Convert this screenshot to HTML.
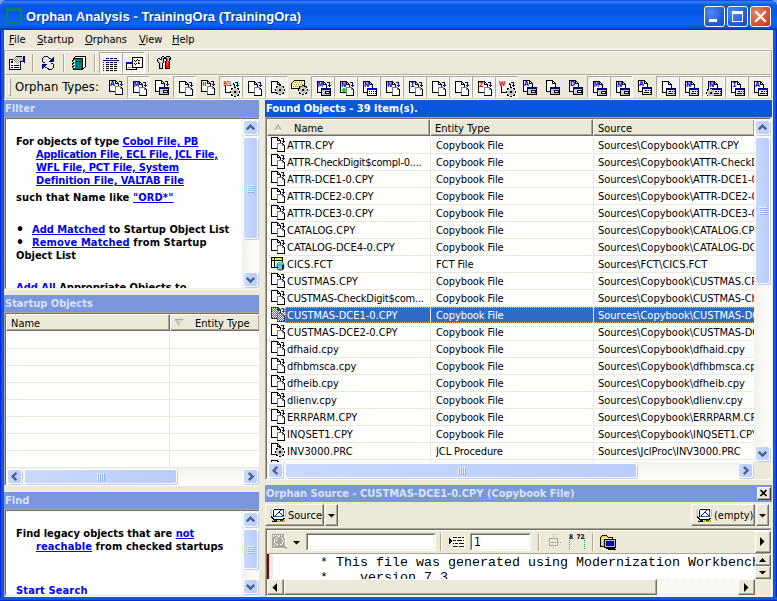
<!DOCTYPE html>
<html><head><meta charset="utf-8"><title>Orphan Analysis</title>
<style>
*{box-sizing:border-box;margin:0;padding:0}
html,body{width:777px;height:601px;overflow:hidden;background:#ECE9D8}
body{position:relative;font:11px 'DejaVu Sans Condensed','DejaVu Sans','Liberation Sans',sans-serif;color:#000}
.abs,.abs>*{position:absolute}
div,span,svg,a{position:absolute}
.t{white-space:nowrap;line-height:13px;height:13px}
a{position:static;color:#0000ff;text-decoration:underline}
.hdr{height:17px;background:#7A96DF;color:#D8E4F8;font-weight:bold;line-height:18px;padding-left:1px;white-space:nowrap;overflow:hidden}
.hdr.act{background:#0A56E1;color:#fff}
.sunk{border:1px solid;border-color:#ACA899 #fff #fff #ACA899;background:#fff}
.sunk>.in{left:0;top:0;right:0;bottom:0;border:1px solid;border-color:#716F64 #F1EFE2 #F1EFE2 #716F64;overflow:hidden}
.b{font-weight:bold}
.sbv{width:17px;background:linear-gradient(90deg,#F3F1EC,#FEFEFB)}
.sbh{height:17px;background:linear-gradient(180deg,#F3F1EC,#FEFEFB)}
.sbtn{width:17px;height:17px}
.sbtn>i,.thumb{position:absolute;left:1px;top:1px;width:15px;height:15px;border-radius:2.5px;border:1px solid #fff;box-shadow:1px 1px 0 #B8C9F2;background:linear-gradient(90deg,#C9D9FD,#BACDF8)}
.thumb{width:auto;height:auto;right:1px;bottom:1px}
.sbh .x{}
.colh{height:17px;background:#ECE9D8;border:1px solid;border-color:#fff #716F64 #716F64 #fff;box-shadow:-1px -1px 0 #ACA899 inset;line-height:18px;white-space:nowrap;overflow:hidden}
.row{height:17px;left:0;right:0;border-bottom:1px solid #ECE9D8}
.cell{top:0;height:16px;line-height:18px;white-space:nowrap;overflow:hidden}
.tb{width:23px;height:22px}
.tb.on{border:1px solid;border-color:#ACA899 #fff #fff #ACA899;background-color:#F6F4EC;background-image:repeating-conic-gradient(#fff 0 25%,#ECE9D8 0 50%);background-size:2px 2px}
.sep{width:2px;border-left:1px solid #ACA899;border-right:1px solid #fff}
</style></head>
<body>
<div style="left:0;top:0;width:777px;height:601px;background:#0A48D6"></div>
<div style="left:0;top:0;width:777px;height:30px;background:linear-gradient(180deg,#0A3ADB 0%,#2C75EC 4%,#2E7EF2 8%,#1463EA 13%,#0659E6 19%,#0556E3 45%,#0A5FEE 56%,#0C64F4 80%,#0A5CEB 88%,#0848D6 94%,#0433B4 100%)"></div>
<div style="left:0;top:0;width:6px;height:6px;background:radial-gradient(circle at 6px 6px,transparent 5.5px,#859BE0 6.2px)"></div>
<div style="left:771px;top:0;width:6px;height:6px;background:radial-gradient(circle at 0 6px,transparent 5.5px,#859BE0 6.2px)"></div>
<div style="left:0;top:30px;width:4px;height:571px;background:linear-gradient(90deg,#0019CF,#0831D9 25%,#166AEE 50%,#0855DD 75%)"></div>
<div style="left:773px;top:30px;width:4px;height:571px;background:linear-gradient(270deg,#0019CF,#0831D9 25%,#166AEE 50%,#0855DD 75%)"></div>
<div style="left:0;top:597px;width:777px;height:4px;background:linear-gradient(0deg,#0019CF,#0831D9 25%,#166AEE 50%,#0855DD 75%)"></div>
<div style="left:4px;top:30px;width:769px;height:567px;background:#ECE9D8"></div>
<div style="left:6px;top:8px;width:16px;height:15px;border:1px solid #0A806C;border-top-width:3px;border-left-width:2px;border-right-width:2px;border-radius:1px"></div>
<div class="t" style="left:26px;top:9px;height:16px;line-height:16px;font:bold 13px/16px 'Liberation Sans',sans-serif;color:#fff;text-shadow:1px 1px 0 rgba(10,24,131,.7);letter-spacing:0.06px">Orphan Analysis - TrainingOra (TrainingOra)</div>
<div style="left:704px;top:6px;width:21px;height:21px;border:1px solid #fff;border-radius:3px;background:radial-gradient(circle at 30% 30%,#4C8CF8,#1E58D8 70%,#1747C0)"><div style="left:4px;top:12px;width:8px;height:3px;background:#fff"></div></div>
<div style="left:727px;top:6px;width:21px;height:21px;border:1px solid #fff;border-radius:3px;background:radial-gradient(circle at 30% 30%,#4C8CF8,#1E58D8 70%,#1747C0)"><div style="left:4px;top:4px;width:11px;height:11px;border:1px solid #fff;border-top-width:3px"></div></div>
<div style="left:750px;top:6px;width:21px;height:21px;border:1px solid #fff;border-radius:3px;background:radial-gradient(circle at 30% 30%,#E8876A,#D5492A 70%,#B8311A)"><svg width="19" height="19" viewBox="0 0 19 19" style="left:0;top:0"><path d="M5 5L14 14M14 5L5 14" stroke="#fff" stroke-width="2.2" stroke-linecap="square"/></svg></div>
<div class="t" style="left:9px;top:33px"><span style="position:static;text-decoration:underline">F</span>ile</div>
<div class="t" style="left:37px;top:33px"><span style="position:static;text-decoration:underline">S</span>tartup</div>
<div class="t" style="left:85px;top:33px"><span style="position:static;text-decoration:underline">O</span>rphans</div>
<div class="t" style="left:139px;top:33px"><span style="position:static;text-decoration:underline">V</span>iew</div>
<div class="t" style="left:172px;top:33px"><span style="position:static;text-decoration:underline">H</span>elp</div>
<div style="left:4px;top:49px;width:769px;height:1px;background:#fff"></div>
<div style="left:4px;top:50px;width:768px;height:49px;border:1px solid #ACA899;border-bottom:0;box-shadow:1px 0 0 #fff,1px 1px 0 #fff inset"></div>
<div style="left:5px;top:74px;width:766px;height:1px;background:#ACA899"></div>
<div style="left:5px;top:75px;width:766px;height:1px;background:#fff"></div>
<div style="left:4px;top:98px;width:768px;height:1px;background:#C9C6B5"></div>
<div style="left:4px;top:99px;width:769px;height:1px;background:#fff"></div>
<div class="sep" style="left:32px;top:54px;height:18px"></div>
<div class="sep" style="left:63px;top:54px;height:18px"></div>
<div class="sep" style="left:94px;top:54px;height:18px"></div>
<div class="tb on" style="left:99px;top:52px;width:23px;height:22px"></div>
<div class="tb on" style="left:122px;top:52px;width:23px;height:22px"></div>
<div class="sep" style="left:148px;top:54px;height:18px"></div>
<div style="left:8px;top:78px;width:3px;height:18px;border:1px solid;border-color:#fff #ACA899 #ACA899 #fff"></div>
<div class="t" style="left:15px;top:78px;height:18px;font:13px/18px 'DejaVu Sans Condensed','DejaVu Sans','Liberation Sans',sans-serif">Orphan Types:</div>
<svg width="17" height="15" viewBox="0 0 17 15" shape-rendering="crispEdges" style="left:9px;top:55px"><rect x="7" y="1" width="6" height="1" fill="#000"/><rect x="14" y="1" width="2" height="1" fill="#000080"/><rect x="6" y="2" width="1" height="1" fill="#808080"/><rect x="7" y="2" width="1" height="1" fill="#fff"/><rect x="8" y="2" width="6" height="1" fill="#C0C0C0"/><rect x="14" y="2" width="2" height="1" fill="#000080"/><rect x="5" y="3" width="1" height="1" fill="#808080"/><rect x="6" y="3" width="1" height="1" fill="#fff"/><rect x="7" y="3" width="1" height="1" fill="#808080"/><rect x="8" y="3" width="1" height="1" fill="#fff"/><rect x="9" y="3" width="5" height="1" fill="#C0C0C0"/><rect x="14" y="3" width="2" height="1" fill="#000080"/><rect x="0" y="4" width="4" height="1" fill="#000"/><rect x="4" y="4" width="1" height="1" fill="#808080"/><rect x="5" y="4" width="1" height="1" fill="#fff"/><rect x="6" y="4" width="1" height="1" fill="#808080"/><rect x="7" y="4" width="1" height="1" fill="#fff"/><rect x="8" y="4" width="1" height="1" fill="#808080"/><rect x="9" y="4" width="1" height="1" fill="#fff"/><rect x="10" y="4" width="4" height="1" fill="#C0C0C0"/><rect x="14" y="4" width="2" height="1" fill="#000080"/><rect x="0" y="5" width="1" height="1" fill="#000"/><rect x="1" y="5" width="2" height="1" fill="#fff"/><rect x="3" y="5" width="1" height="1" fill="#808080"/><rect x="4" y="5" width="1" height="1" fill="#fff"/><rect x="5" y="5" width="1" height="1" fill="#808080"/><rect x="6" y="5" width="1" height="1" fill="#fff"/><rect x="7" y="5" width="1" height="1" fill="#808080"/><rect x="8" y="5" width="1" height="1" fill="#fff"/><rect x="9" y="5" width="1" height="1" fill="#808080"/><rect x="10" y="5" width="1" height="1" fill="#fff"/><rect x="11" y="5" width="3" height="1" fill="#C0C0C0"/><rect x="14" y="5" width="2" height="1" fill="#000080"/><rect x="0" y="6" width="1" height="1" fill="#000"/><rect x="1" y="6" width="1" height="1" fill="#fff"/><rect x="2" y="6" width="2" height="1" fill="#000"/><rect x="4" y="6" width="2" height="1" fill="#fff"/><rect x="6" y="6" width="1" height="1" fill="#808080"/><rect x="7" y="6" width="1" height="1" fill="#fff"/><rect x="8" y="6" width="1" height="1" fill="#808080"/><rect x="9" y="6" width="1" height="1" fill="#fff"/><rect x="10" y="6" width="1" height="1" fill="#808080"/><rect x="11" y="6" width="3" height="1" fill="#000"/><rect x="14" y="6" width="2" height="1" fill="#000080"/><rect x="0" y="7" width="1" height="1" fill="#000"/><rect x="1" y="7" width="1" height="1" fill="#fff"/><rect x="2" y="7" width="2" height="1" fill="#000"/><rect x="4" y="7" width="3" height="1" fill="#fff"/><rect x="7" y="7" width="1" height="1" fill="#808080"/><rect x="8" y="7" width="1" height="1" fill="#fff"/><rect x="9" y="7" width="1" height="1" fill="#808080"/><rect x="10" y="7" width="1" height="1" fill="#fff"/><rect x="11" y="7" width="1" height="1" fill="#000"/><rect x="15" y="7" width="1" height="1" fill="#000080"/><rect x="0" y="8" width="1" height="1" fill="#000"/><rect x="1" y="8" width="7" height="1" fill="#fff"/><rect x="8" y="8" width="1" height="1" fill="#808080"/><rect x="9" y="8" width="2" height="1" fill="#fff"/><rect x="11" y="8" width="1" height="1" fill="#000"/><rect x="0" y="9" width="1" height="1" fill="#000"/><rect x="1" y="9" width="10" height="1" fill="#fff"/><rect x="11" y="9" width="1" height="1" fill="#000"/><rect x="0" y="10" width="1" height="1" fill="#000"/><rect x="1" y="10" width="1" height="1" fill="#fff"/><rect x="2" y="10" width="2" height="1" fill="#000"/><rect x="4" y="10" width="1" height="1" fill="#fff"/><rect x="5" y="10" width="5" height="1" fill="#000"/><rect x="10" y="10" width="1" height="1" fill="#fff"/><rect x="11" y="10" width="1" height="1" fill="#000"/><rect x="0" y="11" width="1" height="1" fill="#000"/><rect x="1" y="11" width="10" height="1" fill="#fff"/><rect x="11" y="11" width="1" height="1" fill="#000"/><rect x="0" y="12" width="1" height="1" fill="#000"/><rect x="1" y="12" width="1" height="1" fill="#fff"/><rect x="2" y="12" width="2" height="1" fill="#000"/><rect x="4" y="12" width="1" height="1" fill="#fff"/><rect x="5" y="12" width="5" height="1" fill="#000"/><rect x="10" y="12" width="1" height="1" fill="#fff"/><rect x="11" y="12" width="1" height="1" fill="#000"/><rect x="0" y="13" width="1" height="1" fill="#000"/><rect x="1" y="13" width="10" height="1" fill="#fff"/><rect x="11" y="13" width="1" height="1" fill="#000"/><rect x="0" y="14" width="12" height="1" fill="#000"/></svg>
<svg width="12" height="14" viewBox="0 0 12 14" shape-rendering="crispEdges" style="left:42px;top:56px"><rect x="2" y="0" width="4" height="1" fill="#000080"/><rect x="1" y="1" width="1" height="1" fill="#000080"/><rect x="6" y="1" width="1" height="1" fill="#000080"/><rect x="11" y="1" width="1" height="1" fill="#000080"/><rect x="0" y="2" width="1" height="1" fill="#000080"/><rect x="7" y="2" width="2" height="1" fill="#000080"/><rect x="10" y="2" width="2" height="1" fill="#000080"/><rect x="0" y="3" width="1" height="1" fill="#000080"/><rect x="9" y="3" width="3" height="1" fill="#000080"/><rect x="0" y="4" width="1" height="1" fill="#000080"/><rect x="8" y="4" width="4" height="1" fill="#000080"/><rect x="0" y="5" width="1" height="1" fill="#000080"/><rect x="7" y="5" width="5" height="1" fill="#000080"/><rect x="1" y="6" width="2" height="1" fill="#000080"/><rect x="9" y="7" width="2" height="1" fill="#000080"/><rect x="0" y="8" width="5" height="1" fill="#000080"/><rect x="11" y="8" width="1" height="1" fill="#000080"/><rect x="0" y="9" width="4" height="1" fill="#000080"/><rect x="11" y="9" width="1" height="1" fill="#000080"/><rect x="0" y="10" width="3" height="1" fill="#000080"/><rect x="11" y="10" width="1" height="1" fill="#000080"/><rect x="0" y="11" width="2" height="1" fill="#000080"/><rect x="3" y="11" width="2" height="1" fill="#000080"/><rect x="11" y="11" width="1" height="1" fill="#000080"/><rect x="0" y="12" width="1" height="1" fill="#000080"/><rect x="5" y="12" width="2" height="1" fill="#000080"/><rect x="10" y="12" width="1" height="1" fill="#000080"/><rect x="6" y="13" width="4" height="1" fill="#000080"/></svg>
<svg width="14" height="14" viewBox="0 0 14 14" shape-rendering="crispEdges" style="left:72px;top:56px"><rect x="3" y="0" width="11" height="1" fill="#000"/><rect x="2" y="1" width="1" height="1" fill="#000"/><rect x="3" y="1" width="10" height="1" fill="#fff"/><rect x="13" y="1" width="1" height="1" fill="#000"/><rect x="1" y="2" width="10" height="1" fill="#000"/><rect x="11" y="2" width="2" height="1" fill="#fff"/><rect x="13" y="2" width="1" height="1" fill="#000"/><rect x="1" y="3" width="1" height="1" fill="#000"/><rect x="2" y="3" width="8" height="1" fill="#008080"/><rect x="10" y="3" width="1" height="1" fill="#000"/><rect x="11" y="3" width="2" height="1" fill="#fff"/><rect x="13" y="3" width="1" height="1" fill="#000"/><rect x="0" y="4" width="2" height="1" fill="#000"/><rect x="2" y="4" width="1" height="1" fill="#fff"/><rect x="3" y="4" width="7" height="1" fill="#008080"/><rect x="10" y="4" width="1" height="1" fill="#000"/><rect x="11" y="4" width="2" height="1" fill="#fff"/><rect x="13" y="4" width="1" height="1" fill="#000"/><rect x="0" y="5" width="1" height="1" fill="#000"/><rect x="1" y="5" width="2" height="1" fill="#fff"/><rect x="3" y="5" width="1" height="1" fill="#008080"/><rect x="4" y="5" width="2" height="1" fill="#000"/><rect x="6" y="5" width="1" height="1" fill="#008080"/><rect x="7" y="5" width="2" height="1" fill="#000"/><rect x="9" y="5" width="1" height="1" fill="#008080"/><rect x="10" y="5" width="1" height="1" fill="#000"/><rect x="11" y="5" width="2" height="1" fill="#fff"/><rect x="13" y="5" width="1" height="1" fill="#000"/><rect x="1" y="6" width="1" height="1" fill="#000"/><rect x="2" y="6" width="8" height="1" fill="#008080"/><rect x="10" y="6" width="1" height="1" fill="#000"/><rect x="11" y="6" width="2" height="1" fill="#fff"/><rect x="13" y="6" width="1" height="1" fill="#000"/><rect x="0" y="7" width="2" height="1" fill="#000"/><rect x="2" y="7" width="1" height="1" fill="#fff"/><rect x="3" y="7" width="7" height="1" fill="#008080"/><rect x="10" y="7" width="1" height="1" fill="#000"/><rect x="11" y="7" width="2" height="1" fill="#fff"/><rect x="13" y="7" width="1" height="1" fill="#000"/><rect x="0" y="8" width="1" height="1" fill="#000"/><rect x="1" y="8" width="2" height="1" fill="#fff"/><rect x="3" y="8" width="7" height="1" fill="#008080"/><rect x="10" y="8" width="1" height="1" fill="#000"/><rect x="11" y="8" width="2" height="1" fill="#fff"/><rect x="13" y="8" width="1" height="1" fill="#000"/><rect x="1" y="9" width="1" height="1" fill="#000"/><rect x="2" y="9" width="8" height="1" fill="#008080"/><rect x="10" y="9" width="1" height="1" fill="#000"/><rect x="11" y="9" width="2" height="1" fill="#fff"/><rect x="13" y="9" width="1" height="1" fill="#000"/><rect x="0" y="10" width="2" height="1" fill="#000"/><rect x="2" y="10" width="1" height="1" fill="#fff"/><rect x="3" y="10" width="7" height="1" fill="#008080"/><rect x="10" y="10" width="1" height="1" fill="#000"/><rect x="11" y="10" width="2" height="1" fill="#fff"/><rect x="13" y="10" width="1" height="1" fill="#000"/><rect x="0" y="11" width="1" height="1" fill="#000"/><rect x="1" y="11" width="2" height="1" fill="#fff"/><rect x="3" y="11" width="7" height="1" fill="#008080"/><rect x="10" y="11" width="1" height="1" fill="#000"/><rect x="11" y="11" width="1" height="1" fill="#fff"/><rect x="12" y="11" width="1" height="1" fill="#000"/><rect x="1" y="12" width="1" height="1" fill="#000"/><rect x="2" y="12" width="8" height="1" fill="#008080"/><rect x="10" y="12" width="2" height="1" fill="#000"/><rect x="1" y="13" width="10" height="1" fill="#000"/></svg>
<svg width="16" height="13" viewBox="0 0 16 13" shape-rendering="crispEdges" style="left:103px;top:58px"><rect x="3" y="0" width="3" height="1" fill="#000"/><rect x="7" y="0" width="3" height="1" fill="#000"/><rect x="11" y="0" width="3" height="1" fill="#000"/><rect x="0" y="2" width="16" height="1" fill="#000080"/><rect x="0" y="4" width="1" height="1" fill="#000080"/><rect x="3" y="4" width="3" height="1" fill="#000"/><rect x="7" y="4" width="3" height="1" fill="#000"/><rect x="11" y="4" width="3" height="1" fill="#000"/><rect x="0" y="6" width="1" height="1" fill="#000080"/><rect x="3" y="6" width="3" height="1" fill="#000"/><rect x="7" y="6" width="3" height="1" fill="#000"/><rect x="11" y="6" width="3" height="1" fill="#000"/><rect x="0" y="8" width="1" height="1" fill="#000080"/><rect x="3" y="8" width="3" height="1" fill="#000"/><rect x="7" y="8" width="3" height="1" fill="#000"/><rect x="11" y="8" width="3" height="1" fill="#000"/><rect x="0" y="10" width="1" height="1" fill="#000080"/><rect x="3" y="10" width="3" height="1" fill="#000"/><rect x="7" y="10" width="3" height="1" fill="#000"/><rect x="11" y="10" width="3" height="1" fill="#000"/><rect x="0" y="12" width="1" height="1" fill="#000080"/><rect x="3" y="12" width="3" height="1" fill="#000"/><rect x="7" y="12" width="3" height="1" fill="#000"/><rect x="11" y="12" width="3" height="1" fill="#000"/></svg>
<svg width="17" height="13" viewBox="0 0 17 13" shape-rendering="crispEdges" style="left:126px;top:57px"><rect x="6" y="0" width="11" height="1" fill="#000"/><rect x="6" y="1" width="1" height="1" fill="#000"/><rect x="7" y="1" width="9" height="1" fill="#fff"/><rect x="16" y="1" width="1" height="1" fill="#000"/><rect x="6" y="2" width="1" height="1" fill="#000"/><rect x="7" y="2" width="4" height="1" fill="#fff"/><rect x="11" y="2" width="1" height="1" fill="#000"/><rect x="12" y="2" width="4" height="1" fill="#fff"/><rect x="16" y="2" width="1" height="1" fill="#000"/><rect x="6" y="3" width="1" height="1" fill="#000"/><rect x="7" y="3" width="1" height="1" fill="#fff"/><rect x="8" y="3" width="1" height="1" fill="#000"/><rect x="9" y="3" width="1" height="1" fill="#fff"/><rect x="10" y="3" width="1" height="1" fill="#000"/><rect x="11" y="3" width="1" height="1" fill="#fff"/><rect x="12" y="3" width="2" height="1" fill="#000"/><rect x="14" y="3" width="2" height="1" fill="#fff"/><rect x="16" y="3" width="1" height="1" fill="#000"/><rect x="6" y="4" width="1" height="1" fill="#000"/><rect x="7" y="4" width="2" height="1" fill="#fff"/><rect x="9" y="4" width="1" height="1" fill="#000"/><rect x="10" y="4" width="6" height="1" fill="#fff"/><rect x="16" y="4" width="1" height="1" fill="#000"/><rect x="0" y="5" width="6" height="1" fill="#0000FF"/><rect x="6" y="5" width="1" height="1" fill="#000"/><rect x="7" y="5" width="5" height="1" fill="#fff"/><rect x="12" y="5" width="1" height="1" fill="#000"/><rect x="13" y="5" width="3" height="1" fill="#fff"/><rect x="16" y="5" width="1" height="1" fill="#000"/><rect x="0" y="6" width="6" height="1" fill="#0000FF"/><rect x="6" y="6" width="1" height="1" fill="#000"/><rect x="7" y="6" width="1" height="1" fill="#fff"/><rect x="8" y="6" width="1" height="1" fill="#000"/><rect x="9" y="6" width="1" height="1" fill="#fff"/><rect x="10" y="6" width="1" height="1" fill="#000"/><rect x="11" y="6" width="1" height="1" fill="#fff"/><rect x="12" y="6" width="2" height="1" fill="#000"/><rect x="14" y="6" width="2" height="1" fill="#fff"/><rect x="16" y="6" width="1" height="1" fill="#000"/><rect x="0" y="7" width="1" height="1" fill="#000"/><rect x="1" y="7" width="5" height="1" fill="#fff"/><rect x="6" y="7" width="1" height="1" fill="#000"/><rect x="7" y="7" width="2" height="1" fill="#fff"/><rect x="9" y="7" width="1" height="1" fill="#000"/><rect x="10" y="7" width="6" height="1" fill="#fff"/><rect x="16" y="7" width="1" height="1" fill="#000"/><rect x="0" y="8" width="1" height="1" fill="#000"/><rect x="1" y="8" width="5" height="1" fill="#fff"/><rect x="6" y="8" width="1" height="1" fill="#000"/><rect x="7" y="8" width="9" height="1" fill="#fff"/><rect x="16" y="8" width="1" height="1" fill="#000"/><rect x="0" y="9" width="1" height="1" fill="#000"/><rect x="1" y="9" width="5" height="1" fill="#fff"/><rect x="6" y="9" width="1" height="1" fill="#000"/><rect x="7" y="9" width="9" height="1" fill="#fff"/><rect x="16" y="9" width="1" height="1" fill="#000"/><rect x="0" y="10" width="1" height="1" fill="#000"/><rect x="1" y="10" width="1" height="1" fill="#fff"/><rect x="2" y="10" width="3" height="1" fill="#808080"/><rect x="5" y="10" width="1" height="1" fill="#fff"/><rect x="6" y="10" width="11" height="1" fill="#000"/><rect x="0" y="11" width="1" height="1" fill="#000"/><rect x="1" y="11" width="9" height="1" fill="#fff"/><rect x="10" y="11" width="1" height="1" fill="#000"/><rect x="0" y="12" width="11" height="1" fill="#000"/></svg>
<svg width="14" height="13" viewBox="0 0 14 13" shape-rendering="crispEdges" style="left:157px;top:56px"><rect x="5" y="0" width="2" height="1" fill="#000"/><rect x="9" y="0" width="4" height="1" fill="#000"/><rect x="4" y="1" width="1" height="1" fill="#000"/><rect x="5" y="1" width="1" height="1" fill="#fff"/><rect x="6" y="1" width="1" height="1" fill="#C0C0C0"/><rect x="7" y="1" width="2" height="1" fill="#000"/><rect x="9" y="1" width="1" height="1" fill="#C0C0C0"/><rect x="10" y="1" width="1" height="1" fill="#fff"/><rect x="11" y="1" width="2" height="1" fill="#C0C0C0"/><rect x="13" y="1" width="1" height="1" fill="#000"/><rect x="1" y="2" width="2" height="1" fill="#000"/><rect x="4" y="2" width="1" height="1" fill="#000"/><rect x="5" y="2" width="1" height="1" fill="#C0C0C0"/><rect x="6" y="2" width="4" height="1" fill="#000"/><rect x="10" y="2" width="1" height="1" fill="#808080"/><rect x="11" y="2" width="1" height="1" fill="#C0C0C0"/><rect x="12" y="2" width="2" height="1" fill="#000"/><rect x="0" y="3" width="1" height="1" fill="#000"/><rect x="1" y="3" width="1" height="1" fill="#fff"/><rect x="2" y="3" width="1" height="1" fill="#C0C0C0"/><rect x="3" y="3" width="2" height="1" fill="#000"/><rect x="5" y="3" width="1" height="1" fill="#fff"/><rect x="6" y="3" width="1" height="1" fill="#000"/><rect x="9" y="3" width="1" height="1" fill="#000"/><rect x="10" y="3" width="1" height="1" fill="#808080"/><rect x="11" y="3" width="1" height="1" fill="#C0C0C0"/><rect x="12" y="3" width="2" height="1" fill="#000"/><rect x="0" y="4" width="1" height="1" fill="#000"/><rect x="1" y="4" width="1" height="1" fill="#C0C0C0"/><rect x="2" y="4" width="1" height="1" fill="#fff"/><rect x="3" y="4" width="3" height="1" fill="#C0C0C0"/><rect x="6" y="4" width="1" height="1" fill="#000"/><rect x="9" y="4" width="1" height="1" fill="#000"/><rect x="10" y="4" width="1" height="1" fill="#808080"/><rect x="11" y="4" width="1" height="1" fill="#C0C0C0"/><rect x="12" y="4" width="1" height="1" fill="#000"/><rect x="0" y="5" width="1" height="1" fill="#000"/><rect x="1" y="5" width="2" height="1" fill="#C0C0C0"/><rect x="3" y="5" width="2" height="1" fill="#fff"/><rect x="5" y="5" width="1" height="1" fill="#C0C0C0"/><rect x="6" y="5" width="1" height="1" fill="#000"/><rect x="8" y="5" width="1" height="1" fill="#000"/><rect x="9" y="5" width="1" height="1" fill="#FF0000"/><rect x="10" y="5" width="1" height="1" fill="#808080"/><rect x="11" y="5" width="1" height="1" fill="#FF0000"/><rect x="12" y="5" width="1" height="1" fill="#000"/><rect x="1" y="6" width="1" height="1" fill="#000"/><rect x="2" y="6" width="4" height="1" fill="#C0C0C0"/><rect x="6" y="6" width="1" height="1" fill="#000"/><rect x="8" y="6" width="1" height="1" fill="#000"/><rect x="9" y="6" width="1" height="1" fill="#FF0000"/><rect x="10" y="6" width="1" height="1" fill="#FFFF00"/><rect x="11" y="6" width="1" height="1" fill="#FF0000"/><rect x="12" y="6" width="1" height="1" fill="#000"/><rect x="2" y="7" width="1" height="1" fill="#000"/><rect x="3" y="7" width="1" height="1" fill="#C0C0C0"/><rect x="4" y="7" width="1" height="1" fill="#fff"/><rect x="5" y="7" width="1" height="1" fill="#000"/><rect x="8" y="7" width="1" height="1" fill="#000"/><rect x="9" y="7" width="1" height="1" fill="#FF0000"/><rect x="10" y="7" width="1" height="1" fill="#808080"/><rect x="11" y="7" width="1" height="1" fill="#FF0000"/><rect x="12" y="7" width="1" height="1" fill="#000"/><rect x="2" y="8" width="1" height="1" fill="#000"/><rect x="3" y="8" width="1" height="1" fill="#C0C0C0"/><rect x="4" y="8" width="1" height="1" fill="#fff"/><rect x="5" y="8" width="1" height="1" fill="#000"/><rect x="8" y="8" width="1" height="1" fill="#000"/><rect x="9" y="8" width="1" height="1" fill="#FF0000"/><rect x="10" y="8" width="1" height="1" fill="#808080"/><rect x="11" y="8" width="1" height="1" fill="#FF0000"/><rect x="12" y="8" width="1" height="1" fill="#000"/><rect x="2" y="9" width="1" height="1" fill="#000"/><rect x="3" y="9" width="1" height="1" fill="#C0C0C0"/><rect x="4" y="9" width="1" height="1" fill="#fff"/><rect x="5" y="9" width="1" height="1" fill="#000"/><rect x="8" y="9" width="1" height="1" fill="#000"/><rect x="9" y="9" width="1" height="1" fill="#FF0000"/><rect x="10" y="9" width="1" height="1" fill="#808080"/><rect x="11" y="9" width="1" height="1" fill="#FF0000"/><rect x="12" y="9" width="1" height="1" fill="#000"/><rect x="2" y="10" width="1" height="1" fill="#000"/><rect x="3" y="10" width="1" height="1" fill="#C0C0C0"/><rect x="4" y="10" width="1" height="1" fill="#fff"/><rect x="5" y="10" width="1" height="1" fill="#000"/><rect x="8" y="10" width="1" height="1" fill="#000"/><rect x="9" y="10" width="3" height="1" fill="#FF0000"/><rect x="12" y="10" width="1" height="1" fill="#000"/><rect x="2" y="11" width="1" height="1" fill="#000"/><rect x="3" y="11" width="1" height="1" fill="#C0C0C0"/><rect x="4" y="11" width="1" height="1" fill="#fff"/><rect x="5" y="11" width="1" height="1" fill="#000"/><rect x="8" y="11" width="1" height="1" fill="#000"/><rect x="9" y="11" width="3" height="1" fill="#FF0000"/><rect x="12" y="11" width="1" height="1" fill="#000"/><rect x="2" y="12" width="4" height="1" fill="#000"/><rect x="8" y="12" width="5" height="1" fill="#000"/></svg>
<svg width="10" height="12" viewBox="0 0 10 12" shape-rendering="crispEdges" style="left:109px;top:80px"><rect x="0" y="0" width="7" height="1" fill="#000"/><rect x="0" y="1" width="1" height="1" fill="#000"/><rect x="1" y="1" width="5" height="1" fill="#fff"/><rect x="6" y="1" width="2" height="1" fill="#000"/><rect x="0" y="2" width="1" height="1" fill="#000"/><rect x="1" y="2" width="5" height="1" fill="#fff"/><rect x="6" y="2" width="1" height="1" fill="#000"/><rect x="7" y="2" width="1" height="1" fill="#fff"/><rect x="8" y="2" width="1" height="1" fill="#000"/><rect x="0" y="3" width="1" height="1" fill="#000"/><rect x="1" y="3" width="5" height="1" fill="#fff"/><rect x="6" y="3" width="4" height="1" fill="#000"/><rect x="0" y="4" width="1" height="1" fill="#000"/><rect x="1" y="4" width="8" height="1" fill="#fff"/><rect x="9" y="4" width="1" height="1" fill="#000"/><rect x="0" y="5" width="1" height="1" fill="#000"/><rect x="1" y="5" width="8" height="1" fill="#fff"/><rect x="9" y="5" width="1" height="1" fill="#000"/><rect x="0" y="6" width="1" height="1" fill="#000"/><rect x="1" y="6" width="8" height="1" fill="#fff"/><rect x="9" y="6" width="1" height="1" fill="#000"/><rect x="0" y="7" width="1" height="1" fill="#000"/><rect x="1" y="7" width="8" height="1" fill="#fff"/><rect x="9" y="7" width="1" height="1" fill="#000"/><rect x="0" y="8" width="1" height="1" fill="#000"/><rect x="1" y="8" width="8" height="1" fill="#fff"/><rect x="9" y="8" width="1" height="1" fill="#000"/><rect x="0" y="9" width="1" height="1" fill="#000"/><rect x="1" y="9" width="8" height="1" fill="#fff"/><rect x="9" y="9" width="1" height="1" fill="#000"/><rect x="0" y="10" width="1" height="1" fill="#000"/><rect x="1" y="10" width="8" height="1" fill="#fff"/><rect x="9" y="10" width="1" height="1" fill="#000"/><rect x="0" y="11" width="10" height="1" fill="#000"/></svg>
<svg width="23" height="22" viewBox="0 0 23 22" style="left:104px;top:76px"><text x="6" y="10" font-family="'DejaVu Sans Condensed','Liberation Sans',sans-serif" font-weight="bold" font-size="7" fill="#0000F0">A</text></svg>
<svg width="8" height="9" viewBox="0 0 8 9" shape-rendering="crispEdges" style="left:115px;top:86px"><rect x="0" y="0" width="6" height="1" fill="#808080"/><rect x="0" y="1" width="1" height="1" fill="#808080"/><rect x="1" y="1" width="4" height="1" fill="#fff"/><rect x="5" y="1" width="1" height="1" fill="#808080"/><rect x="6" y="1" width="1" height="1" fill="#000"/><rect x="0" y="2" width="1" height="1" fill="#808080"/><rect x="1" y="2" width="4" height="1" fill="#fff"/><rect x="5" y="2" width="2" height="1" fill="#808080"/><rect x="7" y="2" width="1" height="1" fill="#000"/><rect x="0" y="3" width="1" height="1" fill="#808080"/><rect x="1" y="3" width="6" height="1" fill="#fff"/><rect x="7" y="3" width="1" height="1" fill="#000"/><rect x="0" y="4" width="1" height="1" fill="#808080"/><rect x="1" y="4" width="6" height="1" fill="#fff"/><rect x="7" y="4" width="1" height="1" fill="#000"/><rect x="0" y="5" width="1" height="1" fill="#808080"/><rect x="1" y="5" width="6" height="1" fill="#fff"/><rect x="7" y="5" width="1" height="1" fill="#000"/><rect x="0" y="6" width="1" height="1" fill="#808080"/><rect x="1" y="6" width="6" height="1" fill="#fff"/><rect x="7" y="6" width="1" height="1" fill="#000"/><rect x="0" y="7" width="1" height="1" fill="#808080"/><rect x="1" y="7" width="6" height="1" fill="#fff"/><rect x="7" y="7" width="1" height="1" fill="#000"/><rect x="0" y="8" width="8" height="1" fill="#000"/></svg>
<svg width="5" height="5" viewBox="0 0 5 5" shape-rendering="crispEdges" style="left:119px;top:81px"><rect x="0" y="0" width="3" height="1" fill="#0000A8"/><rect x="2" y="1" width="1" height="1" fill="#0000A8"/><rect x="2" y="2" width="1" height="1" fill="#0000A8"/><rect x="1" y="3" width="3" height="1" fill="#0000A8"/><rect x="2" y="4" width="1" height="1" fill="#0000A8"/></svg>
<div class="tb on" style="left:127px;top:76px"></div>
<svg width="10" height="12" viewBox="0 0 10 12" shape-rendering="crispEdges" style="left:133px;top:81px"><rect x="0" y="0" width="7" height="1" fill="#000"/><rect x="0" y="1" width="1" height="1" fill="#000"/><rect x="1" y="1" width="5" height="1" fill="#fff"/><rect x="6" y="1" width="2" height="1" fill="#000"/><rect x="0" y="2" width="1" height="1" fill="#000"/><rect x="1" y="2" width="5" height="1" fill="#fff"/><rect x="6" y="2" width="1" height="1" fill="#000"/><rect x="7" y="2" width="1" height="1" fill="#fff"/><rect x="8" y="2" width="1" height="1" fill="#000"/><rect x="0" y="3" width="1" height="1" fill="#000"/><rect x="1" y="3" width="5" height="1" fill="#fff"/><rect x="6" y="3" width="4" height="1" fill="#000"/><rect x="0" y="4" width="1" height="1" fill="#000"/><rect x="1" y="4" width="8" height="1" fill="#fff"/><rect x="9" y="4" width="1" height="1" fill="#000"/><rect x="0" y="5" width="1" height="1" fill="#000"/><rect x="1" y="5" width="8" height="1" fill="#fff"/><rect x="9" y="5" width="1" height="1" fill="#000"/><rect x="0" y="6" width="1" height="1" fill="#000"/><rect x="1" y="6" width="8" height="1" fill="#fff"/><rect x="9" y="6" width="1" height="1" fill="#000"/><rect x="0" y="7" width="1" height="1" fill="#000"/><rect x="1" y="7" width="8" height="1" fill="#fff"/><rect x="9" y="7" width="1" height="1" fill="#000"/><rect x="0" y="8" width="1" height="1" fill="#000"/><rect x="1" y="8" width="8" height="1" fill="#fff"/><rect x="9" y="8" width="1" height="1" fill="#000"/><rect x="0" y="9" width="1" height="1" fill="#000"/><rect x="1" y="9" width="8" height="1" fill="#fff"/><rect x="9" y="9" width="1" height="1" fill="#000"/><rect x="0" y="10" width="1" height="1" fill="#000"/><rect x="1" y="10" width="8" height="1" fill="#fff"/><rect x="9" y="10" width="1" height="1" fill="#000"/><rect x="0" y="11" width="10" height="1" fill="#000"/></svg>
<svg width="23" height="22" viewBox="0 0 23 22" style="left:128px;top:77px"><text x="5.8" y="10" font-family="'DejaVu Sans Condensed','Liberation Sans',sans-serif" font-weight="bold" font-size="7" fill="#0000F0" textLength="5.4" lengthAdjust="spacingAndGlyphs">M</text></svg>
<svg width="8" height="9" viewBox="0 0 8 9" shape-rendering="crispEdges" style="left:139px;top:87px"><rect x="0" y="0" width="6" height="1" fill="#808080"/><rect x="0" y="1" width="1" height="1" fill="#808080"/><rect x="1" y="1" width="4" height="1" fill="#fff"/><rect x="5" y="1" width="1" height="1" fill="#808080"/><rect x="6" y="1" width="1" height="1" fill="#000"/><rect x="0" y="2" width="1" height="1" fill="#808080"/><rect x="1" y="2" width="4" height="1" fill="#fff"/><rect x="5" y="2" width="2" height="1" fill="#808080"/><rect x="7" y="2" width="1" height="1" fill="#000"/><rect x="0" y="3" width="1" height="1" fill="#808080"/><rect x="1" y="3" width="6" height="1" fill="#fff"/><rect x="7" y="3" width="1" height="1" fill="#000"/><rect x="0" y="4" width="1" height="1" fill="#808080"/><rect x="1" y="4" width="6" height="1" fill="#fff"/><rect x="7" y="4" width="1" height="1" fill="#000"/><rect x="0" y="5" width="1" height="1" fill="#808080"/><rect x="1" y="5" width="6" height="1" fill="#fff"/><rect x="7" y="5" width="1" height="1" fill="#000"/><rect x="0" y="6" width="1" height="1" fill="#808080"/><rect x="1" y="6" width="6" height="1" fill="#fff"/><rect x="7" y="6" width="1" height="1" fill="#000"/><rect x="0" y="7" width="1" height="1" fill="#808080"/><rect x="1" y="7" width="6" height="1" fill="#fff"/><rect x="7" y="7" width="1" height="1" fill="#000"/><rect x="0" y="8" width="8" height="1" fill="#000"/></svg>
<svg width="5" height="5" viewBox="0 0 5 5" shape-rendering="crispEdges" style="left:143px;top:82px"><rect x="0" y="0" width="3" height="1" fill="#0000A8"/><rect x="2" y="1" width="1" height="1" fill="#0000A8"/><rect x="2" y="2" width="1" height="1" fill="#0000A8"/><rect x="1" y="3" width="3" height="1" fill="#0000A8"/><rect x="2" y="4" width="1" height="1" fill="#0000A8"/></svg>
<svg width="10" height="12" viewBox="0 0 10 12" shape-rendering="crispEdges" style="left:155px;top:80px"><rect x="0" y="0" width="7" height="1" fill="#000"/><rect x="0" y="1" width="1" height="1" fill="#000"/><rect x="1" y="1" width="5" height="1" fill="#fff"/><rect x="6" y="1" width="2" height="1" fill="#000"/><rect x="0" y="2" width="1" height="1" fill="#000"/><rect x="1" y="2" width="5" height="1" fill="#fff"/><rect x="6" y="2" width="1" height="1" fill="#000"/><rect x="7" y="2" width="1" height="1" fill="#fff"/><rect x="8" y="2" width="1" height="1" fill="#000"/><rect x="0" y="3" width="1" height="1" fill="#000"/><rect x="1" y="3" width="5" height="1" fill="#fff"/><rect x="6" y="3" width="4" height="1" fill="#000"/><rect x="0" y="4" width="1" height="1" fill="#000"/><rect x="1" y="4" width="8" height="1" fill="#fff"/><rect x="9" y="4" width="1" height="1" fill="#000"/><rect x="0" y="5" width="1" height="1" fill="#000"/><rect x="1" y="5" width="8" height="1" fill="#fff"/><rect x="9" y="5" width="1" height="1" fill="#000"/><rect x="0" y="6" width="1" height="1" fill="#000"/><rect x="1" y="6" width="8" height="1" fill="#fff"/><rect x="9" y="6" width="1" height="1" fill="#000"/><rect x="0" y="7" width="1" height="1" fill="#000"/><rect x="1" y="7" width="8" height="1" fill="#fff"/><rect x="9" y="7" width="1" height="1" fill="#000"/><rect x="0" y="8" width="1" height="1" fill="#000"/><rect x="1" y="8" width="8" height="1" fill="#fff"/><rect x="9" y="8" width="1" height="1" fill="#000"/><rect x="0" y="9" width="1" height="1" fill="#000"/><rect x="1" y="9" width="8" height="1" fill="#fff"/><rect x="9" y="9" width="1" height="1" fill="#000"/><rect x="0" y="10" width="1" height="1" fill="#000"/><rect x="1" y="10" width="8" height="1" fill="#fff"/><rect x="9" y="10" width="1" height="1" fill="#000"/><rect x="0" y="11" width="10" height="1" fill="#000"/></svg>
<svg width="10" height="8" viewBox="0 0 10 8" shape-rendering="crispEdges" style="left:159px;top:87px"><rect x="0" y="0" width="10" height="1" fill="#000080"/><rect x="0" y="1" width="10" height="1" fill="#000080"/><rect x="0" y="2" width="1" height="1" fill="#000"/><rect x="1" y="2" width="8" height="1" fill="#C0C0C0"/><rect x="9" y="2" width="1" height="1" fill="#000"/><rect x="0" y="3" width="1" height="1" fill="#000"/><rect x="1" y="3" width="1" height="1" fill="#E0E0E0"/><rect x="2" y="3" width="1" height="1" fill="#C0C0C0"/><rect x="3" y="3" width="1" height="1" fill="#E0E0E0"/><rect x="4" y="3" width="6" height="1" fill="#000"/><rect x="0" y="4" width="1" height="1" fill="#000"/><rect x="1" y="4" width="1" height="1" fill="#C0C0C0"/><rect x="2" y="4" width="1" height="1" fill="#E0E0E0"/><rect x="3" y="4" width="1" height="1" fill="#C0C0C0"/><rect x="4" y="4" width="1" height="1" fill="#000"/><rect x="5" y="4" width="3" height="1" fill="#fff"/><rect x="8" y="4" width="2" height="1" fill="#000"/><rect x="0" y="5" width="1" height="1" fill="#000"/><rect x="1" y="5" width="1" height="1" fill="#E0E0E0"/><rect x="2" y="5" width="1" height="1" fill="#C0C0C0"/><rect x="3" y="5" width="1" height="1" fill="#E0E0E0"/><rect x="4" y="5" width="6" height="1" fill="#000"/><rect x="0" y="6" width="1" height="1" fill="#000"/><rect x="1" y="6" width="8" height="1" fill="#C0C0C0"/><rect x="9" y="6" width="1" height="1" fill="#000"/><rect x="0" y="7" width="10" height="1" fill="#000"/></svg>
<svg width="5" height="5" viewBox="0 0 5 5" shape-rendering="crispEdges" style="left:165px;top:81px"><rect x="0" y="0" width="3" height="1" fill="#0000A8"/><rect x="2" y="1" width="1" height="1" fill="#0000A8"/><rect x="2" y="2" width="1" height="1" fill="#0000A8"/><rect x="1" y="3" width="3" height="1" fill="#0000A8"/><rect x="2" y="4" width="1" height="1" fill="#0000A8"/></svg>
<div class="tb on" style="left:173px;top:76px"></div>
<svg width="10" height="12" viewBox="0 0 10 12" shape-rendering="crispEdges" style="left:179px;top:81px"><rect x="0" y="0" width="7" height="1" fill="#000"/><rect x="0" y="1" width="1" height="1" fill="#000"/><rect x="1" y="1" width="5" height="1" fill="#fff"/><rect x="6" y="1" width="2" height="1" fill="#000"/><rect x="0" y="2" width="1" height="1" fill="#000"/><rect x="1" y="2" width="5" height="1" fill="#fff"/><rect x="6" y="2" width="1" height="1" fill="#000"/><rect x="7" y="2" width="1" height="1" fill="#fff"/><rect x="8" y="2" width="1" height="1" fill="#000"/><rect x="0" y="3" width="1" height="1" fill="#000"/><rect x="1" y="3" width="5" height="1" fill="#fff"/><rect x="6" y="3" width="4" height="1" fill="#000"/><rect x="0" y="4" width="1" height="1" fill="#000"/><rect x="1" y="4" width="8" height="1" fill="#fff"/><rect x="9" y="4" width="1" height="1" fill="#000"/><rect x="0" y="5" width="1" height="1" fill="#000"/><rect x="1" y="5" width="8" height="1" fill="#fff"/><rect x="9" y="5" width="1" height="1" fill="#000"/><rect x="0" y="6" width="1" height="1" fill="#000"/><rect x="1" y="6" width="8" height="1" fill="#fff"/><rect x="9" y="6" width="1" height="1" fill="#000"/><rect x="0" y="7" width="1" height="1" fill="#000"/><rect x="1" y="7" width="8" height="1" fill="#fff"/><rect x="9" y="7" width="1" height="1" fill="#000"/><rect x="0" y="8" width="1" height="1" fill="#000"/><rect x="1" y="8" width="8" height="1" fill="#fff"/><rect x="9" y="8" width="1" height="1" fill="#000"/><rect x="0" y="9" width="1" height="1" fill="#000"/><rect x="1" y="9" width="8" height="1" fill="#fff"/><rect x="9" y="9" width="1" height="1" fill="#000"/><rect x="0" y="10" width="1" height="1" fill="#000"/><rect x="1" y="10" width="8" height="1" fill="#fff"/><rect x="9" y="10" width="1" height="1" fill="#000"/><rect x="0" y="11" width="10" height="1" fill="#000"/></svg>
<svg width="8" height="9" viewBox="0 0 8 9" shape-rendering="crispEdges" style="left:185px;top:87px"><rect x="0" y="0" width="6" height="1" fill="#808080"/><rect x="0" y="1" width="1" height="1" fill="#808080"/><rect x="1" y="1" width="4" height="1" fill="#fff"/><rect x="5" y="1" width="1" height="1" fill="#808080"/><rect x="6" y="1" width="1" height="1" fill="#000"/><rect x="0" y="2" width="1" height="1" fill="#808080"/><rect x="1" y="2" width="4" height="1" fill="#fff"/><rect x="5" y="2" width="2" height="1" fill="#808080"/><rect x="7" y="2" width="1" height="1" fill="#000"/><rect x="0" y="3" width="1" height="1" fill="#808080"/><rect x="1" y="3" width="6" height="1" fill="#fff"/><rect x="7" y="3" width="1" height="1" fill="#000"/><rect x="0" y="4" width="1" height="1" fill="#808080"/><rect x="1" y="4" width="6" height="1" fill="#fff"/><rect x="7" y="4" width="1" height="1" fill="#000"/><rect x="0" y="5" width="1" height="1" fill="#808080"/><rect x="1" y="5" width="6" height="1" fill="#fff"/><rect x="7" y="5" width="1" height="1" fill="#000"/><rect x="0" y="6" width="1" height="1" fill="#808080"/><rect x="1" y="6" width="6" height="1" fill="#fff"/><rect x="7" y="6" width="1" height="1" fill="#000"/><rect x="0" y="7" width="1" height="1" fill="#808080"/><rect x="1" y="7" width="6" height="1" fill="#fff"/><rect x="7" y="7" width="1" height="1" fill="#000"/><rect x="0" y="8" width="8" height="1" fill="#000"/></svg>
<svg width="5" height="5" viewBox="0 0 5 5" shape-rendering="crispEdges" style="left:189px;top:82px"><rect x="0" y="0" width="3" height="1" fill="#0000A8"/><rect x="2" y="1" width="1" height="1" fill="#0000A8"/><rect x="2" y="2" width="1" height="1" fill="#0000A8"/><rect x="1" y="3" width="3" height="1" fill="#0000A8"/><rect x="2" y="4" width="1" height="1" fill="#0000A8"/></svg>
<svg width="10" height="12" viewBox="0 0 10 12" shape-rendering="crispEdges" style="left:201px;top:80px"><rect x="0" y="0" width="7" height="1" fill="#000"/><rect x="0" y="1" width="1" height="1" fill="#000"/><rect x="1" y="1" width="5" height="1" fill="#fff"/><rect x="6" y="1" width="2" height="1" fill="#000"/><rect x="0" y="2" width="1" height="1" fill="#000"/><rect x="1" y="2" width="5" height="1" fill="#fff"/><rect x="6" y="2" width="1" height="1" fill="#000"/><rect x="7" y="2" width="1" height="1" fill="#fff"/><rect x="8" y="2" width="1" height="1" fill="#000"/><rect x="0" y="3" width="1" height="1" fill="#000"/><rect x="1" y="3" width="5" height="1" fill="#fff"/><rect x="6" y="3" width="4" height="1" fill="#000"/><rect x="0" y="4" width="1" height="1" fill="#000"/><rect x="1" y="4" width="8" height="1" fill="#fff"/><rect x="9" y="4" width="1" height="1" fill="#000"/><rect x="0" y="5" width="1" height="1" fill="#000"/><rect x="1" y="5" width="8" height="1" fill="#fff"/><rect x="9" y="5" width="1" height="1" fill="#000"/><rect x="0" y="6" width="1" height="1" fill="#000"/><rect x="1" y="6" width="8" height="1" fill="#fff"/><rect x="9" y="6" width="1" height="1" fill="#000"/><rect x="0" y="7" width="1" height="1" fill="#000"/><rect x="1" y="7" width="8" height="1" fill="#fff"/><rect x="9" y="7" width="1" height="1" fill="#000"/><rect x="0" y="8" width="1" height="1" fill="#000"/><rect x="1" y="8" width="8" height="1" fill="#fff"/><rect x="9" y="8" width="1" height="1" fill="#000"/><rect x="0" y="9" width="1" height="1" fill="#000"/><rect x="1" y="9" width="8" height="1" fill="#fff"/><rect x="9" y="9" width="1" height="1" fill="#000"/><rect x="0" y="10" width="1" height="1" fill="#000"/><rect x="1" y="10" width="8" height="1" fill="#fff"/><rect x="9" y="10" width="1" height="1" fill="#000"/><rect x="0" y="11" width="10" height="1" fill="#000"/></svg>
<svg width="23" height="22" viewBox="0 0 23 22" style="left:196px;top:76px"><text x="6.5" y="9.5" font-family="'DejaVu Sans Condensed','Liberation Sans',sans-serif" font-weight="bold" font-size="5.5" fill="#F00000" textLength="4" lengthAdjust="spacingAndGlyphs">II</text></svg>
<svg width="8" height="9" viewBox="0 0 8 9" shape-rendering="crispEdges" style="left:207px;top:86px"><rect x="0" y="0" width="6" height="1" fill="#808080"/><rect x="0" y="1" width="1" height="1" fill="#808080"/><rect x="1" y="1" width="4" height="1" fill="#fff"/><rect x="5" y="1" width="1" height="1" fill="#808080"/><rect x="6" y="1" width="1" height="1" fill="#000"/><rect x="0" y="2" width="1" height="1" fill="#808080"/><rect x="1" y="2" width="4" height="1" fill="#fff"/><rect x="5" y="2" width="2" height="1" fill="#808080"/><rect x="7" y="2" width="1" height="1" fill="#000"/><rect x="0" y="3" width="1" height="1" fill="#808080"/><rect x="1" y="3" width="6" height="1" fill="#fff"/><rect x="7" y="3" width="1" height="1" fill="#000"/><rect x="0" y="4" width="1" height="1" fill="#808080"/><rect x="1" y="4" width="6" height="1" fill="#fff"/><rect x="7" y="4" width="1" height="1" fill="#000"/><rect x="0" y="5" width="1" height="1" fill="#808080"/><rect x="1" y="5" width="6" height="1" fill="#fff"/><rect x="7" y="5" width="1" height="1" fill="#000"/><rect x="0" y="6" width="1" height="1" fill="#808080"/><rect x="1" y="6" width="6" height="1" fill="#fff"/><rect x="7" y="6" width="1" height="1" fill="#000"/><rect x="0" y="7" width="1" height="1" fill="#808080"/><rect x="1" y="7" width="6" height="1" fill="#fff"/><rect x="7" y="7" width="1" height="1" fill="#000"/><rect x="0" y="8" width="8" height="1" fill="#000"/></svg>
<svg width="5" height="5" viewBox="0 0 5 5" shape-rendering="crispEdges" style="left:211px;top:81px"><rect x="0" y="0" width="3" height="1" fill="#0000A8"/><rect x="2" y="1" width="1" height="1" fill="#0000A8"/><rect x="2" y="2" width="1" height="1" fill="#0000A8"/><rect x="1" y="3" width="3" height="1" fill="#0000A8"/><rect x="2" y="4" width="1" height="1" fill="#0000A8"/></svg>
<div class="tb on" style="left:219px;top:76px"></div>
<svg width="10" height="12" viewBox="0 0 10 12" shape-rendering="crispEdges" style="left:225px;top:81px"><rect x="0" y="0" width="7" height="1" fill="#000"/><rect x="0" y="1" width="1" height="1" fill="#000"/><rect x="1" y="1" width="5" height="1" fill="#fff"/><rect x="6" y="1" width="2" height="1" fill="#000"/><rect x="0" y="2" width="1" height="1" fill="#000"/><rect x="1" y="2" width="5" height="1" fill="#fff"/><rect x="6" y="2" width="1" height="1" fill="#000"/><rect x="7" y="2" width="1" height="1" fill="#fff"/><rect x="8" y="2" width="1" height="1" fill="#000"/><rect x="0" y="3" width="1" height="1" fill="#000"/><rect x="1" y="3" width="5" height="1" fill="#fff"/><rect x="6" y="3" width="4" height="1" fill="#000"/><rect x="0" y="4" width="1" height="1" fill="#000"/><rect x="1" y="4" width="8" height="1" fill="#fff"/><rect x="9" y="4" width="1" height="1" fill="#000"/><rect x="0" y="5" width="1" height="1" fill="#000"/><rect x="1" y="5" width="8" height="1" fill="#fff"/><rect x="9" y="5" width="1" height="1" fill="#000"/><rect x="0" y="6" width="1" height="1" fill="#000"/><rect x="1" y="6" width="8" height="1" fill="#fff"/><rect x="9" y="6" width="1" height="1" fill="#000"/><rect x="0" y="7" width="1" height="1" fill="#000"/><rect x="1" y="7" width="8" height="1" fill="#fff"/><rect x="9" y="7" width="1" height="1" fill="#000"/><rect x="0" y="8" width="1" height="1" fill="#000"/><rect x="1" y="8" width="8" height="1" fill="#fff"/><rect x="9" y="8" width="1" height="1" fill="#000"/><rect x="0" y="9" width="1" height="1" fill="#000"/><rect x="1" y="9" width="8" height="1" fill="#fff"/><rect x="9" y="9" width="1" height="1" fill="#000"/><rect x="0" y="10" width="1" height="1" fill="#000"/><rect x="1" y="10" width="8" height="1" fill="#fff"/><rect x="9" y="10" width="1" height="1" fill="#000"/><rect x="0" y="11" width="10" height="1" fill="#000"/></svg>
<svg width="10" height="6" viewBox="0 0 10 6" shape-rendering="crispEdges" style="left:223px;top:81px"><rect x="0" y="0" width="10" height="1" fill="#F6F4EC"/><rect x="0" y="1" width="10" height="1" fill="#F6F4EC"/><rect x="0" y="2" width="10" height="1" fill="#F6F4EC"/><rect x="0" y="3" width="10" height="1" fill="#F6F4EC"/><rect x="0" y="4" width="10" height="1" fill="#F6F4EC"/><rect x="0" y="5" width="2" height="1" fill="#F6F4EC"/></svg>
<svg width="10" height="10" viewBox="0 0 10 10" shape-rendering="crispEdges" style="left:230px;top:87px"><rect x="4" y="0" width="2" height="1" fill="#000"/><rect x="1" y="1" width="2" height="1" fill="#000"/><rect x="4" y="1" width="2" height="1" fill="#C0C0C0"/><rect x="7" y="1" width="2" height="1" fill="#000"/><rect x="1" y="2" width="1" height="1" fill="#000"/><rect x="2" y="2" width="6" height="1" fill="#C0C0C0"/><rect x="8" y="2" width="1" height="1" fill="#000"/><rect x="2" y="3" width="2" height="1" fill="#C0C0C0"/><rect x="4" y="3" width="1" height="1" fill="#E0E0E0"/><rect x="5" y="3" width="3" height="1" fill="#C0C0C0"/><rect x="0" y="4" width="1" height="1" fill="#000"/><rect x="1" y="4" width="2" height="1" fill="#C0C0C0"/><rect x="3" y="4" width="1" height="1" fill="#E0E0E0"/><rect x="4" y="4" width="2" height="1" fill="#000"/><rect x="6" y="4" width="3" height="1" fill="#C0C0C0"/><rect x="9" y="4" width="1" height="1" fill="#000"/><rect x="0" y="5" width="1" height="1" fill="#000"/><rect x="1" y="5" width="3" height="1" fill="#C0C0C0"/><rect x="4" y="5" width="2" height="1" fill="#000"/><rect x="6" y="5" width="3" height="1" fill="#C0C0C0"/><rect x="9" y="5" width="1" height="1" fill="#000"/><rect x="2" y="6" width="6" height="1" fill="#C0C0C0"/><rect x="1" y="7" width="1" height="1" fill="#000"/><rect x="2" y="7" width="6" height="1" fill="#C0C0C0"/><rect x="8" y="7" width="1" height="1" fill="#000"/><rect x="1" y="8" width="2" height="1" fill="#000"/><rect x="4" y="8" width="2" height="1" fill="#C0C0C0"/><rect x="7" y="8" width="2" height="1" fill="#000"/><rect x="4" y="9" width="2" height="1" fill="#000"/></svg>
<svg width="23" height="22" viewBox="0 0 23 22" style="left:220px;top:77px"><text x="3.5" y="9" font-family="'DejaVu Sans Condensed','Liberation Sans',sans-serif" font-weight="bold" font-size="6.5" fill="#F00000" textLength="8.5" lengthAdjust="spacingAndGlyphs">ECL</text></svg>
<svg width="5" height="5" viewBox="0 0 5 5" shape-rendering="crispEdges" style="left:235px;top:82px"><rect x="0" y="0" width="3" height="1" fill="#0000A8"/><rect x="2" y="1" width="1" height="1" fill="#0000A8"/><rect x="2" y="2" width="1" height="1" fill="#0000A8"/><rect x="1" y="3" width="3" height="1" fill="#0000A8"/><rect x="2" y="4" width="1" height="1" fill="#0000A8"/></svg>
<div class="tb on" style="left:242px;top:76px"></div>
<svg width="10" height="12" viewBox="0 0 10 12" shape-rendering="crispEdges" style="left:248px;top:81px"><rect x="0" y="0" width="7" height="1" fill="#000"/><rect x="0" y="1" width="1" height="1" fill="#000"/><rect x="1" y="1" width="5" height="1" fill="#fff"/><rect x="6" y="1" width="2" height="1" fill="#000"/><rect x="0" y="2" width="1" height="1" fill="#000"/><rect x="1" y="2" width="5" height="1" fill="#fff"/><rect x="6" y="2" width="1" height="1" fill="#000"/><rect x="7" y="2" width="1" height="1" fill="#fff"/><rect x="8" y="2" width="1" height="1" fill="#000"/><rect x="0" y="3" width="1" height="1" fill="#000"/><rect x="1" y="3" width="5" height="1" fill="#fff"/><rect x="6" y="3" width="4" height="1" fill="#000"/><rect x="0" y="4" width="1" height="1" fill="#000"/><rect x="1" y="4" width="8" height="1" fill="#fff"/><rect x="9" y="4" width="1" height="1" fill="#000"/><rect x="0" y="5" width="1" height="1" fill="#000"/><rect x="1" y="5" width="8" height="1" fill="#fff"/><rect x="9" y="5" width="1" height="1" fill="#000"/><rect x="0" y="6" width="1" height="1" fill="#000"/><rect x="1" y="6" width="8" height="1" fill="#fff"/><rect x="9" y="6" width="1" height="1" fill="#000"/><rect x="0" y="7" width="1" height="1" fill="#000"/><rect x="1" y="7" width="8" height="1" fill="#fff"/><rect x="9" y="7" width="1" height="1" fill="#000"/><rect x="0" y="8" width="1" height="1" fill="#000"/><rect x="1" y="8" width="8" height="1" fill="#fff"/><rect x="9" y="8" width="1" height="1" fill="#000"/><rect x="0" y="9" width="1" height="1" fill="#000"/><rect x="1" y="9" width="8" height="1" fill="#fff"/><rect x="9" y="9" width="1" height="1" fill="#000"/><rect x="0" y="10" width="1" height="1" fill="#000"/><rect x="1" y="10" width="8" height="1" fill="#fff"/><rect x="9" y="10" width="1" height="1" fill="#000"/><rect x="0" y="11" width="10" height="1" fill="#000"/></svg>
<svg width="8" height="9" viewBox="0 0 8 9" shape-rendering="crispEdges" style="left:254px;top:87px"><rect x="0" y="0" width="6" height="1" fill="#808080"/><rect x="0" y="1" width="1" height="1" fill="#808080"/><rect x="1" y="1" width="4" height="1" fill="#fff"/><rect x="5" y="1" width="1" height="1" fill="#808080"/><rect x="6" y="1" width="1" height="1" fill="#000"/><rect x="0" y="2" width="1" height="1" fill="#808080"/><rect x="1" y="2" width="4" height="1" fill="#fff"/><rect x="5" y="2" width="2" height="1" fill="#808080"/><rect x="7" y="2" width="1" height="1" fill="#000"/><rect x="0" y="3" width="1" height="1" fill="#808080"/><rect x="1" y="3" width="6" height="1" fill="#fff"/><rect x="7" y="3" width="1" height="1" fill="#000"/><rect x="0" y="4" width="1" height="1" fill="#808080"/><rect x="1" y="4" width="6" height="1" fill="#fff"/><rect x="7" y="4" width="1" height="1" fill="#000"/><rect x="0" y="5" width="1" height="1" fill="#808080"/><rect x="1" y="5" width="6" height="1" fill="#fff"/><rect x="7" y="5" width="1" height="1" fill="#000"/><rect x="0" y="6" width="1" height="1" fill="#808080"/><rect x="1" y="6" width="6" height="1" fill="#fff"/><rect x="7" y="6" width="1" height="1" fill="#000"/><rect x="0" y="7" width="1" height="1" fill="#808080"/><rect x="1" y="7" width="6" height="1" fill="#fff"/><rect x="7" y="7" width="1" height="1" fill="#000"/><rect x="0" y="8" width="8" height="1" fill="#000"/></svg>
<svg width="5" height="5" viewBox="0 0 5 5" shape-rendering="crispEdges" style="left:258px;top:82px"><rect x="0" y="0" width="3" height="1" fill="#0000A8"/><rect x="2" y="1" width="1" height="1" fill="#0000A8"/><rect x="2" y="2" width="1" height="1" fill="#0000A8"/><rect x="1" y="3" width="3" height="1" fill="#0000A8"/><rect x="2" y="4" width="1" height="1" fill="#0000A8"/></svg>
<div class="tb on" style="left:265px;top:76px"></div>
<svg width="10" height="12" viewBox="0 0 10 12" shape-rendering="crispEdges" style="left:271px;top:81px"><rect x="0" y="0" width="7" height="1" fill="#000"/><rect x="0" y="1" width="1" height="1" fill="#000"/><rect x="1" y="1" width="5" height="1" fill="#fff"/><rect x="6" y="1" width="2" height="1" fill="#000"/><rect x="0" y="2" width="1" height="1" fill="#000"/><rect x="1" y="2" width="5" height="1" fill="#fff"/><rect x="6" y="2" width="1" height="1" fill="#000"/><rect x="7" y="2" width="1" height="1" fill="#fff"/><rect x="8" y="2" width="1" height="1" fill="#000"/><rect x="0" y="3" width="1" height="1" fill="#000"/><rect x="1" y="3" width="5" height="1" fill="#fff"/><rect x="6" y="3" width="4" height="1" fill="#000"/><rect x="0" y="4" width="1" height="1" fill="#000"/><rect x="1" y="4" width="8" height="1" fill="#fff"/><rect x="9" y="4" width="1" height="1" fill="#000"/><rect x="0" y="5" width="1" height="1" fill="#000"/><rect x="1" y="5" width="8" height="1" fill="#fff"/><rect x="9" y="5" width="1" height="1" fill="#000"/><rect x="0" y="6" width="1" height="1" fill="#000"/><rect x="1" y="6" width="8" height="1" fill="#fff"/><rect x="9" y="6" width="1" height="1" fill="#000"/><rect x="0" y="7" width="1" height="1" fill="#000"/><rect x="1" y="7" width="8" height="1" fill="#fff"/><rect x="9" y="7" width="1" height="1" fill="#000"/><rect x="0" y="8" width="1" height="1" fill="#000"/><rect x="1" y="8" width="8" height="1" fill="#fff"/><rect x="9" y="8" width="1" height="1" fill="#000"/><rect x="0" y="9" width="1" height="1" fill="#000"/><rect x="1" y="9" width="8" height="1" fill="#fff"/><rect x="9" y="9" width="1" height="1" fill="#000"/><rect x="0" y="10" width="1" height="1" fill="#000"/><rect x="1" y="10" width="8" height="1" fill="#fff"/><rect x="9" y="10" width="1" height="1" fill="#000"/><rect x="0" y="11" width="10" height="1" fill="#000"/></svg>
<svg width="10" height="10" viewBox="0 0 10 10" shape-rendering="crispEdges" style="left:275px;top:85px"><rect x="4" y="0" width="2" height="1" fill="#000"/><rect x="1" y="1" width="2" height="1" fill="#000"/><rect x="4" y="1" width="2" height="1" fill="#C0C0C0"/><rect x="7" y="1" width="2" height="1" fill="#000"/><rect x="1" y="2" width="1" height="1" fill="#000"/><rect x="2" y="2" width="6" height="1" fill="#C0C0C0"/><rect x="8" y="2" width="1" height="1" fill="#000"/><rect x="2" y="3" width="2" height="1" fill="#C0C0C0"/><rect x="4" y="3" width="1" height="1" fill="#E0E0E0"/><rect x="5" y="3" width="3" height="1" fill="#C0C0C0"/><rect x="0" y="4" width="1" height="1" fill="#000"/><rect x="1" y="4" width="2" height="1" fill="#C0C0C0"/><rect x="3" y="4" width="1" height="1" fill="#E0E0E0"/><rect x="4" y="4" width="2" height="1" fill="#000"/><rect x="6" y="4" width="3" height="1" fill="#C0C0C0"/><rect x="9" y="4" width="1" height="1" fill="#000"/><rect x="0" y="5" width="1" height="1" fill="#000"/><rect x="1" y="5" width="3" height="1" fill="#C0C0C0"/><rect x="4" y="5" width="2" height="1" fill="#000"/><rect x="6" y="5" width="3" height="1" fill="#C0C0C0"/><rect x="9" y="5" width="1" height="1" fill="#000"/><rect x="2" y="6" width="6" height="1" fill="#C0C0C0"/><rect x="1" y="7" width="1" height="1" fill="#000"/><rect x="2" y="7" width="6" height="1" fill="#C0C0C0"/><rect x="8" y="7" width="1" height="1" fill="#000"/><rect x="1" y="8" width="2" height="1" fill="#000"/><rect x="4" y="8" width="2" height="1" fill="#C0C0C0"/><rect x="7" y="8" width="2" height="1" fill="#000"/><rect x="4" y="9" width="2" height="1" fill="#000"/></svg>
<svg width="14" height="9" viewBox="0 0 14 9" shape-rendering="crispEdges" style="left:291px;top:80px"><rect x="3" y="0" width="11" height="1" fill="#000"/><rect x="2" y="1" width="1" height="1" fill="#000"/><rect x="3" y="1" width="10" height="1" fill="#FFFFA0"/><rect x="13" y="1" width="1" height="1" fill="#000"/><rect x="1" y="2" width="1" height="1" fill="#000"/><rect x="2" y="2" width="2" height="1" fill="#FFFFA0"/><rect x="4" y="2" width="1" height="1" fill="#808080"/><rect x="5" y="2" width="1" height="1" fill="#FFFFA0"/><rect x="6" y="2" width="1" height="1" fill="#808080"/><rect x="7" y="2" width="1" height="1" fill="#FFFFA0"/><rect x="8" y="2" width="1" height="1" fill="#808080"/><rect x="9" y="2" width="1" height="1" fill="#FFFFA0"/><rect x="10" y="2" width="1" height="1" fill="#808080"/><rect x="11" y="2" width="2" height="1" fill="#FFFFA0"/><rect x="13" y="2" width="1" height="1" fill="#000"/><rect x="0" y="3" width="1" height="1" fill="#000"/><rect x="1" y="3" width="12" height="1" fill="#FFFFA0"/><rect x="13" y="3" width="1" height="1" fill="#000"/><rect x="0" y="4" width="1" height="1" fill="#000"/><rect x="1" y="4" width="2" height="1" fill="#FFFFA0"/><rect x="3" y="4" width="1" height="1" fill="#808080"/><rect x="4" y="4" width="1" height="1" fill="#FFFFA0"/><rect x="5" y="4" width="1" height="1" fill="#808080"/><rect x="6" y="4" width="1" height="1" fill="#FFFFA0"/><rect x="7" y="4" width="1" height="1" fill="#808080"/><rect x="8" y="4" width="1" height="1" fill="#FFFFA0"/><rect x="9" y="4" width="1" height="1" fill="#808080"/><rect x="10" y="4" width="1" height="1" fill="#FFFFA0"/><rect x="11" y="4" width="1" height="1" fill="#808080"/><rect x="12" y="4" width="1" height="1" fill="#FFFFA0"/><rect x="13" y="4" width="1" height="1" fill="#000"/><rect x="0" y="5" width="1" height="1" fill="#000"/><rect x="1" y="5" width="12" height="1" fill="#FFFFA0"/><rect x="13" y="5" width="1" height="1" fill="#000"/><rect x="0" y="6" width="1" height="1" fill="#000"/><rect x="1" y="6" width="1" height="1" fill="#FFFFA0"/><rect x="2" y="6" width="1" height="1" fill="#808080"/><rect x="3" y="6" width="1" height="1" fill="#FFFFA0"/><rect x="4" y="6" width="1" height="1" fill="#808080"/><rect x="5" y="6" width="1" height="1" fill="#FFFFA0"/><rect x="6" y="6" width="1" height="1" fill="#808080"/><rect x="7" y="6" width="1" height="1" fill="#FFFFA0"/><rect x="8" y="6" width="1" height="1" fill="#808080"/><rect x="9" y="6" width="1" height="1" fill="#FFFFA0"/><rect x="10" y="6" width="1" height="1" fill="#808080"/><rect x="11" y="6" width="2" height="1" fill="#FFFFA0"/><rect x="13" y="6" width="1" height="1" fill="#000"/><rect x="0" y="7" width="1" height="1" fill="#000"/><rect x="1" y="7" width="12" height="1" fill="#FFFFA0"/><rect x="13" y="7" width="1" height="1" fill="#000"/><rect x="0" y="8" width="14" height="1" fill="#000"/></svg>
<svg width="10" height="10" viewBox="0 0 10 10" shape-rendering="crispEdges" style="left:298px;top:85px"><rect x="4" y="0" width="2" height="1" fill="#000"/><rect x="1" y="1" width="2" height="1" fill="#000"/><rect x="4" y="1" width="2" height="1" fill="#C0C0C0"/><rect x="7" y="1" width="2" height="1" fill="#000"/><rect x="1" y="2" width="1" height="1" fill="#000"/><rect x="2" y="2" width="6" height="1" fill="#C0C0C0"/><rect x="8" y="2" width="1" height="1" fill="#000"/><rect x="2" y="3" width="2" height="1" fill="#C0C0C0"/><rect x="4" y="3" width="1" height="1" fill="#E0E0E0"/><rect x="5" y="3" width="3" height="1" fill="#C0C0C0"/><rect x="0" y="4" width="1" height="1" fill="#000"/><rect x="1" y="4" width="2" height="1" fill="#C0C0C0"/><rect x="3" y="4" width="1" height="1" fill="#E0E0E0"/><rect x="4" y="4" width="2" height="1" fill="#000"/><rect x="6" y="4" width="3" height="1" fill="#C0C0C0"/><rect x="9" y="4" width="1" height="1" fill="#000"/><rect x="0" y="5" width="1" height="1" fill="#000"/><rect x="1" y="5" width="3" height="1" fill="#C0C0C0"/><rect x="4" y="5" width="2" height="1" fill="#000"/><rect x="6" y="5" width="3" height="1" fill="#C0C0C0"/><rect x="9" y="5" width="1" height="1" fill="#000"/><rect x="2" y="6" width="6" height="1" fill="#C0C0C0"/><rect x="1" y="7" width="1" height="1" fill="#000"/><rect x="2" y="7" width="6" height="1" fill="#C0C0C0"/><rect x="8" y="7" width="1" height="1" fill="#000"/><rect x="1" y="8" width="2" height="1" fill="#000"/><rect x="4" y="8" width="2" height="1" fill="#C0C0C0"/><rect x="7" y="8" width="2" height="1" fill="#000"/><rect x="4" y="9" width="2" height="1" fill="#000"/></svg>
<div class="tb on" style="left:311px;top:76px"></div>
<svg width="10" height="12" viewBox="0 0 10 12" shape-rendering="crispEdges" style="left:317px;top:81px"><rect x="0" y="0" width="7" height="1" fill="#000"/><rect x="0" y="1" width="1" height="1" fill="#000"/><rect x="1" y="1" width="5" height="1" fill="#fff"/><rect x="6" y="1" width="2" height="1" fill="#000"/><rect x="0" y="2" width="1" height="1" fill="#000"/><rect x="1" y="2" width="5" height="1" fill="#fff"/><rect x="6" y="2" width="1" height="1" fill="#000"/><rect x="7" y="2" width="1" height="1" fill="#fff"/><rect x="8" y="2" width="1" height="1" fill="#000"/><rect x="0" y="3" width="1" height="1" fill="#000"/><rect x="1" y="3" width="5" height="1" fill="#fff"/><rect x="6" y="3" width="4" height="1" fill="#000"/><rect x="0" y="4" width="1" height="1" fill="#000"/><rect x="1" y="4" width="8" height="1" fill="#fff"/><rect x="9" y="4" width="1" height="1" fill="#000"/><rect x="0" y="5" width="1" height="1" fill="#000"/><rect x="1" y="5" width="8" height="1" fill="#fff"/><rect x="9" y="5" width="1" height="1" fill="#000"/><rect x="0" y="6" width="1" height="1" fill="#000"/><rect x="1" y="6" width="8" height="1" fill="#fff"/><rect x="9" y="6" width="1" height="1" fill="#000"/><rect x="0" y="7" width="1" height="1" fill="#000"/><rect x="1" y="7" width="8" height="1" fill="#fff"/><rect x="9" y="7" width="1" height="1" fill="#000"/><rect x="0" y="8" width="1" height="1" fill="#000"/><rect x="1" y="8" width="8" height="1" fill="#fff"/><rect x="9" y="8" width="1" height="1" fill="#000"/><rect x="0" y="9" width="1" height="1" fill="#000"/><rect x="1" y="9" width="8" height="1" fill="#fff"/><rect x="9" y="9" width="1" height="1" fill="#000"/><rect x="0" y="10" width="1" height="1" fill="#000"/><rect x="1" y="10" width="8" height="1" fill="#fff"/><rect x="9" y="10" width="1" height="1" fill="#000"/><rect x="0" y="11" width="10" height="1" fill="#000"/></svg>
<svg width="23" height="22" viewBox="0 0 23 22" style="left:312px;top:77px"><text x="5.8" y="10" font-family="'DejaVu Sans Condensed','Liberation Sans',sans-serif" font-weight="bold" font-size="7" fill="#0000F0" textLength="5.4" lengthAdjust="spacingAndGlyphs">M</text></svg>
<svg width="10" height="8" viewBox="0 0 10 8" shape-rendering="crispEdges" style="left:321px;top:88px"><rect x="0" y="0" width="10" height="1" fill="#000080"/><rect x="0" y="1" width="10" height="1" fill="#000080"/><rect x="0" y="2" width="1" height="1" fill="#000"/><rect x="1" y="2" width="8" height="1" fill="#C0C0C0"/><rect x="9" y="2" width="1" height="1" fill="#000"/><rect x="0" y="3" width="1" height="1" fill="#000"/><rect x="1" y="3" width="1" height="1" fill="#E0E0E0"/><rect x="2" y="3" width="1" height="1" fill="#C0C0C0"/><rect x="3" y="3" width="1" height="1" fill="#E0E0E0"/><rect x="4" y="3" width="6" height="1" fill="#000"/><rect x="0" y="4" width="1" height="1" fill="#000"/><rect x="1" y="4" width="1" height="1" fill="#C0C0C0"/><rect x="2" y="4" width="1" height="1" fill="#E0E0E0"/><rect x="3" y="4" width="1" height="1" fill="#C0C0C0"/><rect x="4" y="4" width="1" height="1" fill="#000"/><rect x="5" y="4" width="3" height="1" fill="#fff"/><rect x="8" y="4" width="2" height="1" fill="#000"/><rect x="0" y="5" width="1" height="1" fill="#000"/><rect x="1" y="5" width="1" height="1" fill="#E0E0E0"/><rect x="2" y="5" width="1" height="1" fill="#C0C0C0"/><rect x="3" y="5" width="1" height="1" fill="#E0E0E0"/><rect x="4" y="5" width="6" height="1" fill="#000"/><rect x="0" y="6" width="1" height="1" fill="#000"/><rect x="1" y="6" width="8" height="1" fill="#C0C0C0"/><rect x="9" y="6" width="1" height="1" fill="#000"/><rect x="0" y="7" width="10" height="1" fill="#000"/></svg>
<svg width="5" height="5" viewBox="0 0 5 5" shape-rendering="crispEdges" style="left:327px;top:82px"><rect x="0" y="0" width="3" height="1" fill="#0000A8"/><rect x="2" y="1" width="1" height="1" fill="#0000A8"/><rect x="2" y="2" width="1" height="1" fill="#0000A8"/><rect x="1" y="3" width="3" height="1" fill="#0000A8"/><rect x="2" y="4" width="1" height="1" fill="#0000A8"/></svg>
<div class="tb on" style="left:334px;top:76px"></div>
<svg width="10" height="12" viewBox="0 0 10 12" shape-rendering="crispEdges" style="left:340px;top:81px"><rect x="0" y="0" width="7" height="1" fill="#000"/><rect x="0" y="1" width="1" height="1" fill="#000"/><rect x="1" y="1" width="5" height="1" fill="#fff"/><rect x="6" y="1" width="2" height="1" fill="#000"/><rect x="0" y="2" width="1" height="1" fill="#000"/><rect x="1" y="2" width="5" height="1" fill="#fff"/><rect x="6" y="2" width="1" height="1" fill="#000"/><rect x="7" y="2" width="1" height="1" fill="#fff"/><rect x="8" y="2" width="1" height="1" fill="#000"/><rect x="0" y="3" width="1" height="1" fill="#000"/><rect x="1" y="3" width="5" height="1" fill="#fff"/><rect x="6" y="3" width="4" height="1" fill="#000"/><rect x="0" y="4" width="1" height="1" fill="#000"/><rect x="1" y="4" width="8" height="1" fill="#fff"/><rect x="9" y="4" width="1" height="1" fill="#000"/><rect x="0" y="5" width="1" height="1" fill="#000"/><rect x="1" y="5" width="8" height="1" fill="#fff"/><rect x="9" y="5" width="1" height="1" fill="#000"/><rect x="0" y="6" width="1" height="1" fill="#000"/><rect x="1" y="6" width="8" height="1" fill="#fff"/><rect x="9" y="6" width="1" height="1" fill="#000"/><rect x="0" y="7" width="1" height="1" fill="#000"/><rect x="1" y="7" width="8" height="1" fill="#fff"/><rect x="9" y="7" width="1" height="1" fill="#000"/><rect x="0" y="8" width="1" height="1" fill="#000"/><rect x="1" y="8" width="8" height="1" fill="#fff"/><rect x="9" y="8" width="1" height="1" fill="#000"/><rect x="0" y="9" width="1" height="1" fill="#000"/><rect x="1" y="9" width="8" height="1" fill="#fff"/><rect x="9" y="9" width="1" height="1" fill="#000"/><rect x="0" y="10" width="1" height="1" fill="#000"/><rect x="1" y="10" width="8" height="1" fill="#fff"/><rect x="9" y="10" width="1" height="1" fill="#000"/><rect x="0" y="11" width="10" height="1" fill="#000"/></svg>
<svg width="23" height="22" viewBox="0 0 23 22" style="left:335px;top:77px"><text x="6" y="10" font-family="'DejaVu Sans Condensed','Liberation Sans',sans-serif" font-weight="bold" font-size="7" fill="#0000F0">N</text></svg>
<svg width="4" height="4" viewBox="0 0 4 4" shape-rendering="crispEdges" style="left:342px;top:88px"><rect x="1" y="0" width="2" height="1" fill="#00E000"/><rect x="0" y="1" width="4" height="1" fill="#00E000"/><rect x="0" y="2" width="4" height="1" fill="#00E000"/><rect x="1" y="3" width="2" height="1" fill="#00E000"/></svg>
<svg width="8" height="9" viewBox="0 0 8 9" shape-rendering="crispEdges" style="left:346px;top:87px"><rect x="0" y="0" width="6" height="1" fill="#808080"/><rect x="0" y="1" width="1" height="1" fill="#808080"/><rect x="1" y="1" width="4" height="1" fill="#fff"/><rect x="5" y="1" width="1" height="1" fill="#808080"/><rect x="6" y="1" width="1" height="1" fill="#000"/><rect x="0" y="2" width="1" height="1" fill="#808080"/><rect x="1" y="2" width="4" height="1" fill="#fff"/><rect x="5" y="2" width="2" height="1" fill="#808080"/><rect x="7" y="2" width="1" height="1" fill="#000"/><rect x="0" y="3" width="1" height="1" fill="#808080"/><rect x="1" y="3" width="6" height="1" fill="#fff"/><rect x="7" y="3" width="1" height="1" fill="#000"/><rect x="0" y="4" width="1" height="1" fill="#808080"/><rect x="1" y="4" width="6" height="1" fill="#fff"/><rect x="7" y="4" width="1" height="1" fill="#000"/><rect x="0" y="5" width="1" height="1" fill="#808080"/><rect x="1" y="5" width="6" height="1" fill="#fff"/><rect x="7" y="5" width="1" height="1" fill="#000"/><rect x="0" y="6" width="1" height="1" fill="#808080"/><rect x="1" y="6" width="6" height="1" fill="#fff"/><rect x="7" y="6" width="1" height="1" fill="#000"/><rect x="0" y="7" width="1" height="1" fill="#808080"/><rect x="1" y="7" width="6" height="1" fill="#fff"/><rect x="7" y="7" width="1" height="1" fill="#000"/><rect x="0" y="8" width="8" height="1" fill="#000"/></svg>
<svg width="5" height="5" viewBox="0 0 5 5" shape-rendering="crispEdges" style="left:350px;top:82px"><rect x="0" y="0" width="3" height="1" fill="#0000A8"/><rect x="2" y="1" width="1" height="1" fill="#0000A8"/><rect x="2" y="2" width="1" height="1" fill="#0000A8"/><rect x="1" y="3" width="3" height="1" fill="#0000A8"/><rect x="2" y="4" width="1" height="1" fill="#0000A8"/></svg>
<div class="tb on" style="left:357px;top:76px"></div>
<svg width="10" height="12" viewBox="0 0 10 12" shape-rendering="crispEdges" style="left:363px;top:81px"><rect x="0" y="0" width="7" height="1" fill="#000"/><rect x="0" y="1" width="1" height="1" fill="#000"/><rect x="1" y="1" width="5" height="1" fill="#fff"/><rect x="6" y="1" width="2" height="1" fill="#000"/><rect x="0" y="2" width="1" height="1" fill="#000"/><rect x="1" y="2" width="5" height="1" fill="#fff"/><rect x="6" y="2" width="1" height="1" fill="#000"/><rect x="7" y="2" width="1" height="1" fill="#fff"/><rect x="8" y="2" width="1" height="1" fill="#000"/><rect x="0" y="3" width="1" height="1" fill="#000"/><rect x="1" y="3" width="5" height="1" fill="#fff"/><rect x="6" y="3" width="4" height="1" fill="#000"/><rect x="0" y="4" width="1" height="1" fill="#000"/><rect x="1" y="4" width="8" height="1" fill="#fff"/><rect x="9" y="4" width="1" height="1" fill="#000"/><rect x="0" y="5" width="1" height="1" fill="#000"/><rect x="1" y="5" width="8" height="1" fill="#fff"/><rect x="9" y="5" width="1" height="1" fill="#000"/><rect x="0" y="6" width="1" height="1" fill="#000"/><rect x="1" y="6" width="8" height="1" fill="#fff"/><rect x="9" y="6" width="1" height="1" fill="#000"/><rect x="0" y="7" width="1" height="1" fill="#000"/><rect x="1" y="7" width="8" height="1" fill="#fff"/><rect x="9" y="7" width="1" height="1" fill="#000"/><rect x="0" y="8" width="1" height="1" fill="#000"/><rect x="1" y="8" width="8" height="1" fill="#fff"/><rect x="9" y="8" width="1" height="1" fill="#000"/><rect x="0" y="9" width="1" height="1" fill="#000"/><rect x="1" y="9" width="8" height="1" fill="#fff"/><rect x="9" y="9" width="1" height="1" fill="#000"/><rect x="0" y="10" width="1" height="1" fill="#000"/><rect x="1" y="10" width="8" height="1" fill="#fff"/><rect x="9" y="10" width="1" height="1" fill="#000"/><rect x="0" y="11" width="10" height="1" fill="#000"/></svg>
<svg width="23" height="22" viewBox="0 0 23 22" style="left:358px;top:77px"><text x="6" y="10" font-family="'DejaVu Sans Condensed','Liberation Sans',sans-serif" font-weight="bold" font-size="7" fill="#0000F0">N</text></svg>
<svg width="10" height="8" viewBox="0 0 10 8" shape-rendering="crispEdges" style="left:367px;top:88px"><rect x="0" y="0" width="10" height="1" fill="#0000FF"/><rect x="0" y="1" width="10" height="1" fill="#0000FF"/><rect x="0" y="2" width="1" height="1" fill="#000"/><rect x="1" y="2" width="8" height="1" fill="#fff"/><rect x="9" y="2" width="1" height="1" fill="#000"/><rect x="0" y="3" width="1" height="1" fill="#000"/><rect x="1" y="3" width="1" height="1" fill="#fff"/><rect x="2" y="3" width="1" height="1" fill="#000"/><rect x="3" y="3" width="1" height="1" fill="#fff"/><rect x="4" y="3" width="1" height="1" fill="#000"/><rect x="5" y="3" width="1" height="1" fill="#fff"/><rect x="6" y="3" width="1" height="1" fill="#000"/><rect x="7" y="3" width="1" height="1" fill="#fff"/><rect x="8" y="3" width="2" height="1" fill="#000"/><rect x="0" y="4" width="1" height="1" fill="#000"/><rect x="1" y="4" width="8" height="1" fill="#fff"/><rect x="9" y="4" width="1" height="1" fill="#000"/><rect x="0" y="5" width="1" height="1" fill="#000"/><rect x="1" y="5" width="1" height="1" fill="#fff"/><rect x="2" y="5" width="1" height="1" fill="#000"/><rect x="3" y="5" width="1" height="1" fill="#fff"/><rect x="4" y="5" width="1" height="1" fill="#000"/><rect x="5" y="5" width="1" height="1" fill="#fff"/><rect x="6" y="5" width="1" height="1" fill="#000"/><rect x="7" y="5" width="1" height="1" fill="#fff"/><rect x="8" y="5" width="2" height="1" fill="#000"/><rect x="0" y="6" width="1" height="1" fill="#000"/><rect x="1" y="6" width="8" height="1" fill="#fff"/><rect x="9" y="6" width="1" height="1" fill="#000"/><rect x="0" y="7" width="10" height="1" fill="#000"/></svg>
<div class="tb on" style="left:380px;top:76px"></div>
<svg width="10" height="12" viewBox="0 0 10 12" shape-rendering="crispEdges" style="left:386px;top:81px"><rect x="0" y="0" width="7" height="1" fill="#000"/><rect x="0" y="1" width="1" height="1" fill="#000"/><rect x="1" y="1" width="5" height="1" fill="#fff"/><rect x="6" y="1" width="2" height="1" fill="#000"/><rect x="0" y="2" width="1" height="1" fill="#000"/><rect x="1" y="2" width="5" height="1" fill="#fff"/><rect x="6" y="2" width="1" height="1" fill="#000"/><rect x="7" y="2" width="1" height="1" fill="#fff"/><rect x="8" y="2" width="1" height="1" fill="#000"/><rect x="0" y="3" width="1" height="1" fill="#000"/><rect x="1" y="3" width="5" height="1" fill="#fff"/><rect x="6" y="3" width="4" height="1" fill="#000"/><rect x="0" y="4" width="1" height="1" fill="#000"/><rect x="1" y="4" width="8" height="1" fill="#fff"/><rect x="9" y="4" width="1" height="1" fill="#000"/><rect x="0" y="5" width="1" height="1" fill="#000"/><rect x="1" y="5" width="8" height="1" fill="#fff"/><rect x="9" y="5" width="1" height="1" fill="#000"/><rect x="0" y="6" width="1" height="1" fill="#000"/><rect x="1" y="6" width="8" height="1" fill="#fff"/><rect x="9" y="6" width="1" height="1" fill="#000"/><rect x="0" y="7" width="1" height="1" fill="#000"/><rect x="1" y="7" width="8" height="1" fill="#fff"/><rect x="9" y="7" width="1" height="1" fill="#000"/><rect x="0" y="8" width="1" height="1" fill="#000"/><rect x="1" y="8" width="8" height="1" fill="#fff"/><rect x="9" y="8" width="1" height="1" fill="#000"/><rect x="0" y="9" width="1" height="1" fill="#000"/><rect x="1" y="9" width="8" height="1" fill="#fff"/><rect x="9" y="9" width="1" height="1" fill="#000"/><rect x="0" y="10" width="1" height="1" fill="#000"/><rect x="1" y="10" width="8" height="1" fill="#fff"/><rect x="9" y="10" width="1" height="1" fill="#000"/><rect x="0" y="11" width="10" height="1" fill="#000"/></svg>
<svg width="23" height="22" viewBox="0 0 23 22" style="left:381px;top:77px"><text x="6" y="10" font-family="'DejaVu Sans Condensed','Liberation Sans',sans-serif" font-weight="bold" font-size="7" fill="#0000F0">N</text></svg>
<svg width="8" height="9" viewBox="0 0 8 9" shape-rendering="crispEdges" style="left:392px;top:87px"><rect x="0" y="0" width="6" height="1" fill="#808080"/><rect x="0" y="1" width="1" height="1" fill="#808080"/><rect x="1" y="1" width="4" height="1" fill="#fff"/><rect x="5" y="1" width="1" height="1" fill="#808080"/><rect x="6" y="1" width="1" height="1" fill="#000"/><rect x="0" y="2" width="1" height="1" fill="#808080"/><rect x="1" y="2" width="4" height="1" fill="#fff"/><rect x="5" y="2" width="2" height="1" fill="#808080"/><rect x="7" y="2" width="1" height="1" fill="#000"/><rect x="0" y="3" width="1" height="1" fill="#808080"/><rect x="1" y="3" width="6" height="1" fill="#fff"/><rect x="7" y="3" width="1" height="1" fill="#000"/><rect x="0" y="4" width="1" height="1" fill="#808080"/><rect x="1" y="4" width="6" height="1" fill="#fff"/><rect x="7" y="4" width="1" height="1" fill="#000"/><rect x="0" y="5" width="1" height="1" fill="#808080"/><rect x="1" y="5" width="6" height="1" fill="#fff"/><rect x="7" y="5" width="1" height="1" fill="#000"/><rect x="0" y="6" width="1" height="1" fill="#808080"/><rect x="1" y="6" width="6" height="1" fill="#fff"/><rect x="7" y="6" width="1" height="1" fill="#000"/><rect x="0" y="7" width="1" height="1" fill="#808080"/><rect x="1" y="7" width="6" height="1" fill="#fff"/><rect x="7" y="7" width="1" height="1" fill="#000"/><rect x="0" y="8" width="8" height="1" fill="#000"/></svg>
<svg width="5" height="5" viewBox="0 0 5 5" shape-rendering="crispEdges" style="left:396px;top:82px"><rect x="0" y="0" width="3" height="1" fill="#0000A8"/><rect x="2" y="1" width="1" height="1" fill="#0000A8"/><rect x="2" y="2" width="1" height="1" fill="#0000A8"/><rect x="1" y="3" width="3" height="1" fill="#0000A8"/><rect x="2" y="4" width="1" height="1" fill="#0000A8"/></svg>
<div class="tb on" style="left:403px;top:76px"></div>
<svg width="10" height="12" viewBox="0 0 10 12" shape-rendering="crispEdges" style="left:409px;top:81px"><rect x="0" y="0" width="7" height="1" fill="#000"/><rect x="0" y="1" width="1" height="1" fill="#000"/><rect x="1" y="1" width="5" height="1" fill="#fff"/><rect x="6" y="1" width="2" height="1" fill="#000"/><rect x="0" y="2" width="1" height="1" fill="#000"/><rect x="1" y="2" width="5" height="1" fill="#fff"/><rect x="6" y="2" width="1" height="1" fill="#000"/><rect x="7" y="2" width="1" height="1" fill="#fff"/><rect x="8" y="2" width="1" height="1" fill="#000"/><rect x="0" y="3" width="1" height="1" fill="#000"/><rect x="1" y="3" width="5" height="1" fill="#fff"/><rect x="6" y="3" width="4" height="1" fill="#000"/><rect x="0" y="4" width="1" height="1" fill="#000"/><rect x="1" y="4" width="8" height="1" fill="#fff"/><rect x="9" y="4" width="1" height="1" fill="#000"/><rect x="0" y="5" width="1" height="1" fill="#000"/><rect x="1" y="5" width="8" height="1" fill="#fff"/><rect x="9" y="5" width="1" height="1" fill="#000"/><rect x="0" y="6" width="1" height="1" fill="#000"/><rect x="1" y="6" width="8" height="1" fill="#fff"/><rect x="9" y="6" width="1" height="1" fill="#000"/><rect x="0" y="7" width="1" height="1" fill="#000"/><rect x="1" y="7" width="8" height="1" fill="#fff"/><rect x="9" y="7" width="1" height="1" fill="#000"/><rect x="0" y="8" width="1" height="1" fill="#000"/><rect x="1" y="8" width="8" height="1" fill="#fff"/><rect x="9" y="8" width="1" height="1" fill="#000"/><rect x="0" y="9" width="1" height="1" fill="#000"/><rect x="1" y="9" width="8" height="1" fill="#fff"/><rect x="9" y="9" width="1" height="1" fill="#000"/><rect x="0" y="10" width="1" height="1" fill="#000"/><rect x="1" y="10" width="8" height="1" fill="#fff"/><rect x="9" y="10" width="1" height="1" fill="#000"/><rect x="0" y="11" width="10" height="1" fill="#000"/></svg>
<svg width="23" height="22" viewBox="0 0 23 22" style="left:404px;top:77px"><text x="6.2" y="10" font-family="'Liberation Mono',monospace" font-weight="bold" font-size="7.5" fill="#0000F0">I</text></svg>
<svg width="8" height="9" viewBox="0 0 8 9" shape-rendering="crispEdges" style="left:415px;top:87px"><rect x="0" y="0" width="6" height="1" fill="#808080"/><rect x="0" y="1" width="1" height="1" fill="#808080"/><rect x="1" y="1" width="4" height="1" fill="#fff"/><rect x="5" y="1" width="1" height="1" fill="#808080"/><rect x="6" y="1" width="1" height="1" fill="#000"/><rect x="0" y="2" width="1" height="1" fill="#808080"/><rect x="1" y="2" width="4" height="1" fill="#fff"/><rect x="5" y="2" width="2" height="1" fill="#808080"/><rect x="7" y="2" width="1" height="1" fill="#000"/><rect x="0" y="3" width="1" height="1" fill="#808080"/><rect x="1" y="3" width="6" height="1" fill="#fff"/><rect x="7" y="3" width="1" height="1" fill="#000"/><rect x="0" y="4" width="1" height="1" fill="#808080"/><rect x="1" y="4" width="6" height="1" fill="#fff"/><rect x="7" y="4" width="1" height="1" fill="#000"/><rect x="0" y="5" width="1" height="1" fill="#808080"/><rect x="1" y="5" width="6" height="1" fill="#fff"/><rect x="7" y="5" width="1" height="1" fill="#000"/><rect x="0" y="6" width="1" height="1" fill="#808080"/><rect x="1" y="6" width="6" height="1" fill="#fff"/><rect x="7" y="6" width="1" height="1" fill="#000"/><rect x="0" y="7" width="1" height="1" fill="#808080"/><rect x="1" y="7" width="6" height="1" fill="#fff"/><rect x="7" y="7" width="1" height="1" fill="#000"/><rect x="0" y="8" width="8" height="1" fill="#000"/></svg>
<svg width="5" height="5" viewBox="0 0 5 5" shape-rendering="crispEdges" style="left:419px;top:82px"><rect x="0" y="0" width="3" height="1" fill="#0000A8"/><rect x="2" y="1" width="1" height="1" fill="#0000A8"/><rect x="2" y="2" width="1" height="1" fill="#0000A8"/><rect x="1" y="3" width="3" height="1" fill="#0000A8"/><rect x="2" y="4" width="1" height="1" fill="#0000A8"/></svg>
<div class="tb on" style="left:426px;top:76px"></div>
<svg width="10" height="12" viewBox="0 0 10 12" shape-rendering="crispEdges" style="left:432px;top:81px"><rect x="0" y="0" width="7" height="1" fill="#000"/><rect x="0" y="1" width="1" height="1" fill="#000"/><rect x="1" y="1" width="5" height="1" fill="#fff"/><rect x="6" y="1" width="2" height="1" fill="#000"/><rect x="0" y="2" width="1" height="1" fill="#000"/><rect x="1" y="2" width="5" height="1" fill="#fff"/><rect x="6" y="2" width="1" height="1" fill="#000"/><rect x="7" y="2" width="1" height="1" fill="#fff"/><rect x="8" y="2" width="1" height="1" fill="#000"/><rect x="0" y="3" width="1" height="1" fill="#000"/><rect x="1" y="3" width="5" height="1" fill="#fff"/><rect x="6" y="3" width="4" height="1" fill="#000"/><rect x="0" y="4" width="1" height="1" fill="#000"/><rect x="1" y="4" width="8" height="1" fill="#fff"/><rect x="9" y="4" width="1" height="1" fill="#000"/><rect x="0" y="5" width="1" height="1" fill="#000"/><rect x="1" y="5" width="8" height="1" fill="#fff"/><rect x="9" y="5" width="1" height="1" fill="#000"/><rect x="0" y="6" width="1" height="1" fill="#000"/><rect x="1" y="6" width="8" height="1" fill="#fff"/><rect x="9" y="6" width="1" height="1" fill="#000"/><rect x="0" y="7" width="1" height="1" fill="#000"/><rect x="1" y="7" width="8" height="1" fill="#fff"/><rect x="9" y="7" width="1" height="1" fill="#000"/><rect x="0" y="8" width="1" height="1" fill="#000"/><rect x="1" y="8" width="8" height="1" fill="#fff"/><rect x="9" y="8" width="1" height="1" fill="#000"/><rect x="0" y="9" width="1" height="1" fill="#000"/><rect x="1" y="9" width="8" height="1" fill="#fff"/><rect x="9" y="9" width="1" height="1" fill="#000"/><rect x="0" y="10" width="1" height="1" fill="#000"/><rect x="1" y="10" width="8" height="1" fill="#fff"/><rect x="9" y="10" width="1" height="1" fill="#000"/><rect x="0" y="11" width="10" height="1" fill="#000"/></svg>
<svg width="8" height="9" viewBox="0 0 8 9" shape-rendering="crispEdges" style="left:438px;top:87px"><rect x="0" y="0" width="6" height="1" fill="#808080"/><rect x="0" y="1" width="1" height="1" fill="#808080"/><rect x="1" y="1" width="4" height="1" fill="#fff"/><rect x="5" y="1" width="1" height="1" fill="#808080"/><rect x="6" y="1" width="1" height="1" fill="#000"/><rect x="0" y="2" width="1" height="1" fill="#808080"/><rect x="1" y="2" width="4" height="1" fill="#fff"/><rect x="5" y="2" width="2" height="1" fill="#808080"/><rect x="7" y="2" width="1" height="1" fill="#000"/><rect x="0" y="3" width="1" height="1" fill="#808080"/><rect x="1" y="3" width="6" height="1" fill="#fff"/><rect x="7" y="3" width="1" height="1" fill="#000"/><rect x="0" y="4" width="1" height="1" fill="#808080"/><rect x="1" y="4" width="6" height="1" fill="#fff"/><rect x="7" y="4" width="1" height="1" fill="#000"/><rect x="0" y="5" width="1" height="1" fill="#808080"/><rect x="1" y="5" width="6" height="1" fill="#fff"/><rect x="7" y="5" width="1" height="1" fill="#000"/><rect x="0" y="6" width="1" height="1" fill="#808080"/><rect x="1" y="6" width="6" height="1" fill="#fff"/><rect x="7" y="6" width="1" height="1" fill="#000"/><rect x="0" y="7" width="1" height="1" fill="#808080"/><rect x="1" y="7" width="6" height="1" fill="#fff"/><rect x="7" y="7" width="1" height="1" fill="#000"/><rect x="0" y="8" width="8" height="1" fill="#000"/></svg>
<svg width="5" height="5" viewBox="0 0 5 5" shape-rendering="crispEdges" style="left:442px;top:82px"><rect x="0" y="0" width="3" height="1" fill="#0000A8"/><rect x="2" y="1" width="1" height="1" fill="#0000A8"/><rect x="2" y="2" width="1" height="1" fill="#0000A8"/><rect x="1" y="3" width="3" height="1" fill="#0000A8"/><rect x="2" y="4" width="1" height="1" fill="#0000A8"/></svg>
<div class="tb on" style="left:449px;top:76px"></div>
<svg width="10" height="12" viewBox="0 0 10 12" shape-rendering="crispEdges" style="left:455px;top:81px"><rect x="0" y="0" width="7" height="1" fill="#000"/><rect x="0" y="1" width="1" height="1" fill="#000"/><rect x="1" y="1" width="5" height="1" fill="#fff"/><rect x="6" y="1" width="2" height="1" fill="#000"/><rect x="0" y="2" width="1" height="1" fill="#000"/><rect x="1" y="2" width="5" height="1" fill="#fff"/><rect x="6" y="2" width="1" height="1" fill="#000"/><rect x="7" y="2" width="1" height="1" fill="#fff"/><rect x="8" y="2" width="1" height="1" fill="#000"/><rect x="0" y="3" width="1" height="1" fill="#000"/><rect x="1" y="3" width="5" height="1" fill="#fff"/><rect x="6" y="3" width="4" height="1" fill="#000"/><rect x="0" y="4" width="1" height="1" fill="#000"/><rect x="1" y="4" width="8" height="1" fill="#fff"/><rect x="9" y="4" width="1" height="1" fill="#000"/><rect x="0" y="5" width="1" height="1" fill="#000"/><rect x="1" y="5" width="8" height="1" fill="#fff"/><rect x="9" y="5" width="1" height="1" fill="#000"/><rect x="0" y="6" width="1" height="1" fill="#000"/><rect x="1" y="6" width="8" height="1" fill="#fff"/><rect x="9" y="6" width="1" height="1" fill="#000"/><rect x="0" y="7" width="1" height="1" fill="#000"/><rect x="1" y="7" width="8" height="1" fill="#fff"/><rect x="9" y="7" width="1" height="1" fill="#000"/><rect x="0" y="8" width="1" height="1" fill="#000"/><rect x="1" y="8" width="8" height="1" fill="#fff"/><rect x="9" y="8" width="1" height="1" fill="#000"/><rect x="0" y="9" width="1" height="1" fill="#000"/><rect x="1" y="9" width="8" height="1" fill="#fff"/><rect x="9" y="9" width="1" height="1" fill="#000"/><rect x="0" y="10" width="1" height="1" fill="#000"/><rect x="1" y="10" width="8" height="1" fill="#fff"/><rect x="9" y="10" width="1" height="1" fill="#000"/><rect x="0" y="11" width="10" height="1" fill="#000"/></svg>
<svg width="8" height="9" viewBox="0 0 8 9" shape-rendering="crispEdges" style="left:461px;top:87px"><rect x="0" y="0" width="6" height="1" fill="#808080"/><rect x="0" y="1" width="1" height="1" fill="#808080"/><rect x="1" y="1" width="4" height="1" fill="#fff"/><rect x="5" y="1" width="1" height="1" fill="#808080"/><rect x="6" y="1" width="1" height="1" fill="#000"/><rect x="0" y="2" width="1" height="1" fill="#808080"/><rect x="1" y="2" width="4" height="1" fill="#fff"/><rect x="5" y="2" width="2" height="1" fill="#808080"/><rect x="7" y="2" width="1" height="1" fill="#000"/><rect x="0" y="3" width="1" height="1" fill="#808080"/><rect x="1" y="3" width="6" height="1" fill="#fff"/><rect x="7" y="3" width="1" height="1" fill="#000"/><rect x="0" y="4" width="1" height="1" fill="#808080"/><rect x="1" y="4" width="6" height="1" fill="#fff"/><rect x="7" y="4" width="1" height="1" fill="#000"/><rect x="0" y="5" width="1" height="1" fill="#808080"/><rect x="1" y="5" width="6" height="1" fill="#fff"/><rect x="7" y="5" width="1" height="1" fill="#000"/><rect x="0" y="6" width="1" height="1" fill="#808080"/><rect x="1" y="6" width="6" height="1" fill="#fff"/><rect x="7" y="6" width="1" height="1" fill="#000"/><rect x="0" y="7" width="1" height="1" fill="#808080"/><rect x="1" y="7" width="6" height="1" fill="#fff"/><rect x="7" y="7" width="1" height="1" fill="#000"/><rect x="0" y="8" width="8" height="1" fill="#000"/></svg>
<svg width="5" height="5" viewBox="0 0 5 5" shape-rendering="crispEdges" style="left:465px;top:82px"><rect x="0" y="0" width="3" height="1" fill="#0000A8"/><rect x="2" y="1" width="1" height="1" fill="#0000A8"/><rect x="2" y="2" width="1" height="1" fill="#0000A8"/><rect x="1" y="3" width="3" height="1" fill="#0000A8"/><rect x="2" y="4" width="1" height="1" fill="#0000A8"/></svg>
<div class="tb on" style="left:472px;top:76px"></div>
<svg width="10" height="12" viewBox="0 0 10 12" shape-rendering="crispEdges" style="left:478px;top:81px"><rect x="0" y="0" width="7" height="1" fill="#000"/><rect x="0" y="1" width="1" height="1" fill="#000"/><rect x="1" y="1" width="5" height="1" fill="#fff"/><rect x="6" y="1" width="2" height="1" fill="#000"/><rect x="0" y="2" width="1" height="1" fill="#000"/><rect x="1" y="2" width="5" height="1" fill="#fff"/><rect x="6" y="2" width="1" height="1" fill="#000"/><rect x="7" y="2" width="1" height="1" fill="#fff"/><rect x="8" y="2" width="1" height="1" fill="#000"/><rect x="0" y="3" width="1" height="1" fill="#000"/><rect x="1" y="3" width="5" height="1" fill="#fff"/><rect x="6" y="3" width="4" height="1" fill="#000"/><rect x="0" y="4" width="1" height="1" fill="#000"/><rect x="1" y="4" width="8" height="1" fill="#fff"/><rect x="9" y="4" width="1" height="1" fill="#000"/><rect x="0" y="5" width="1" height="1" fill="#000"/><rect x="1" y="5" width="8" height="1" fill="#fff"/><rect x="9" y="5" width="1" height="1" fill="#000"/><rect x="0" y="6" width="1" height="1" fill="#000"/><rect x="1" y="6" width="8" height="1" fill="#fff"/><rect x="9" y="6" width="1" height="1" fill="#000"/><rect x="0" y="7" width="1" height="1" fill="#000"/><rect x="1" y="7" width="8" height="1" fill="#fff"/><rect x="9" y="7" width="1" height="1" fill="#000"/><rect x="0" y="8" width="1" height="1" fill="#000"/><rect x="1" y="8" width="8" height="1" fill="#fff"/><rect x="9" y="8" width="1" height="1" fill="#000"/><rect x="0" y="9" width="1" height="1" fill="#000"/><rect x="1" y="9" width="8" height="1" fill="#fff"/><rect x="9" y="9" width="1" height="1" fill="#000"/><rect x="0" y="10" width="1" height="1" fill="#000"/><rect x="1" y="10" width="8" height="1" fill="#fff"/><rect x="9" y="10" width="1" height="1" fill="#000"/><rect x="0" y="11" width="10" height="1" fill="#000"/></svg>
<svg width="23" height="22" viewBox="0 0 23 22" style="left:473px;top:77px"><text x="6" y="10" font-family="'DejaVu Sans Condensed','Liberation Sans',sans-serif" font-weight="bold" font-size="7" fill="#F00000">Z</text></svg>
<svg width="8" height="9" viewBox="0 0 8 9" shape-rendering="crispEdges" style="left:484px;top:87px"><rect x="0" y="0" width="6" height="1" fill="#808080"/><rect x="0" y="1" width="1" height="1" fill="#808080"/><rect x="1" y="1" width="4" height="1" fill="#fff"/><rect x="5" y="1" width="1" height="1" fill="#808080"/><rect x="6" y="1" width="1" height="1" fill="#000"/><rect x="0" y="2" width="1" height="1" fill="#808080"/><rect x="1" y="2" width="4" height="1" fill="#fff"/><rect x="5" y="2" width="2" height="1" fill="#808080"/><rect x="7" y="2" width="1" height="1" fill="#000"/><rect x="0" y="3" width="1" height="1" fill="#808080"/><rect x="1" y="3" width="6" height="1" fill="#fff"/><rect x="7" y="3" width="1" height="1" fill="#000"/><rect x="0" y="4" width="1" height="1" fill="#808080"/><rect x="1" y="4" width="6" height="1" fill="#fff"/><rect x="7" y="4" width="1" height="1" fill="#000"/><rect x="0" y="5" width="1" height="1" fill="#808080"/><rect x="1" y="5" width="6" height="1" fill="#fff"/><rect x="7" y="5" width="1" height="1" fill="#000"/><rect x="0" y="6" width="1" height="1" fill="#808080"/><rect x="1" y="6" width="6" height="1" fill="#fff"/><rect x="7" y="6" width="1" height="1" fill="#000"/><rect x="0" y="7" width="1" height="1" fill="#808080"/><rect x="1" y="7" width="6" height="1" fill="#fff"/><rect x="7" y="7" width="1" height="1" fill="#000"/><rect x="0" y="8" width="8" height="1" fill="#000"/></svg>
<svg width="5" height="5" viewBox="0 0 5 5" shape-rendering="crispEdges" style="left:488px;top:82px"><rect x="0" y="0" width="3" height="1" fill="#0000A8"/><rect x="2" y="1" width="1" height="1" fill="#0000A8"/><rect x="2" y="2" width="1" height="1" fill="#0000A8"/><rect x="1" y="3" width="3" height="1" fill="#0000A8"/><rect x="2" y="4" width="1" height="1" fill="#0000A8"/></svg>
<div class="tb on" style="left:495px;top:76px"></div>
<svg width="10" height="12" viewBox="0 0 10 12" shape-rendering="crispEdges" style="left:501px;top:81px"><rect x="0" y="0" width="7" height="1" fill="#000"/><rect x="0" y="1" width="1" height="1" fill="#000"/><rect x="1" y="1" width="5" height="1" fill="#fff"/><rect x="6" y="1" width="2" height="1" fill="#000"/><rect x="0" y="2" width="1" height="1" fill="#000"/><rect x="1" y="2" width="5" height="1" fill="#fff"/><rect x="6" y="2" width="1" height="1" fill="#000"/><rect x="7" y="2" width="1" height="1" fill="#fff"/><rect x="8" y="2" width="1" height="1" fill="#000"/><rect x="0" y="3" width="1" height="1" fill="#000"/><rect x="1" y="3" width="5" height="1" fill="#fff"/><rect x="6" y="3" width="4" height="1" fill="#000"/><rect x="0" y="4" width="1" height="1" fill="#000"/><rect x="1" y="4" width="8" height="1" fill="#fff"/><rect x="9" y="4" width="1" height="1" fill="#000"/><rect x="0" y="5" width="1" height="1" fill="#000"/><rect x="1" y="5" width="8" height="1" fill="#fff"/><rect x="9" y="5" width="1" height="1" fill="#000"/><rect x="0" y="6" width="1" height="1" fill="#000"/><rect x="1" y="6" width="8" height="1" fill="#fff"/><rect x="9" y="6" width="1" height="1" fill="#000"/><rect x="0" y="7" width="1" height="1" fill="#000"/><rect x="1" y="7" width="8" height="1" fill="#fff"/><rect x="9" y="7" width="1" height="1" fill="#000"/><rect x="0" y="8" width="1" height="1" fill="#000"/><rect x="1" y="8" width="8" height="1" fill="#fff"/><rect x="9" y="8" width="1" height="1" fill="#000"/><rect x="0" y="9" width="1" height="1" fill="#000"/><rect x="1" y="9" width="8" height="1" fill="#fff"/><rect x="9" y="9" width="1" height="1" fill="#000"/><rect x="0" y="10" width="1" height="1" fill="#000"/><rect x="1" y="10" width="8" height="1" fill="#fff"/><rect x="9" y="10" width="1" height="1" fill="#000"/><rect x="0" y="11" width="10" height="1" fill="#000"/></svg>
<svg width="10" height="6" viewBox="0 0 10 6" shape-rendering="crispEdges" style="left:499px;top:81px"><rect x="0" y="0" width="10" height="1" fill="#F6F4EC"/><rect x="0" y="1" width="10" height="1" fill="#F6F4EC"/><rect x="0" y="2" width="10" height="1" fill="#F6F4EC"/><rect x="0" y="3" width="10" height="1" fill="#F6F4EC"/><rect x="0" y="4" width="10" height="1" fill="#F6F4EC"/><rect x="0" y="5" width="2" height="1" fill="#F6F4EC"/></svg>
<svg width="10" height="10" viewBox="0 0 10 10" shape-rendering="crispEdges" style="left:506px;top:87px"><rect x="4" y="0" width="2" height="1" fill="#000"/><rect x="1" y="1" width="2" height="1" fill="#000"/><rect x="4" y="1" width="2" height="1" fill="#C0C0C0"/><rect x="7" y="1" width="2" height="1" fill="#000"/><rect x="1" y="2" width="1" height="1" fill="#000"/><rect x="2" y="2" width="6" height="1" fill="#C0C0C0"/><rect x="8" y="2" width="1" height="1" fill="#000"/><rect x="2" y="3" width="2" height="1" fill="#C0C0C0"/><rect x="4" y="3" width="1" height="1" fill="#E0E0E0"/><rect x="5" y="3" width="3" height="1" fill="#C0C0C0"/><rect x="0" y="4" width="1" height="1" fill="#000"/><rect x="1" y="4" width="2" height="1" fill="#C0C0C0"/><rect x="3" y="4" width="1" height="1" fill="#E0E0E0"/><rect x="4" y="4" width="2" height="1" fill="#000"/><rect x="6" y="4" width="3" height="1" fill="#C0C0C0"/><rect x="9" y="4" width="1" height="1" fill="#000"/><rect x="0" y="5" width="1" height="1" fill="#000"/><rect x="1" y="5" width="3" height="1" fill="#C0C0C0"/><rect x="4" y="5" width="2" height="1" fill="#000"/><rect x="6" y="5" width="3" height="1" fill="#C0C0C0"/><rect x="9" y="5" width="1" height="1" fill="#000"/><rect x="2" y="6" width="6" height="1" fill="#C0C0C0"/><rect x="1" y="7" width="1" height="1" fill="#000"/><rect x="2" y="7" width="6" height="1" fill="#C0C0C0"/><rect x="8" y="7" width="1" height="1" fill="#000"/><rect x="1" y="8" width="2" height="1" fill="#000"/><rect x="4" y="8" width="2" height="1" fill="#C0C0C0"/><rect x="7" y="8" width="2" height="1" fill="#000"/><rect x="4" y="9" width="2" height="1" fill="#000"/></svg>
<svg width="23" height="22" viewBox="0 0 23 22" style="left:496px;top:77px"><text x="3" y="9" font-family="'DejaVu Sans Condensed','Liberation Sans',sans-serif" font-weight="bold" font-size="6.5" fill="#F00000">W</text></svg>
<svg width="5" height="5" viewBox="0 0 5 5" shape-rendering="crispEdges" style="left:511px;top:82px"><rect x="0" y="0" width="3" height="1" fill="#0000A8"/><rect x="2" y="1" width="1" height="1" fill="#0000A8"/><rect x="2" y="2" width="1" height="1" fill="#0000A8"/><rect x="1" y="3" width="3" height="1" fill="#0000A8"/><rect x="2" y="4" width="1" height="1" fill="#0000A8"/></svg>
<svg width="10" height="12" viewBox="0 0 10 12" shape-rendering="crispEdges" style="left:523px;top:80px"><rect x="0" y="0" width="7" height="1" fill="#000"/><rect x="0" y="1" width="1" height="1" fill="#000"/><rect x="1" y="1" width="5" height="1" fill="#fff"/><rect x="6" y="1" width="2" height="1" fill="#000"/><rect x="0" y="2" width="1" height="1" fill="#000"/><rect x="1" y="2" width="5" height="1" fill="#fff"/><rect x="6" y="2" width="1" height="1" fill="#000"/><rect x="7" y="2" width="1" height="1" fill="#fff"/><rect x="8" y="2" width="1" height="1" fill="#000"/><rect x="0" y="3" width="1" height="1" fill="#000"/><rect x="1" y="3" width="5" height="1" fill="#fff"/><rect x="6" y="3" width="4" height="1" fill="#000"/><rect x="0" y="4" width="1" height="1" fill="#000"/><rect x="1" y="4" width="8" height="1" fill="#fff"/><rect x="9" y="4" width="1" height="1" fill="#000"/><rect x="0" y="5" width="1" height="1" fill="#000"/><rect x="1" y="5" width="8" height="1" fill="#fff"/><rect x="9" y="5" width="1" height="1" fill="#000"/><rect x="0" y="6" width="1" height="1" fill="#000"/><rect x="1" y="6" width="8" height="1" fill="#fff"/><rect x="9" y="6" width="1" height="1" fill="#000"/><rect x="0" y="7" width="1" height="1" fill="#000"/><rect x="1" y="7" width="8" height="1" fill="#fff"/><rect x="9" y="7" width="1" height="1" fill="#000"/><rect x="0" y="8" width="1" height="1" fill="#000"/><rect x="1" y="8" width="8" height="1" fill="#fff"/><rect x="9" y="8" width="1" height="1" fill="#000"/><rect x="0" y="9" width="1" height="1" fill="#000"/><rect x="1" y="9" width="8" height="1" fill="#fff"/><rect x="9" y="9" width="1" height="1" fill="#000"/><rect x="0" y="10" width="1" height="1" fill="#000"/><rect x="1" y="10" width="8" height="1" fill="#fff"/><rect x="9" y="10" width="1" height="1" fill="#000"/><rect x="0" y="11" width="10" height="1" fill="#000"/></svg>
<svg width="23" height="22" viewBox="0 0 23 22" style="left:518px;top:76px"><text x="6" y="10" font-family="'DejaVu Sans Condensed','Liberation Sans',sans-serif" font-weight="bold" font-size="7" fill="#0000F0">A</text></svg>
<svg width="10" height="8" viewBox="0 0 10 8" shape-rendering="crispEdges" style="left:527px;top:87px"><rect x="0" y="0" width="10" height="1" fill="#000080"/><rect x="0" y="1" width="10" height="1" fill="#000080"/><rect x="0" y="2" width="1" height="1" fill="#000"/><rect x="1" y="2" width="8" height="1" fill="#C0C0C0"/><rect x="9" y="2" width="1" height="1" fill="#000"/><rect x="0" y="3" width="1" height="1" fill="#000"/><rect x="1" y="3" width="1" height="1" fill="#E0E0E0"/><rect x="2" y="3" width="1" height="1" fill="#C0C0C0"/><rect x="3" y="3" width="1" height="1" fill="#E0E0E0"/><rect x="4" y="3" width="6" height="1" fill="#000"/><rect x="0" y="4" width="1" height="1" fill="#000"/><rect x="1" y="4" width="1" height="1" fill="#C0C0C0"/><rect x="2" y="4" width="1" height="1" fill="#E0E0E0"/><rect x="3" y="4" width="1" height="1" fill="#C0C0C0"/><rect x="4" y="4" width="1" height="1" fill="#000"/><rect x="5" y="4" width="3" height="1" fill="#fff"/><rect x="8" y="4" width="2" height="1" fill="#000"/><rect x="0" y="5" width="1" height="1" fill="#000"/><rect x="1" y="5" width="1" height="1" fill="#E0E0E0"/><rect x="2" y="5" width="1" height="1" fill="#C0C0C0"/><rect x="3" y="5" width="1" height="1" fill="#E0E0E0"/><rect x="4" y="5" width="6" height="1" fill="#000"/><rect x="0" y="6" width="1" height="1" fill="#000"/><rect x="1" y="6" width="8" height="1" fill="#C0C0C0"/><rect x="9" y="6" width="1" height="1" fill="#000"/><rect x="0" y="7" width="10" height="1" fill="#000"/></svg>
<svg width="10" height="12" viewBox="0 0 10 12" shape-rendering="crispEdges" style="left:546px;top:80px"><rect x="0" y="0" width="7" height="1" fill="#000"/><rect x="0" y="1" width="1" height="1" fill="#000"/><rect x="1" y="1" width="5" height="1" fill="#fff"/><rect x="6" y="1" width="2" height="1" fill="#000"/><rect x="0" y="2" width="1" height="1" fill="#000"/><rect x="1" y="2" width="5" height="1" fill="#fff"/><rect x="6" y="2" width="1" height="1" fill="#000"/><rect x="7" y="2" width="1" height="1" fill="#fff"/><rect x="8" y="2" width="1" height="1" fill="#000"/><rect x="0" y="3" width="1" height="1" fill="#000"/><rect x="1" y="3" width="5" height="1" fill="#fff"/><rect x="6" y="3" width="4" height="1" fill="#000"/><rect x="0" y="4" width="1" height="1" fill="#000"/><rect x="1" y="4" width="8" height="1" fill="#fff"/><rect x="9" y="4" width="1" height="1" fill="#000"/><rect x="0" y="5" width="1" height="1" fill="#000"/><rect x="1" y="5" width="8" height="1" fill="#fff"/><rect x="9" y="5" width="1" height="1" fill="#000"/><rect x="0" y="6" width="1" height="1" fill="#000"/><rect x="1" y="6" width="8" height="1" fill="#fff"/><rect x="9" y="6" width="1" height="1" fill="#000"/><rect x="0" y="7" width="1" height="1" fill="#000"/><rect x="1" y="7" width="8" height="1" fill="#fff"/><rect x="9" y="7" width="1" height="1" fill="#000"/><rect x="0" y="8" width="1" height="1" fill="#000"/><rect x="1" y="8" width="8" height="1" fill="#fff"/><rect x="9" y="8" width="1" height="1" fill="#000"/><rect x="0" y="9" width="1" height="1" fill="#000"/><rect x="1" y="9" width="8" height="1" fill="#fff"/><rect x="9" y="9" width="1" height="1" fill="#000"/><rect x="0" y="10" width="1" height="1" fill="#000"/><rect x="1" y="10" width="8" height="1" fill="#fff"/><rect x="9" y="10" width="1" height="1" fill="#000"/><rect x="0" y="11" width="10" height="1" fill="#000"/></svg>
<svg width="10" height="8" viewBox="0 0 10 8" shape-rendering="crispEdges" style="left:550px;top:87px"><rect x="0" y="0" width="10" height="1" fill="#000080"/><rect x="0" y="1" width="10" height="1" fill="#000080"/><rect x="0" y="2" width="1" height="1" fill="#000"/><rect x="1" y="2" width="8" height="1" fill="#C0C0C0"/><rect x="9" y="2" width="1" height="1" fill="#000"/><rect x="0" y="3" width="1" height="1" fill="#000"/><rect x="1" y="3" width="1" height="1" fill="#E0E0E0"/><rect x="2" y="3" width="1" height="1" fill="#C0C0C0"/><rect x="3" y="3" width="1" height="1" fill="#E0E0E0"/><rect x="4" y="3" width="6" height="1" fill="#000"/><rect x="0" y="4" width="1" height="1" fill="#000"/><rect x="1" y="4" width="1" height="1" fill="#C0C0C0"/><rect x="2" y="4" width="1" height="1" fill="#E0E0E0"/><rect x="3" y="4" width="1" height="1" fill="#C0C0C0"/><rect x="4" y="4" width="1" height="1" fill="#000"/><rect x="5" y="4" width="3" height="1" fill="#fff"/><rect x="8" y="4" width="2" height="1" fill="#000"/><rect x="0" y="5" width="1" height="1" fill="#000"/><rect x="1" y="5" width="1" height="1" fill="#E0E0E0"/><rect x="2" y="5" width="1" height="1" fill="#C0C0C0"/><rect x="3" y="5" width="1" height="1" fill="#E0E0E0"/><rect x="4" y="5" width="6" height="1" fill="#000"/><rect x="0" y="6" width="1" height="1" fill="#000"/><rect x="1" y="6" width="8" height="1" fill="#C0C0C0"/><rect x="9" y="6" width="1" height="1" fill="#000"/><rect x="0" y="7" width="10" height="1" fill="#000"/></svg>
<svg width="10" height="12" viewBox="0 0 10 12" shape-rendering="crispEdges" style="left:569px;top:80px"><rect x="0" y="0" width="7" height="1" fill="#000"/><rect x="0" y="1" width="1" height="1" fill="#000"/><rect x="1" y="1" width="5" height="1" fill="#fff"/><rect x="6" y="1" width="2" height="1" fill="#000"/><rect x="0" y="2" width="1" height="1" fill="#000"/><rect x="1" y="2" width="5" height="1" fill="#fff"/><rect x="6" y="2" width="1" height="1" fill="#000"/><rect x="7" y="2" width="1" height="1" fill="#fff"/><rect x="8" y="2" width="1" height="1" fill="#000"/><rect x="0" y="3" width="1" height="1" fill="#000"/><rect x="1" y="3" width="5" height="1" fill="#fff"/><rect x="6" y="3" width="4" height="1" fill="#000"/><rect x="0" y="4" width="1" height="1" fill="#000"/><rect x="1" y="4" width="8" height="1" fill="#fff"/><rect x="9" y="4" width="1" height="1" fill="#000"/><rect x="0" y="5" width="1" height="1" fill="#000"/><rect x="1" y="5" width="8" height="1" fill="#fff"/><rect x="9" y="5" width="1" height="1" fill="#000"/><rect x="0" y="6" width="1" height="1" fill="#000"/><rect x="1" y="6" width="8" height="1" fill="#fff"/><rect x="9" y="6" width="1" height="1" fill="#000"/><rect x="0" y="7" width="1" height="1" fill="#000"/><rect x="1" y="7" width="8" height="1" fill="#fff"/><rect x="9" y="7" width="1" height="1" fill="#000"/><rect x="0" y="8" width="1" height="1" fill="#000"/><rect x="1" y="8" width="8" height="1" fill="#fff"/><rect x="9" y="8" width="1" height="1" fill="#000"/><rect x="0" y="9" width="1" height="1" fill="#000"/><rect x="1" y="9" width="8" height="1" fill="#fff"/><rect x="9" y="9" width="1" height="1" fill="#000"/><rect x="0" y="10" width="1" height="1" fill="#000"/><rect x="1" y="10" width="8" height="1" fill="#fff"/><rect x="9" y="10" width="1" height="1" fill="#000"/><rect x="0" y="11" width="10" height="1" fill="#000"/></svg>
<svg width="23" height="22" viewBox="0 0 23 22" style="left:564px;top:76px"><text x="6" y="10" font-family="'DejaVu Sans Condensed','Liberation Sans',sans-serif" font-weight="bold" font-size="7" fill="#0000F0">D</text></svg>
<svg width="10" height="8" viewBox="0 0 10 8" shape-rendering="crispEdges" style="left:573px;top:87px"><rect x="0" y="0" width="10" height="1" fill="#000080"/><rect x="0" y="1" width="10" height="1" fill="#000080"/><rect x="0" y="2" width="1" height="1" fill="#000"/><rect x="1" y="2" width="8" height="1" fill="#C0C0C0"/><rect x="9" y="2" width="1" height="1" fill="#000"/><rect x="0" y="3" width="1" height="1" fill="#000"/><rect x="1" y="3" width="1" height="1" fill="#E0E0E0"/><rect x="2" y="3" width="1" height="1" fill="#C0C0C0"/><rect x="3" y="3" width="1" height="1" fill="#E0E0E0"/><rect x="4" y="3" width="6" height="1" fill="#000"/><rect x="0" y="4" width="1" height="1" fill="#000"/><rect x="1" y="4" width="1" height="1" fill="#C0C0C0"/><rect x="2" y="4" width="1" height="1" fill="#E0E0E0"/><rect x="3" y="4" width="1" height="1" fill="#C0C0C0"/><rect x="4" y="4" width="1" height="1" fill="#000"/><rect x="5" y="4" width="3" height="1" fill="#fff"/><rect x="8" y="4" width="2" height="1" fill="#000"/><rect x="0" y="5" width="1" height="1" fill="#000"/><rect x="1" y="5" width="1" height="1" fill="#E0E0E0"/><rect x="2" y="5" width="1" height="1" fill="#C0C0C0"/><rect x="3" y="5" width="1" height="1" fill="#E0E0E0"/><rect x="4" y="5" width="6" height="1" fill="#000"/><rect x="0" y="6" width="1" height="1" fill="#000"/><rect x="1" y="6" width="8" height="1" fill="#C0C0C0"/><rect x="9" y="6" width="1" height="1" fill="#000"/><rect x="0" y="7" width="10" height="1" fill="#000"/></svg>
<div class="tb on" style="left:587px;top:76px"></div>
<svg width="10" height="12" viewBox="0 0 10 12" shape-rendering="crispEdges" style="left:593px;top:81px"><rect x="0" y="0" width="7" height="1" fill="#000"/><rect x="0" y="1" width="1" height="1" fill="#000"/><rect x="1" y="1" width="5" height="1" fill="#fff"/><rect x="6" y="1" width="2" height="1" fill="#000"/><rect x="0" y="2" width="1" height="1" fill="#000"/><rect x="1" y="2" width="5" height="1" fill="#fff"/><rect x="6" y="2" width="1" height="1" fill="#000"/><rect x="7" y="2" width="1" height="1" fill="#fff"/><rect x="8" y="2" width="1" height="1" fill="#000"/><rect x="0" y="3" width="1" height="1" fill="#000"/><rect x="1" y="3" width="5" height="1" fill="#fff"/><rect x="6" y="3" width="4" height="1" fill="#000"/><rect x="0" y="4" width="1" height="1" fill="#000"/><rect x="1" y="4" width="8" height="1" fill="#fff"/><rect x="9" y="4" width="1" height="1" fill="#000"/><rect x="0" y="5" width="1" height="1" fill="#000"/><rect x="1" y="5" width="8" height="1" fill="#fff"/><rect x="9" y="5" width="1" height="1" fill="#000"/><rect x="0" y="6" width="1" height="1" fill="#000"/><rect x="1" y="6" width="8" height="1" fill="#fff"/><rect x="9" y="6" width="1" height="1" fill="#000"/><rect x="0" y="7" width="1" height="1" fill="#000"/><rect x="1" y="7" width="8" height="1" fill="#fff"/><rect x="9" y="7" width="1" height="1" fill="#000"/><rect x="0" y="8" width="1" height="1" fill="#000"/><rect x="1" y="8" width="8" height="1" fill="#fff"/><rect x="9" y="8" width="1" height="1" fill="#000"/><rect x="0" y="9" width="1" height="1" fill="#000"/><rect x="1" y="9" width="8" height="1" fill="#fff"/><rect x="9" y="9" width="1" height="1" fill="#000"/><rect x="0" y="10" width="1" height="1" fill="#000"/><rect x="1" y="10" width="8" height="1" fill="#fff"/><rect x="9" y="10" width="1" height="1" fill="#000"/><rect x="0" y="11" width="10" height="1" fill="#000"/></svg>
<svg width="23" height="22" viewBox="0 0 23 22" style="left:588px;top:77px"><text x="5.8" y="10" font-family="'DejaVu Sans Condensed','Liberation Sans',sans-serif" font-weight="bold" font-size="7" fill="#0000F0" textLength="5.4" lengthAdjust="spacingAndGlyphs">M</text></svg>
<svg width="10" height="8" viewBox="0 0 10 8" shape-rendering="crispEdges" style="left:597px;top:88px"><rect x="0" y="0" width="10" height="1" fill="#000080"/><rect x="0" y="1" width="10" height="1" fill="#000080"/><rect x="0" y="2" width="1" height="1" fill="#000"/><rect x="1" y="2" width="8" height="1" fill="#C0C0C0"/><rect x="9" y="2" width="1" height="1" fill="#000"/><rect x="0" y="3" width="1" height="1" fill="#000"/><rect x="1" y="3" width="1" height="1" fill="#E0E0E0"/><rect x="2" y="3" width="1" height="1" fill="#C0C0C0"/><rect x="3" y="3" width="1" height="1" fill="#E0E0E0"/><rect x="4" y="3" width="6" height="1" fill="#000"/><rect x="0" y="4" width="1" height="1" fill="#000"/><rect x="1" y="4" width="1" height="1" fill="#C0C0C0"/><rect x="2" y="4" width="1" height="1" fill="#E0E0E0"/><rect x="3" y="4" width="1" height="1" fill="#C0C0C0"/><rect x="4" y="4" width="1" height="1" fill="#000"/><rect x="5" y="4" width="3" height="1" fill="#fff"/><rect x="8" y="4" width="2" height="1" fill="#000"/><rect x="0" y="5" width="1" height="1" fill="#000"/><rect x="1" y="5" width="1" height="1" fill="#E0E0E0"/><rect x="2" y="5" width="1" height="1" fill="#C0C0C0"/><rect x="3" y="5" width="1" height="1" fill="#E0E0E0"/><rect x="4" y="5" width="6" height="1" fill="#000"/><rect x="0" y="6" width="1" height="1" fill="#000"/><rect x="1" y="6" width="8" height="1" fill="#C0C0C0"/><rect x="9" y="6" width="1" height="1" fill="#000"/><rect x="0" y="7" width="10" height="1" fill="#000"/></svg>
<div class="tb on" style="left:610px;top:76px"></div>
<svg width="10" height="12" viewBox="0 0 10 12" shape-rendering="crispEdges" style="left:616px;top:81px"><rect x="0" y="0" width="7" height="1" fill="#000"/><rect x="0" y="1" width="1" height="1" fill="#000"/><rect x="1" y="1" width="5" height="1" fill="#fff"/><rect x="6" y="1" width="2" height="1" fill="#000"/><rect x="0" y="2" width="1" height="1" fill="#000"/><rect x="1" y="2" width="5" height="1" fill="#fff"/><rect x="6" y="2" width="1" height="1" fill="#000"/><rect x="7" y="2" width="1" height="1" fill="#fff"/><rect x="8" y="2" width="1" height="1" fill="#000"/><rect x="0" y="3" width="1" height="1" fill="#000"/><rect x="1" y="3" width="5" height="1" fill="#fff"/><rect x="6" y="3" width="4" height="1" fill="#000"/><rect x="0" y="4" width="1" height="1" fill="#000"/><rect x="1" y="4" width="8" height="1" fill="#fff"/><rect x="9" y="4" width="1" height="1" fill="#000"/><rect x="0" y="5" width="1" height="1" fill="#000"/><rect x="1" y="5" width="8" height="1" fill="#fff"/><rect x="9" y="5" width="1" height="1" fill="#000"/><rect x="0" y="6" width="1" height="1" fill="#000"/><rect x="1" y="6" width="8" height="1" fill="#fff"/><rect x="9" y="6" width="1" height="1" fill="#000"/><rect x="0" y="7" width="1" height="1" fill="#000"/><rect x="1" y="7" width="8" height="1" fill="#fff"/><rect x="9" y="7" width="1" height="1" fill="#000"/><rect x="0" y="8" width="1" height="1" fill="#000"/><rect x="1" y="8" width="8" height="1" fill="#fff"/><rect x="9" y="8" width="1" height="1" fill="#000"/><rect x="0" y="9" width="1" height="1" fill="#000"/><rect x="1" y="9" width="8" height="1" fill="#fff"/><rect x="9" y="9" width="1" height="1" fill="#000"/><rect x="0" y="10" width="1" height="1" fill="#000"/><rect x="1" y="10" width="8" height="1" fill="#fff"/><rect x="9" y="10" width="1" height="1" fill="#000"/><rect x="0" y="11" width="10" height="1" fill="#000"/></svg>
<svg width="23" height="22" viewBox="0 0 23 22" style="left:611px;top:77px"><text x="6" y="10" font-family="'DejaVu Sans Condensed','Liberation Sans',sans-serif" font-weight="bold" font-size="7" fill="#0000F0">N</text></svg>
<svg width="10" height="8" viewBox="0 0 10 8" shape-rendering="crispEdges" style="left:620px;top:88px"><rect x="0" y="0" width="10" height="1" fill="#000080"/><rect x="0" y="1" width="10" height="1" fill="#000080"/><rect x="0" y="2" width="1" height="1" fill="#000"/><rect x="1" y="2" width="8" height="1" fill="#C0C0C0"/><rect x="9" y="2" width="1" height="1" fill="#000"/><rect x="0" y="3" width="1" height="1" fill="#000"/><rect x="1" y="3" width="1" height="1" fill="#E0E0E0"/><rect x="2" y="3" width="1" height="1" fill="#C0C0C0"/><rect x="3" y="3" width="1" height="1" fill="#E0E0E0"/><rect x="4" y="3" width="6" height="1" fill="#000"/><rect x="0" y="4" width="1" height="1" fill="#000"/><rect x="1" y="4" width="1" height="1" fill="#C0C0C0"/><rect x="2" y="4" width="1" height="1" fill="#E0E0E0"/><rect x="3" y="4" width="1" height="1" fill="#C0C0C0"/><rect x="4" y="4" width="1" height="1" fill="#000"/><rect x="5" y="4" width="3" height="1" fill="#fff"/><rect x="8" y="4" width="2" height="1" fill="#000"/><rect x="0" y="5" width="1" height="1" fill="#000"/><rect x="1" y="5" width="1" height="1" fill="#E0E0E0"/><rect x="2" y="5" width="1" height="1" fill="#C0C0C0"/><rect x="3" y="5" width="1" height="1" fill="#E0E0E0"/><rect x="4" y="5" width="6" height="1" fill="#000"/><rect x="0" y="6" width="1" height="1" fill="#000"/><rect x="1" y="6" width="8" height="1" fill="#C0C0C0"/><rect x="9" y="6" width="1" height="1" fill="#000"/><rect x="0" y="7" width="10" height="1" fill="#000"/></svg>
<svg width="10" height="12" viewBox="0 0 10 12" shape-rendering="crispEdges" style="left:638px;top:80px"><rect x="0" y="0" width="7" height="1" fill="#000"/><rect x="0" y="1" width="1" height="1" fill="#000"/><rect x="1" y="1" width="5" height="1" fill="#fff"/><rect x="6" y="1" width="2" height="1" fill="#000"/><rect x="0" y="2" width="1" height="1" fill="#000"/><rect x="1" y="2" width="5" height="1" fill="#fff"/><rect x="6" y="2" width="1" height="1" fill="#000"/><rect x="7" y="2" width="1" height="1" fill="#fff"/><rect x="8" y="2" width="1" height="1" fill="#000"/><rect x="0" y="3" width="1" height="1" fill="#000"/><rect x="1" y="3" width="5" height="1" fill="#fff"/><rect x="6" y="3" width="4" height="1" fill="#000"/><rect x="0" y="4" width="1" height="1" fill="#000"/><rect x="1" y="4" width="8" height="1" fill="#fff"/><rect x="9" y="4" width="1" height="1" fill="#000"/><rect x="0" y="5" width="1" height="1" fill="#000"/><rect x="1" y="5" width="8" height="1" fill="#fff"/><rect x="9" y="5" width="1" height="1" fill="#000"/><rect x="0" y="6" width="1" height="1" fill="#000"/><rect x="1" y="6" width="8" height="1" fill="#fff"/><rect x="9" y="6" width="1" height="1" fill="#000"/><rect x="0" y="7" width="1" height="1" fill="#000"/><rect x="1" y="7" width="8" height="1" fill="#fff"/><rect x="9" y="7" width="1" height="1" fill="#000"/><rect x="0" y="8" width="1" height="1" fill="#000"/><rect x="1" y="8" width="8" height="1" fill="#fff"/><rect x="9" y="8" width="1" height="1" fill="#000"/><rect x="0" y="9" width="1" height="1" fill="#000"/><rect x="1" y="9" width="8" height="1" fill="#fff"/><rect x="9" y="9" width="1" height="1" fill="#000"/><rect x="0" y="10" width="1" height="1" fill="#000"/><rect x="1" y="10" width="8" height="1" fill="#fff"/><rect x="9" y="10" width="1" height="1" fill="#000"/><rect x="0" y="11" width="10" height="1" fill="#000"/></svg>
<svg width="23" height="22" viewBox="0 0 23 22" style="left:633px;top:76px"><text x="6" y="10" font-family="'DejaVu Sans Condensed','Liberation Sans',sans-serif" font-weight="bold" font-size="7" fill="#0000F0">A</text></svg>
<svg width="10" height="8" viewBox="0 0 10 8" shape-rendering="crispEdges" style="left:642px;top:87px"><rect x="0" y="0" width="10" height="1" fill="#000080"/><rect x="0" y="1" width="10" height="1" fill="#000080"/><rect x="0" y="2" width="1" height="1" fill="#000"/><rect x="1" y="2" width="8" height="1" fill="#E0E0E0"/><rect x="9" y="2" width="1" height="1" fill="#000"/><rect x="0" y="3" width="1" height="1" fill="#000"/><rect x="1" y="3" width="1" height="1" fill="#fff"/><rect x="2" y="3" width="1" height="1" fill="#E0E0E0"/><rect x="3" y="3" width="2" height="1" fill="#000"/><rect x="5" y="3" width="1" height="1" fill="#E0E0E0"/><rect x="6" y="3" width="1" height="1" fill="#000"/><rect x="7" y="3" width="1" height="1" fill="#E0E0E0"/><rect x="8" y="3" width="2" height="1" fill="#000"/><rect x="0" y="4" width="1" height="1" fill="#000"/><rect x="1" y="4" width="1" height="1" fill="#E0E0E0"/><rect x="2" y="4" width="1" height="1" fill="#fff"/><rect x="3" y="4" width="3" height="1" fill="#E0E0E0"/><rect x="6" y="4" width="1" height="1" fill="#fff"/><rect x="7" y="4" width="2" height="1" fill="#E0E0E0"/><rect x="9" y="4" width="1" height="1" fill="#000"/><rect x="0" y="5" width="1" height="1" fill="#000"/><rect x="1" y="5" width="1" height="1" fill="#fff"/><rect x="2" y="5" width="5" height="1" fill="#000"/><rect x="7" y="5" width="1" height="1" fill="#E0E0E0"/><rect x="8" y="5" width="2" height="1" fill="#000"/><rect x="0" y="6" width="1" height="1" fill="#000"/><rect x="1" y="6" width="8" height="1" fill="#E0E0E0"/><rect x="9" y="6" width="1" height="1" fill="#000"/><rect x="0" y="7" width="10" height="1" fill="#000"/></svg>
<div class="tb on" style="left:656px;top:76px"></div>
<svg width="10" height="12" viewBox="0 0 10 12" shape-rendering="crispEdges" style="left:662px;top:81px"><rect x="0" y="0" width="7" height="1" fill="#000"/><rect x="0" y="1" width="1" height="1" fill="#000"/><rect x="1" y="1" width="5" height="1" fill="#fff"/><rect x="6" y="1" width="2" height="1" fill="#000"/><rect x="0" y="2" width="1" height="1" fill="#000"/><rect x="1" y="2" width="5" height="1" fill="#fff"/><rect x="6" y="2" width="1" height="1" fill="#000"/><rect x="7" y="2" width="1" height="1" fill="#fff"/><rect x="8" y="2" width="1" height="1" fill="#000"/><rect x="0" y="3" width="1" height="1" fill="#000"/><rect x="1" y="3" width="5" height="1" fill="#fff"/><rect x="6" y="3" width="4" height="1" fill="#000"/><rect x="0" y="4" width="1" height="1" fill="#000"/><rect x="1" y="4" width="8" height="1" fill="#fff"/><rect x="9" y="4" width="1" height="1" fill="#000"/><rect x="0" y="5" width="1" height="1" fill="#000"/><rect x="1" y="5" width="8" height="1" fill="#fff"/><rect x="9" y="5" width="1" height="1" fill="#000"/><rect x="0" y="6" width="1" height="1" fill="#000"/><rect x="1" y="6" width="8" height="1" fill="#fff"/><rect x="9" y="6" width="1" height="1" fill="#000"/><rect x="0" y="7" width="1" height="1" fill="#000"/><rect x="1" y="7" width="8" height="1" fill="#fff"/><rect x="9" y="7" width="1" height="1" fill="#000"/><rect x="0" y="8" width="1" height="1" fill="#000"/><rect x="1" y="8" width="8" height="1" fill="#fff"/><rect x="9" y="8" width="1" height="1" fill="#000"/><rect x="0" y="9" width="1" height="1" fill="#000"/><rect x="1" y="9" width="8" height="1" fill="#fff"/><rect x="9" y="9" width="1" height="1" fill="#000"/><rect x="0" y="10" width="1" height="1" fill="#000"/><rect x="1" y="10" width="8" height="1" fill="#fff"/><rect x="9" y="10" width="1" height="1" fill="#000"/><rect x="0" y="11" width="10" height="1" fill="#000"/></svg>
<svg width="10" height="8" viewBox="0 0 10 8" shape-rendering="crispEdges" style="left:666px;top:88px"><rect x="0" y="0" width="10" height="1" fill="#000080"/><rect x="0" y="1" width="10" height="1" fill="#000080"/><rect x="0" y="2" width="1" height="1" fill="#000"/><rect x="1" y="2" width="8" height="1" fill="#E0E0E0"/><rect x="9" y="2" width="1" height="1" fill="#000"/><rect x="0" y="3" width="1" height="1" fill="#000"/><rect x="1" y="3" width="1" height="1" fill="#fff"/><rect x="2" y="3" width="1" height="1" fill="#E0E0E0"/><rect x="3" y="3" width="2" height="1" fill="#000"/><rect x="5" y="3" width="1" height="1" fill="#E0E0E0"/><rect x="6" y="3" width="1" height="1" fill="#000"/><rect x="7" y="3" width="1" height="1" fill="#E0E0E0"/><rect x="8" y="3" width="2" height="1" fill="#000"/><rect x="0" y="4" width="1" height="1" fill="#000"/><rect x="1" y="4" width="1" height="1" fill="#E0E0E0"/><rect x="2" y="4" width="1" height="1" fill="#fff"/><rect x="3" y="4" width="3" height="1" fill="#E0E0E0"/><rect x="6" y="4" width="1" height="1" fill="#fff"/><rect x="7" y="4" width="2" height="1" fill="#E0E0E0"/><rect x="9" y="4" width="1" height="1" fill="#000"/><rect x="0" y="5" width="1" height="1" fill="#000"/><rect x="1" y="5" width="1" height="1" fill="#fff"/><rect x="2" y="5" width="5" height="1" fill="#000"/><rect x="7" y="5" width="1" height="1" fill="#E0E0E0"/><rect x="8" y="5" width="2" height="1" fill="#000"/><rect x="0" y="6" width="1" height="1" fill="#000"/><rect x="1" y="6" width="8" height="1" fill="#E0E0E0"/><rect x="9" y="6" width="1" height="1" fill="#000"/><rect x="0" y="7" width="10" height="1" fill="#000"/></svg>
<div class="tb on" style="left:679px;top:76px"></div>
<svg width="10" height="12" viewBox="0 0 10 12" shape-rendering="crispEdges" style="left:685px;top:81px"><rect x="0" y="0" width="7" height="1" fill="#000"/><rect x="0" y="1" width="1" height="1" fill="#000"/><rect x="1" y="1" width="5" height="1" fill="#fff"/><rect x="6" y="1" width="2" height="1" fill="#000"/><rect x="0" y="2" width="1" height="1" fill="#000"/><rect x="1" y="2" width="5" height="1" fill="#fff"/><rect x="6" y="2" width="1" height="1" fill="#000"/><rect x="7" y="2" width="1" height="1" fill="#fff"/><rect x="8" y="2" width="1" height="1" fill="#000"/><rect x="0" y="3" width="1" height="1" fill="#000"/><rect x="1" y="3" width="5" height="1" fill="#fff"/><rect x="6" y="3" width="4" height="1" fill="#000"/><rect x="0" y="4" width="1" height="1" fill="#000"/><rect x="1" y="4" width="8" height="1" fill="#fff"/><rect x="9" y="4" width="1" height="1" fill="#000"/><rect x="0" y="5" width="1" height="1" fill="#000"/><rect x="1" y="5" width="8" height="1" fill="#fff"/><rect x="9" y="5" width="1" height="1" fill="#000"/><rect x="0" y="6" width="1" height="1" fill="#000"/><rect x="1" y="6" width="8" height="1" fill="#fff"/><rect x="9" y="6" width="1" height="1" fill="#000"/><rect x="0" y="7" width="1" height="1" fill="#000"/><rect x="1" y="7" width="8" height="1" fill="#fff"/><rect x="9" y="7" width="1" height="1" fill="#000"/><rect x="0" y="8" width="1" height="1" fill="#000"/><rect x="1" y="8" width="8" height="1" fill="#fff"/><rect x="9" y="8" width="1" height="1" fill="#000"/><rect x="0" y="9" width="1" height="1" fill="#000"/><rect x="1" y="9" width="8" height="1" fill="#fff"/><rect x="9" y="9" width="1" height="1" fill="#000"/><rect x="0" y="10" width="1" height="1" fill="#000"/><rect x="1" y="10" width="8" height="1" fill="#fff"/><rect x="9" y="10" width="1" height="1" fill="#000"/><rect x="0" y="11" width="10" height="1" fill="#000"/></svg>
<svg width="23" height="22" viewBox="0 0 23 22" style="left:680px;top:77px"><text x="6" y="10" font-family="'DejaVu Sans Condensed','Liberation Sans',sans-serif" font-weight="bold" font-size="7" fill="#0000F0">N</text></svg>
<svg width="10" height="8" viewBox="0 0 10 8" shape-rendering="crispEdges" style="left:689px;top:88px"><rect x="0" y="0" width="10" height="1" fill="#000080"/><rect x="0" y="1" width="10" height="1" fill="#000080"/><rect x="0" y="2" width="1" height="1" fill="#000"/><rect x="1" y="2" width="8" height="1" fill="#E0E0E0"/><rect x="9" y="2" width="1" height="1" fill="#000"/><rect x="0" y="3" width="1" height="1" fill="#000"/><rect x="1" y="3" width="1" height="1" fill="#fff"/><rect x="2" y="3" width="1" height="1" fill="#E0E0E0"/><rect x="3" y="3" width="2" height="1" fill="#000"/><rect x="5" y="3" width="1" height="1" fill="#E0E0E0"/><rect x="6" y="3" width="1" height="1" fill="#000"/><rect x="7" y="3" width="1" height="1" fill="#E0E0E0"/><rect x="8" y="3" width="2" height="1" fill="#000"/><rect x="0" y="4" width="1" height="1" fill="#000"/><rect x="1" y="4" width="1" height="1" fill="#E0E0E0"/><rect x="2" y="4" width="1" height="1" fill="#fff"/><rect x="3" y="4" width="3" height="1" fill="#E0E0E0"/><rect x="6" y="4" width="1" height="1" fill="#fff"/><rect x="7" y="4" width="2" height="1" fill="#E0E0E0"/><rect x="9" y="4" width="1" height="1" fill="#000"/><rect x="0" y="5" width="1" height="1" fill="#000"/><rect x="1" y="5" width="1" height="1" fill="#fff"/><rect x="2" y="5" width="5" height="1" fill="#000"/><rect x="7" y="5" width="1" height="1" fill="#E0E0E0"/><rect x="8" y="5" width="2" height="1" fill="#000"/><rect x="0" y="6" width="1" height="1" fill="#000"/><rect x="1" y="6" width="8" height="1" fill="#E0E0E0"/><rect x="9" y="6" width="1" height="1" fill="#000"/><rect x="0" y="7" width="10" height="1" fill="#000"/></svg>
<div class="tb on" style="left:702px;top:76px"></div>
<svg width="10" height="12" viewBox="0 0 10 12" shape-rendering="crispEdges" style="left:708px;top:81px"><rect x="0" y="0" width="7" height="1" fill="#000"/><rect x="0" y="1" width="1" height="1" fill="#000"/><rect x="1" y="1" width="5" height="1" fill="#fff"/><rect x="6" y="1" width="2" height="1" fill="#000"/><rect x="0" y="2" width="1" height="1" fill="#000"/><rect x="1" y="2" width="5" height="1" fill="#fff"/><rect x="6" y="2" width="1" height="1" fill="#000"/><rect x="7" y="2" width="1" height="1" fill="#fff"/><rect x="8" y="2" width="1" height="1" fill="#000"/><rect x="0" y="3" width="1" height="1" fill="#000"/><rect x="1" y="3" width="5" height="1" fill="#fff"/><rect x="6" y="3" width="4" height="1" fill="#000"/><rect x="0" y="4" width="1" height="1" fill="#000"/><rect x="1" y="4" width="8" height="1" fill="#fff"/><rect x="9" y="4" width="1" height="1" fill="#000"/><rect x="0" y="5" width="1" height="1" fill="#000"/><rect x="1" y="5" width="8" height="1" fill="#fff"/><rect x="9" y="5" width="1" height="1" fill="#000"/><rect x="0" y="6" width="1" height="1" fill="#000"/><rect x="1" y="6" width="8" height="1" fill="#fff"/><rect x="9" y="6" width="1" height="1" fill="#000"/><rect x="0" y="7" width="1" height="1" fill="#000"/><rect x="1" y="7" width="8" height="1" fill="#fff"/><rect x="9" y="7" width="1" height="1" fill="#000"/><rect x="0" y="8" width="1" height="1" fill="#000"/><rect x="1" y="8" width="8" height="1" fill="#fff"/><rect x="9" y="8" width="1" height="1" fill="#000"/><rect x="0" y="9" width="1" height="1" fill="#000"/><rect x="1" y="9" width="8" height="1" fill="#fff"/><rect x="9" y="9" width="1" height="1" fill="#000"/><rect x="0" y="10" width="1" height="1" fill="#000"/><rect x="1" y="10" width="8" height="1" fill="#fff"/><rect x="9" y="10" width="1" height="1" fill="#000"/><rect x="0" y="11" width="10" height="1" fill="#000"/></svg>
<svg width="23" height="22" viewBox="0 0 23 22" style="left:703px;top:77px"><text x="6" y="10" font-family="'DejaVu Sans Condensed','Liberation Sans',sans-serif" font-weight="bold" font-size="7" fill="#0000F0">N</text></svg>
<svg width="10" height="8" viewBox="0 0 10 8" shape-rendering="crispEdges" style="left:712px;top:88px"><rect x="0" y="0" width="10" height="1" fill="#000080"/><rect x="0" y="1" width="10" height="1" fill="#000080"/><rect x="0" y="2" width="1" height="1" fill="#000"/><rect x="1" y="2" width="8" height="1" fill="#E0E0E0"/><rect x="9" y="2" width="1" height="1" fill="#000"/><rect x="0" y="3" width="1" height="1" fill="#000"/><rect x="1" y="3" width="1" height="1" fill="#fff"/><rect x="2" y="3" width="1" height="1" fill="#E0E0E0"/><rect x="3" y="3" width="2" height="1" fill="#000"/><rect x="5" y="3" width="1" height="1" fill="#E0E0E0"/><rect x="6" y="3" width="1" height="1" fill="#000"/><rect x="7" y="3" width="1" height="1" fill="#E0E0E0"/><rect x="8" y="3" width="2" height="1" fill="#000"/><rect x="0" y="4" width="1" height="1" fill="#000"/><rect x="1" y="4" width="1" height="1" fill="#E0E0E0"/><rect x="2" y="4" width="1" height="1" fill="#fff"/><rect x="3" y="4" width="3" height="1" fill="#E0E0E0"/><rect x="6" y="4" width="1" height="1" fill="#fff"/><rect x="7" y="4" width="2" height="1" fill="#E0E0E0"/><rect x="9" y="4" width="1" height="1" fill="#000"/><rect x="0" y="5" width="1" height="1" fill="#000"/><rect x="1" y="5" width="1" height="1" fill="#fff"/><rect x="2" y="5" width="5" height="1" fill="#000"/><rect x="7" y="5" width="1" height="1" fill="#E0E0E0"/><rect x="8" y="5" width="2" height="1" fill="#000"/><rect x="0" y="6" width="1" height="1" fill="#000"/><rect x="1" y="6" width="8" height="1" fill="#E0E0E0"/><rect x="9" y="6" width="1" height="1" fill="#000"/><rect x="0" y="7" width="10" height="1" fill="#000"/></svg>
<svg width="8" height="8" viewBox="0 0 8 8" shape-rendering="crispEdges" style="left:706px;top:88px"><rect x="4" y="0" width="2" height="1" fill="#000"/><rect x="1" y="1" width="2" height="1" fill="#000"/><rect x="4" y="1" width="2" height="1" fill="#C0C0C0"/><rect x="7" y="1" width="1" height="1" fill="#000"/><rect x="1" y="2" width="1" height="1" fill="#000"/><rect x="2" y="2" width="6" height="1" fill="#C0C0C0"/><rect x="2" y="3" width="2" height="1" fill="#C0C0C0"/><rect x="4" y="3" width="1" height="1" fill="#E0E0E0"/><rect x="5" y="3" width="3" height="1" fill="#C0C0C0"/><rect x="0" y="4" width="1" height="1" fill="#000"/><rect x="1" y="4" width="2" height="1" fill="#C0C0C0"/><rect x="3" y="4" width="1" height="1" fill="#E0E0E0"/><rect x="4" y="4" width="2" height="1" fill="#000"/><rect x="6" y="4" width="2" height="1" fill="#C0C0C0"/><rect x="0" y="5" width="1" height="1" fill="#000"/><rect x="1" y="5" width="3" height="1" fill="#C0C0C0"/><rect x="4" y="5" width="2" height="1" fill="#000"/><rect x="6" y="5" width="2" height="1" fill="#C0C0C0"/><rect x="2" y="6" width="6" height="1" fill="#C0C0C0"/><rect x="1" y="7" width="1" height="1" fill="#000"/><rect x="2" y="7" width="6" height="1" fill="#C0C0C0"/></svg>
<div class="tb on" style="left:725px;top:76px"></div>
<svg width="10" height="12" viewBox="0 0 10 12" shape-rendering="crispEdges" style="left:731px;top:81px"><rect x="0" y="0" width="7" height="1" fill="#000"/><rect x="0" y="1" width="1" height="1" fill="#000"/><rect x="1" y="1" width="5" height="1" fill="#fff"/><rect x="6" y="1" width="2" height="1" fill="#000"/><rect x="0" y="2" width="1" height="1" fill="#000"/><rect x="1" y="2" width="5" height="1" fill="#fff"/><rect x="6" y="2" width="1" height="1" fill="#000"/><rect x="7" y="2" width="1" height="1" fill="#fff"/><rect x="8" y="2" width="1" height="1" fill="#000"/><rect x="0" y="3" width="1" height="1" fill="#000"/><rect x="1" y="3" width="5" height="1" fill="#fff"/><rect x="6" y="3" width="4" height="1" fill="#000"/><rect x="0" y="4" width="1" height="1" fill="#000"/><rect x="1" y="4" width="8" height="1" fill="#fff"/><rect x="9" y="4" width="1" height="1" fill="#000"/><rect x="0" y="5" width="1" height="1" fill="#000"/><rect x="1" y="5" width="8" height="1" fill="#fff"/><rect x="9" y="5" width="1" height="1" fill="#000"/><rect x="0" y="6" width="1" height="1" fill="#000"/><rect x="1" y="6" width="8" height="1" fill="#fff"/><rect x="9" y="6" width="1" height="1" fill="#000"/><rect x="0" y="7" width="1" height="1" fill="#000"/><rect x="1" y="7" width="8" height="1" fill="#fff"/><rect x="9" y="7" width="1" height="1" fill="#000"/><rect x="0" y="8" width="1" height="1" fill="#000"/><rect x="1" y="8" width="8" height="1" fill="#fff"/><rect x="9" y="8" width="1" height="1" fill="#000"/><rect x="0" y="9" width="1" height="1" fill="#000"/><rect x="1" y="9" width="8" height="1" fill="#fff"/><rect x="9" y="9" width="1" height="1" fill="#000"/><rect x="0" y="10" width="1" height="1" fill="#000"/><rect x="1" y="10" width="8" height="1" fill="#fff"/><rect x="9" y="10" width="1" height="1" fill="#000"/><rect x="0" y="11" width="10" height="1" fill="#000"/></svg>
<svg width="23" height="22" viewBox="0 0 23 22" style="left:726px;top:77px"><text x="6.2" y="10" font-family="'Liberation Mono',monospace" font-weight="bold" font-size="7.5" fill="#0000F0">I</text></svg>
<svg width="10" height="8" viewBox="0 0 10 8" shape-rendering="crispEdges" style="left:735px;top:88px"><rect x="0" y="0" width="10" height="1" fill="#000080"/><rect x="0" y="1" width="10" height="1" fill="#000080"/><rect x="0" y="2" width="1" height="1" fill="#000"/><rect x="1" y="2" width="8" height="1" fill="#E0E0E0"/><rect x="9" y="2" width="1" height="1" fill="#000"/><rect x="0" y="3" width="1" height="1" fill="#000"/><rect x="1" y="3" width="1" height="1" fill="#fff"/><rect x="2" y="3" width="1" height="1" fill="#E0E0E0"/><rect x="3" y="3" width="2" height="1" fill="#000"/><rect x="5" y="3" width="1" height="1" fill="#E0E0E0"/><rect x="6" y="3" width="1" height="1" fill="#000"/><rect x="7" y="3" width="1" height="1" fill="#E0E0E0"/><rect x="8" y="3" width="2" height="1" fill="#000"/><rect x="0" y="4" width="1" height="1" fill="#000"/><rect x="1" y="4" width="1" height="1" fill="#E0E0E0"/><rect x="2" y="4" width="1" height="1" fill="#fff"/><rect x="3" y="4" width="3" height="1" fill="#E0E0E0"/><rect x="6" y="4" width="1" height="1" fill="#fff"/><rect x="7" y="4" width="2" height="1" fill="#E0E0E0"/><rect x="9" y="4" width="1" height="1" fill="#000"/><rect x="0" y="5" width="1" height="1" fill="#000"/><rect x="1" y="5" width="1" height="1" fill="#fff"/><rect x="2" y="5" width="5" height="1" fill="#000"/><rect x="7" y="5" width="1" height="1" fill="#E0E0E0"/><rect x="8" y="5" width="2" height="1" fill="#000"/><rect x="0" y="6" width="1" height="1" fill="#000"/><rect x="1" y="6" width="8" height="1" fill="#E0E0E0"/><rect x="9" y="6" width="1" height="1" fill="#000"/><rect x="0" y="7" width="10" height="1" fill="#000"/></svg>
<div class="tb on" style="left:748px;top:76px"></div>
<svg width="10" height="12" viewBox="0 0 10 12" shape-rendering="crispEdges" style="left:754px;top:81px"><rect x="0" y="0" width="7" height="1" fill="#000"/><rect x="0" y="1" width="1" height="1" fill="#000"/><rect x="1" y="1" width="5" height="1" fill="#fff"/><rect x="6" y="1" width="2" height="1" fill="#000"/><rect x="0" y="2" width="1" height="1" fill="#000"/><rect x="1" y="2" width="5" height="1" fill="#fff"/><rect x="6" y="2" width="1" height="1" fill="#000"/><rect x="7" y="2" width="1" height="1" fill="#fff"/><rect x="8" y="2" width="1" height="1" fill="#000"/><rect x="0" y="3" width="1" height="1" fill="#000"/><rect x="1" y="3" width="5" height="1" fill="#fff"/><rect x="6" y="3" width="4" height="1" fill="#000"/><rect x="0" y="4" width="1" height="1" fill="#000"/><rect x="1" y="4" width="8" height="1" fill="#fff"/><rect x="9" y="4" width="1" height="1" fill="#000"/><rect x="0" y="5" width="1" height="1" fill="#000"/><rect x="1" y="5" width="8" height="1" fill="#fff"/><rect x="9" y="5" width="1" height="1" fill="#000"/><rect x="0" y="6" width="1" height="1" fill="#000"/><rect x="1" y="6" width="8" height="1" fill="#fff"/><rect x="9" y="6" width="1" height="1" fill="#000"/><rect x="0" y="7" width="1" height="1" fill="#000"/><rect x="1" y="7" width="8" height="1" fill="#fff"/><rect x="9" y="7" width="1" height="1" fill="#000"/><rect x="0" y="8" width="1" height="1" fill="#000"/><rect x="1" y="8" width="8" height="1" fill="#fff"/><rect x="9" y="8" width="1" height="1" fill="#000"/><rect x="0" y="9" width="1" height="1" fill="#000"/><rect x="1" y="9" width="8" height="1" fill="#fff"/><rect x="9" y="9" width="1" height="1" fill="#000"/><rect x="0" y="10" width="1" height="1" fill="#000"/><rect x="1" y="10" width="8" height="1" fill="#fff"/><rect x="9" y="10" width="1" height="1" fill="#000"/><rect x="0" y="11" width="10" height="1" fill="#000"/></svg>
<svg width="23" height="22" viewBox="0 0 23 22" style="left:749px;top:77px"><text x="6" y="10" font-family="'DejaVu Sans Condensed','Liberation Sans',sans-serif" font-weight="bold" font-size="7" fill="#0000F0">A</text></svg>
<svg width="10" height="8" viewBox="0 0 10 8" shape-rendering="crispEdges" style="left:758px;top:88px"><rect x="0" y="0" width="10" height="1" fill="#000080"/><rect x="0" y="1" width="10" height="1" fill="#000080"/><rect x="0" y="2" width="1" height="1" fill="#000"/><rect x="1" y="2" width="8" height="1" fill="#E0E0E0"/><rect x="9" y="2" width="1" height="1" fill="#000"/><rect x="0" y="3" width="1" height="1" fill="#000"/><rect x="1" y="3" width="1" height="1" fill="#fff"/><rect x="2" y="3" width="1" height="1" fill="#E0E0E0"/><rect x="3" y="3" width="2" height="1" fill="#000"/><rect x="5" y="3" width="1" height="1" fill="#E0E0E0"/><rect x="6" y="3" width="1" height="1" fill="#000"/><rect x="7" y="3" width="1" height="1" fill="#E0E0E0"/><rect x="8" y="3" width="2" height="1" fill="#000"/><rect x="0" y="4" width="1" height="1" fill="#000"/><rect x="1" y="4" width="1" height="1" fill="#E0E0E0"/><rect x="2" y="4" width="1" height="1" fill="#fff"/><rect x="3" y="4" width="3" height="1" fill="#E0E0E0"/><rect x="6" y="4" width="1" height="1" fill="#fff"/><rect x="7" y="4" width="2" height="1" fill="#E0E0E0"/><rect x="9" y="4" width="1" height="1" fill="#000"/><rect x="0" y="5" width="1" height="1" fill="#000"/><rect x="1" y="5" width="1" height="1" fill="#fff"/><rect x="2" y="5" width="5" height="1" fill="#000"/><rect x="7" y="5" width="1" height="1" fill="#E0E0E0"/><rect x="8" y="5" width="2" height="1" fill="#000"/><rect x="0" y="6" width="1" height="1" fill="#000"/><rect x="1" y="6" width="8" height="1" fill="#E0E0E0"/><rect x="9" y="6" width="1" height="1" fill="#000"/><rect x="0" y="7" width="10" height="1" fill="#000"/></svg>
<div class="hdr" style="left:4px;top:100px;width:255px">Filter</div>
<div style="left:4px;top:117px;width:255px;height:173px;background:#fff;border:1px solid #ACA899;border-right:0;border-bottom-color:#fff"></div>
<div style="left:5px;top:118px;width:254px;height:171px;background:#fff;border:1px solid #716F64;border-right:0;border-bottom-color:#F1EFE2"></div>
<div style="left:6px;top:119px;width:236px;height:169px;overflow:hidden">
<div class="t b" style="left:10px;top:16px;letter-spacing:-0.09px">For objects of type <a>Cobol File, PB</a></div>
<div class="t b" style="left:30px;top:29px;letter-spacing:-0.22px"><a>Application File, ECL File, JCL File,</a></div>
<div class="t b" style="left:30px;top:42px;letter-spacing:-0.21px"><a>WFL File, PCT File, System</a></div>
<div class="t b" style="left:30px;top:55px;letter-spacing:-0.07px"><a>Definition File, VALTAB File</a></div>
<div class="t b" style="left:10px;top:72px;letter-spacing:0.12px">such that Name like <a>"ORD*"</a></div>
<div class="t b" style="left:10px;top:104px;letter-spacing:0px"><span style="position:static;font-size:14px;line-height:13px">&#8226;</span></div>
<div class="t b" style="left:26px;top:104px;letter-spacing:0px"><a>Add Matched</a> to Startup Object List</div>
<div class="t b" style="left:10px;top:117px;letter-spacing:0px"><span style="position:static;font-size:14px;line-height:13px">&#8226;</span></div>
<div class="t b" style="left:26px;top:117px;letter-spacing:0.12px"><a>Remove Matched</a> from Startup</div>
<div class="t b" style="left:10px;top:130px;letter-spacing:0px">Object List</div>
<div class="t b" style="left:10px;top:162px;letter-spacing:0px"><a>Add All</a> Appropriate Objects to</div>
</div>
<div class="sbv" style="left:242px;top:119px;height:169px"></div><div class="sbtn" style="left:242px;top:119px"><i></i><svg width="17" height="17" viewBox="0 0 17 17" style="left:0;top:0"><path d="M4.8 10.4L8.5 6.6L12.2 10.4" fill="none" stroke="#4D6185" stroke-width="2.4"/></svg></div><div class="sbtn" style="left:242px;top:271px"><i></i><svg width="17" height="17" viewBox="0 0 17 17" style="left:0;top:0"><path d="M4.8 6.8L8.5 10.6L12.2 6.8" fill="none" stroke="#4D6185" stroke-width="2.4"/></svg></div><div style="left:242px;top:136px;width:17px;height:104px"><div class="thumb"></div><div style="left:5px;top:49px;width:7px;height:1px;background:#EEF4FE"></div><div style="left:6px;top:50px;width:7px;height:1px;background:#8CB0F8"></div><div style="left:5px;top:51px;width:7px;height:1px;background:#EEF4FE"></div><div style="left:6px;top:52px;width:7px;height:1px;background:#8CB0F8"></div><div style="left:5px;top:53px;width:7px;height:1px;background:#EEF4FE"></div><div style="left:6px;top:54px;width:7px;height:1px;background:#8CB0F8"></div><div style="left:5px;top:55px;width:7px;height:1px;background:#EEF4FE"></div><div style="left:6px;top:56px;width:7px;height:1px;background:#8CB0F8"></div></div>
<div class="hdr" style="left:4px;top:295px;width:255px">Startup Objects</div>
<div style="left:4px;top:312px;width:255px;height:174px;background:#fff;border:1px solid #ACA899;border-right:0;border-bottom-color:#fff"></div>
<div style="left:5px;top:313px;width:254px;height:172px;background:#fff;border:1px solid #716F64;border-right:0;border-bottom:0"></div>
<div class="colh" style="left:6px;top:314px;width:164px;height:17px;padding-left:4px">Name</div>
<div class="colh" style="left:170px;top:314px;width:89px;height:17px;padding-left:24px;border-right:0">Entity Type</div>
<svg width="9" height="8" viewBox="0 0 9 8" style="left:175px;top:319px"><path d="M.5 .5H8.5L4.5 7.5Z" fill="#D8D5C6" stroke="#A19D8C" stroke-width=".9"/><path d="M8.5 .5L4.5 7.5" stroke="#fff" stroke-width="1"/></svg>
<div style="left:6px;top:348px;width:253px;height:1px;background:#ECE9D8"></div>
<div style="left:6px;top:365px;width:253px;height:1px;background:#ECE9D8"></div>
<div style="left:6px;top:382px;width:253px;height:1px;background:#ECE9D8"></div>
<div style="left:6px;top:399px;width:253px;height:1px;background:#ECE9D8"></div>
<div style="left:6px;top:416px;width:253px;height:1px;background:#ECE9D8"></div>
<div style="left:6px;top:433px;width:253px;height:1px;background:#ECE9D8"></div>
<div style="left:6px;top:450px;width:253px;height:1px;background:#ECE9D8"></div>
<div style="left:6px;top:467px;width:253px;height:1px;background:#ECE9D8"></div>
<div style="left:169px;top:331px;width:1px;height:137px;background:#ECE9D8"></div>
<div class="sbh" style="left:6px;top:468px;width:253px"></div><div class="sbtn" style="left:6px;top:468px"><i></i><svg width="17" height="17" viewBox="0 0 17 17" style="left:0;top:0"><path d="M10.4 4.8L6.6 8.5L10.4 12.2" fill="none" stroke="#4D6185" stroke-width="2.4"/></svg></div><div class="sbtn" style="left:242px;top:468px"><i></i><svg width="17" height="17" viewBox="0 0 17 17" style="left:0;top:0"><path d="M6.8 4.8L10.6 8.5L6.8 12.2" fill="none" stroke="#4D6185" stroke-width="2.4"/></svg></div><div style="left:23px;top:468px;height:17px;width:155px"><div class="thumb"></div><div style="top:5px;left:74px;height:7px;width:1px;background:#EEF4FE"></div><div style="top:6px;left:75px;height:7px;width:1px;background:#8CB0F8"></div><div style="top:5px;left:76px;height:7px;width:1px;background:#EEF4FE"></div><div style="top:6px;left:77px;height:7px;width:1px;background:#8CB0F8"></div><div style="top:5px;left:78px;height:7px;width:1px;background:#EEF4FE"></div><div style="top:6px;left:79px;height:7px;width:1px;background:#8CB0F8"></div><div style="top:5px;left:80px;height:7px;width:1px;background:#EEF4FE"></div><div style="top:6px;left:81px;height:7px;width:1px;background:#8CB0F8"></div></div>
<div class="hdr" style="left:4px;top:492px;width:255px">Find</div>
<div style="left:4px;top:509px;width:255px;height:88px;background:#fff;border:1px solid #ACA899;border-right:0;border-bottom-color:#fff"></div>
<div style="left:5px;top:510px;width:254px;height:86px;background:#fff;border:1px solid #716F64;border-right:0;border-bottom-color:#ECE9D8"></div>
<div class="t b" style="left:16px;top:527px;">Find legacy objects that are <a>not</a></div>
<div class="t b" style="left:36px;top:540px;letter-spacing:.11px"><a>reachable</a> from checked startups</div>
<div class="t b" style="left:16px;top:584px;letter-spacing:.14px"><a style="text-decoration:none">Start Search</a></div>
<div class="sbv" style="left:242px;top:511px;height:84px"></div><div class="sbtn" style="left:242px;top:511px"><i></i><svg width="17" height="17" viewBox="0 0 17 17" style="left:0;top:0"><path d="M4.8 10.4L8.5 6.6L12.2 10.4" fill="none" stroke="#4D6185" stroke-width="2.4"/></svg></div><div class="sbtn" style="left:242px;top:578px"><i></i><svg width="17" height="17" viewBox="0 0 17 17" style="left:0;top:0"><path d="M4.8 6.8L8.5 10.6L12.2 6.8" fill="none" stroke="#4D6185" stroke-width="2.4"/></svg></div><div style="left:242px;top:528px;width:17px;height:42px"><div class="thumb"></div><div style="left:5px;top:18px;width:7px;height:1px;background:#EEF4FE"></div><div style="left:6px;top:19px;width:7px;height:1px;background:#8CB0F8"></div><div style="left:5px;top:20px;width:7px;height:1px;background:#EEF4FE"></div><div style="left:6px;top:21px;width:7px;height:1px;background:#8CB0F8"></div><div style="left:5px;top:22px;width:7px;height:1px;background:#EEF4FE"></div><div style="left:6px;top:23px;width:7px;height:1px;background:#8CB0F8"></div><div style="left:5px;top:24px;width:7px;height:1px;background:#EEF4FE"></div><div style="left:6px;top:25px;width:7px;height:1px;background:#8CB0F8"></div></div>
<div class="hdr act" style="left:265px;top:100px;width:507px">Found Objects - 39 item(s).</div>
<div style="left:265px;top:117px;width:507px;height:363px;background:#fff;border:1px solid #ACA899;border-right-color:#fff;border-bottom-color:#fff"></div>
<div style="left:266px;top:118px;width:505px;height:361px;background:#fff;border:1px solid #716F64;border-right-color:#F1EFE2;border-bottom-color:#F1EFE2"></div>
<div style="left:267px;top:119px;width:487px;height:343px;overflow:hidden;background:#fff">
<div class="colh" style="left:0;top:0;width:163px;padding-left:26px">Name</div>
<div class="colh" style="left:163px;top:0;width:163px;padding-left:4px">Entity Type</div>
<div class="colh" style="left:326px;top:0;width:161px;padding-left:4px;border-right:0">Source</div>
<svg width="9" height="8" viewBox="0 0 9 8" style="left:7px;top:5px"><path d="M.5 6.5H7.5L4 .5Z" fill="#D8D5C6" stroke="#A19D8C" stroke-width=".9"/><path d="M7.5 6.5H.5" stroke="#fff" stroke-width="1"/></svg>
<div class="row" style="top:18px"><svg width="16" height="16" viewBox="0 0 16 16" shape-rendering="crispEdges" style="left:3px;top:0px;"><path d="M1.5 .5H7.5L10.5 3.5V11.5H1.5Z" fill="#fff" stroke="#000"/><path d="M7.5 .5V3.5H10.5" fill="none" stroke="#000"/><path d="M7.5 6.5H12.5L14.5 8.5V14.5H7.5Z" fill="#fff" stroke="#000"/><path d="M7.5 14V6.5H12" fill="none" stroke="#808080"/><path d="M12.5 7V8.5H14" fill="none" stroke="#808080"/><path d="M11 1.5H13M13.5 1V6M12 4.5H15" stroke="#0000A0" fill="none"/></svg><div class="cell" style="left:20px;width:142px;letter-spacing:.1px;">ATTR.CPY</div><div class="cell" style="left:169px;width:156px;letter-spacing:-.1px;">Copybook File</div><div class="cell" style="left:331px;width:156px;">Sources\Copybook\ATTR.CPY</div></div>
<div class="row" style="top:35px"><svg width="16" height="16" viewBox="0 0 16 16" shape-rendering="crispEdges" style="left:3px;top:0px;"><path d="M1.5 .5H7.5L10.5 3.5V11.5H1.5Z" fill="#fff" stroke="#000"/><path d="M7.5 .5V3.5H10.5" fill="none" stroke="#000"/><path d="M7.5 6.5H12.5L14.5 8.5V14.5H7.5Z" fill="#fff" stroke="#000"/><path d="M7.5 14V6.5H12" fill="none" stroke="#808080"/><path d="M12.5 7V8.5H14" fill="none" stroke="#808080"/><path d="M11 1.5H13M13.5 1V6M12 4.5H15" stroke="#0000A0" fill="none"/></svg><div class="cell" style="left:20px;width:142px;letter-spacing:-.22px;">ATTR-CheckDigit$compl-0....</div><div class="cell" style="left:169px;width:156px;letter-spacing:-.1px;">Copybook File</div><div class="cell" style="left:331px;width:156px;">Sources\Copybook\ATTR-CheckDigit$compl-0.CPY</div></div>
<div class="row" style="top:52px"><svg width="16" height="16" viewBox="0 0 16 16" shape-rendering="crispEdges" style="left:3px;top:0px;"><path d="M1.5 .5H7.5L10.5 3.5V11.5H1.5Z" fill="#fff" stroke="#000"/><path d="M7.5 .5V3.5H10.5" fill="none" stroke="#000"/><path d="M7.5 6.5H12.5L14.5 8.5V14.5H7.5Z" fill="#fff" stroke="#000"/><path d="M7.5 14V6.5H12" fill="none" stroke="#808080"/><path d="M12.5 7V8.5H14" fill="none" stroke="#808080"/><path d="M11 1.5H13M13.5 1V6M12 4.5H15" stroke="#0000A0" fill="none"/></svg><div class="cell" style="left:20px;width:142px;">ATTR-DCE1-0.CPY</div><div class="cell" style="left:169px;width:156px;letter-spacing:-.1px;">Copybook File</div><div class="cell" style="left:331px;width:156px;">Sources\Copybook\ATTR-DCE1-0.CPY</div></div>
<div class="row" style="top:69px"><svg width="16" height="16" viewBox="0 0 16 16" shape-rendering="crispEdges" style="left:3px;top:0px;"><path d="M1.5 .5H7.5L10.5 3.5V11.5H1.5Z" fill="#fff" stroke="#000"/><path d="M7.5 .5V3.5H10.5" fill="none" stroke="#000"/><path d="M7.5 6.5H12.5L14.5 8.5V14.5H7.5Z" fill="#fff" stroke="#000"/><path d="M7.5 14V6.5H12" fill="none" stroke="#808080"/><path d="M12.5 7V8.5H14" fill="none" stroke="#808080"/><path d="M11 1.5H13M13.5 1V6M12 4.5H15" stroke="#0000A0" fill="none"/></svg><div class="cell" style="left:20px;width:142px;">ATTR-DCE2-0.CPY</div><div class="cell" style="left:169px;width:156px;letter-spacing:-.1px;">Copybook File</div><div class="cell" style="left:331px;width:156px;">Sources\Copybook\ATTR-DCE2-0.CPY</div></div>
<div class="row" style="top:86px"><svg width="16" height="16" viewBox="0 0 16 16" shape-rendering="crispEdges" style="left:3px;top:0px;"><path d="M1.5 .5H7.5L10.5 3.5V11.5H1.5Z" fill="#fff" stroke="#000"/><path d="M7.5 .5V3.5H10.5" fill="none" stroke="#000"/><path d="M7.5 6.5H12.5L14.5 8.5V14.5H7.5Z" fill="#fff" stroke="#000"/><path d="M7.5 14V6.5H12" fill="none" stroke="#808080"/><path d="M12.5 7V8.5H14" fill="none" stroke="#808080"/><path d="M11 1.5H13M13.5 1V6M12 4.5H15" stroke="#0000A0" fill="none"/></svg><div class="cell" style="left:20px;width:142px;">ATTR-DCE3-0.CPY</div><div class="cell" style="left:169px;width:156px;letter-spacing:-.1px;">Copybook File</div><div class="cell" style="left:331px;width:156px;">Sources\Copybook\ATTR-DCE3-0.CPY</div></div>
<div class="row" style="top:103px"><svg width="16" height="16" viewBox="0 0 16 16" shape-rendering="crispEdges" style="left:3px;top:0px;"><path d="M1.5 .5H7.5L10.5 3.5V11.5H1.5Z" fill="#fff" stroke="#000"/><path d="M7.5 .5V3.5H10.5" fill="none" stroke="#000"/><path d="M7.5 6.5H12.5L14.5 8.5V14.5H7.5Z" fill="#fff" stroke="#000"/><path d="M7.5 14V6.5H12" fill="none" stroke="#808080"/><path d="M12.5 7V8.5H14" fill="none" stroke="#808080"/><path d="M11 1.5H13M13.5 1V6M12 4.5H15" stroke="#0000A0" fill="none"/></svg><div class="cell" style="left:20px;width:142px;letter-spacing:.1px;">CATALOG.CPY</div><div class="cell" style="left:169px;width:156px;letter-spacing:-.1px;">Copybook File</div><div class="cell" style="left:331px;width:156px;">Sources\Copybook\CATALOG.CPY</div></div>
<div class="row" style="top:120px"><svg width="16" height="16" viewBox="0 0 16 16" shape-rendering="crispEdges" style="left:3px;top:0px;"><path d="M1.5 .5H7.5L10.5 3.5V11.5H1.5Z" fill="#fff" stroke="#000"/><path d="M7.5 .5V3.5H10.5" fill="none" stroke="#000"/><path d="M7.5 6.5H12.5L14.5 8.5V14.5H7.5Z" fill="#fff" stroke="#000"/><path d="M7.5 14V6.5H12" fill="none" stroke="#808080"/><path d="M12.5 7V8.5H14" fill="none" stroke="#808080"/><path d="M11 1.5H13M13.5 1V6M12 4.5H15" stroke="#0000A0" fill="none"/></svg><div class="cell" style="left:20px;width:142px;">CATALOG-DCE4-0.CPY</div><div class="cell" style="left:169px;width:156px;letter-spacing:-.1px;">Copybook File</div><div class="cell" style="left:331px;width:156px;">Sources\Copybook\CATALOG-DCE4-0.CPY</div></div>
<div class="row" style="top:137px"><svg width="16" height="16" viewBox="0 0 16 16" shape-rendering="crispEdges" style="left:3px;top:0px;"><rect x="1.5" y="1.5" width="11" height="10" fill="#fff" stroke="#000"/><rect x="2" y="2" width="10" height="2" fill="#FFFF00"/><path d="M2 4.5H12M4.5 2V11" stroke="#000"/><g shape-rendering="auto"><path d="M7.3 7.6V12.4C7.3 14.6 13.7 14.6 13.7 12.4V7.6Z" fill="#B0B0B0" stroke="#000" stroke-width=".9"/><path d="M7.6 8V12.3C8 13.2 9 13.6 9.4 13.6V8.5Z" fill="#00E8F0"/><path d="M12 8.5V13.5C13 13.3 13.5 12.8 13.5 12.3V8Z" fill="#101010"/><ellipse cx="10.5" cy="7.6" rx="3.2" ry="1.5" fill="#00FFFF" stroke="#806060" stroke-width=".5"/></g></svg><div class="cell" style="left:20px;width:142px;letter-spacing:.1px;">CICS.FCT</div><div class="cell" style="left:169px;width:156px;letter-spacing:-.1px;">FCT File</div><div class="cell" style="left:331px;width:156px;">Sources\FCT\CICS.FCT</div></div>
<div class="row" style="top:154px"><svg width="16" height="16" viewBox="0 0 16 16" shape-rendering="crispEdges" style="left:3px;top:0px;"><path d="M1.5 .5H7.5L10.5 3.5V11.5H1.5Z" fill="#fff" stroke="#000"/><path d="M7.5 .5V3.5H10.5" fill="none" stroke="#000"/><path d="M7.5 6.5H12.5L14.5 8.5V14.5H7.5Z" fill="#fff" stroke="#000"/><path d="M7.5 14V6.5H12" fill="none" stroke="#808080"/><path d="M12.5 7V8.5H14" fill="none" stroke="#808080"/><path d="M11 1.5H13M13.5 1V6M12 4.5H15" stroke="#0000A0" fill="none"/></svg><div class="cell" style="left:20px;width:142px;letter-spacing:.1px;">CUSTMAS.CPY</div><div class="cell" style="left:169px;width:156px;letter-spacing:-.1px;">Copybook File</div><div class="cell" style="left:331px;width:156px;">Sources\Copybook\CUSTMAS.CPY</div></div>
<div class="row" style="top:171px"><svg width="16" height="16" viewBox="0 0 16 16" shape-rendering="crispEdges" style="left:3px;top:0px;"><path d="M1.5 .5H7.5L10.5 3.5V11.5H1.5Z" fill="#fff" stroke="#000"/><path d="M7.5 .5V3.5H10.5" fill="none" stroke="#000"/><path d="M7.5 6.5H12.5L14.5 8.5V14.5H7.5Z" fill="#fff" stroke="#000"/><path d="M7.5 14V6.5H12" fill="none" stroke="#808080"/><path d="M12.5 7V8.5H14" fill="none" stroke="#808080"/><path d="M11 1.5H13M13.5 1V6M12 4.5H15" stroke="#0000A0" fill="none"/></svg><div class="cell" style="left:20px;width:142px;letter-spacing:-.22px;">CUSTMAS-CheckDigit$com...</div><div class="cell" style="left:169px;width:156px;letter-spacing:-.1px;">Copybook File</div><div class="cell" style="left:331px;width:156px;">Sources\Copybook\CUSTMAS-CheckDigit$compl-0.CPY</div></div>
<div class="row" style="top:188px"><div style="left:18px;top:0;width:470px;height:16px;background:#316AC5"></div><div style="left:18px;top:0;width:470px;height:16px;border:1px dotted #E8B060"></div><svg width="16" height="16" viewBox="0 0 16 16" shape-rendering="crispEdges" style="left:3px;top:0px;"><path d="M1.5 .5H7.5L10.5 3.5V11.5H1.5Z" fill="#fff" stroke="#000"/><path d="M7.5 .5V3.5H10.5" fill="none" stroke="#000"/><path d="M7.5 6.5H12.5L14.5 8.5V14.5H7.5Z" fill="#fff" stroke="#000"/><path d="M7.5 14V6.5H12" fill="none" stroke="#808080"/><path d="M12.5 7V8.5H14" fill="none" stroke="#808080"/><path d="M11 1.5H13M13.5 1V6M12 4.5H15" stroke="#0000A0" fill="none"/></svg><svg width="16" height="16" viewBox="0 0 16 16" shape-rendering="crispEdges" style="left:3px;top:0px;"><defs><pattern id="dth" width="2" height="2" patternUnits="userSpaceOnUse"><rect width="1" height="1" fill="#316AC5"/><rect x="1" y="1" width="1" height="1" fill="#316AC5"/></pattern></defs><path d="M1 0H8L11 3V6H13L15 8V15H7V12H1Z" fill="url(#dth)"/><path d="M11 1H14V2H15V4H16V5H15V6H13V5H12V4H13V2H11Z" fill="url(#dth)"/></svg><div class="cell" style="left:20px;width:142px;color:#fff;">CUSTMAS-DCE1-0.CPY</div><div class="cell" style="left:169px;width:156px;letter-spacing:-.1px;color:#fff;">Copybook File</div><div class="cell" style="left:331px;width:156px;color:#fff;">Sources\Copybook\CUSTMAS-DCE1-0.CPY</div></div>
<div class="row" style="top:205px"><svg width="16" height="16" viewBox="0 0 16 16" shape-rendering="crispEdges" style="left:3px;top:0px;"><path d="M1.5 .5H7.5L10.5 3.5V11.5H1.5Z" fill="#fff" stroke="#000"/><path d="M7.5 .5V3.5H10.5" fill="none" stroke="#000"/><path d="M7.5 6.5H12.5L14.5 8.5V14.5H7.5Z" fill="#fff" stroke="#000"/><path d="M7.5 14V6.5H12" fill="none" stroke="#808080"/><path d="M12.5 7V8.5H14" fill="none" stroke="#808080"/><path d="M11 1.5H13M13.5 1V6M12 4.5H15" stroke="#0000A0" fill="none"/></svg><div class="cell" style="left:20px;width:142px;">CUSTMAS-DCE2-0.CPY</div><div class="cell" style="left:169px;width:156px;letter-spacing:-.1px;">Copybook File</div><div class="cell" style="left:331px;width:156px;">Sources\Copybook\CUSTMAS-DCE2-0.CPY</div></div>
<div class="row" style="top:222px"><svg width="16" height="16" viewBox="0 0 16 16" shape-rendering="crispEdges" style="left:3px;top:0px;"><path d="M1.5 .5H7.5L10.5 3.5V11.5H1.5Z" fill="#fff" stroke="#000"/><path d="M7.5 .5V3.5H10.5" fill="none" stroke="#000"/><path d="M7.5 6.5H12.5L14.5 8.5V14.5H7.5Z" fill="#fff" stroke="#000"/><path d="M7.5 14V6.5H12" fill="none" stroke="#808080"/><path d="M12.5 7V8.5H14" fill="none" stroke="#808080"/><path d="M11 1.5H13M13.5 1V6M12 4.5H15" stroke="#0000A0" fill="none"/></svg><div class="cell" style="left:20px;width:142px;">dfhaid.cpy</div><div class="cell" style="left:169px;width:156px;letter-spacing:-.1px;">Copybook File</div><div class="cell" style="left:331px;width:156px;">Sources\Copybook\dfhaid.cpy</div></div>
<div class="row" style="top:239px"><svg width="16" height="16" viewBox="0 0 16 16" shape-rendering="crispEdges" style="left:3px;top:0px;"><path d="M1.5 .5H7.5L10.5 3.5V11.5H1.5Z" fill="#fff" stroke="#000"/><path d="M7.5 .5V3.5H10.5" fill="none" stroke="#000"/><path d="M7.5 6.5H12.5L14.5 8.5V14.5H7.5Z" fill="#fff" stroke="#000"/><path d="M7.5 14V6.5H12" fill="none" stroke="#808080"/><path d="M12.5 7V8.5H14" fill="none" stroke="#808080"/><path d="M11 1.5H13M13.5 1V6M12 4.5H15" stroke="#0000A0" fill="none"/></svg><div class="cell" style="left:20px;width:142px;">dfhbmsca.cpy</div><div class="cell" style="left:169px;width:156px;letter-spacing:-.1px;">Copybook File</div><div class="cell" style="left:331px;width:156px;">Sources\Copybook\dfhbmsca.cpy</div></div>
<div class="row" style="top:256px"><svg width="16" height="16" viewBox="0 0 16 16" shape-rendering="crispEdges" style="left:3px;top:0px;"><path d="M1.5 .5H7.5L10.5 3.5V11.5H1.5Z" fill="#fff" stroke="#000"/><path d="M7.5 .5V3.5H10.5" fill="none" stroke="#000"/><path d="M7.5 6.5H12.5L14.5 8.5V14.5H7.5Z" fill="#fff" stroke="#000"/><path d="M7.5 14V6.5H12" fill="none" stroke="#808080"/><path d="M12.5 7V8.5H14" fill="none" stroke="#808080"/><path d="M11 1.5H13M13.5 1V6M12 4.5H15" stroke="#0000A0" fill="none"/></svg><div class="cell" style="left:20px;width:142px;">dfheib.cpy</div><div class="cell" style="left:169px;width:156px;letter-spacing:-.1px;">Copybook File</div><div class="cell" style="left:331px;width:156px;">Sources\Copybook\dfheib.cpy</div></div>
<div class="row" style="top:273px"><svg width="16" height="16" viewBox="0 0 16 16" shape-rendering="crispEdges" style="left:3px;top:0px;"><path d="M1.5 .5H7.5L10.5 3.5V11.5H1.5Z" fill="#fff" stroke="#000"/><path d="M7.5 .5V3.5H10.5" fill="none" stroke="#000"/><path d="M7.5 6.5H12.5L14.5 8.5V14.5H7.5Z" fill="#fff" stroke="#000"/><path d="M7.5 14V6.5H12" fill="none" stroke="#808080"/><path d="M12.5 7V8.5H14" fill="none" stroke="#808080"/><path d="M11 1.5H13M13.5 1V6M12 4.5H15" stroke="#0000A0" fill="none"/></svg><div class="cell" style="left:20px;width:142px;">dlienv.cpy</div><div class="cell" style="left:169px;width:156px;letter-spacing:-.1px;">Copybook File</div><div class="cell" style="left:331px;width:156px;">Sources\Copybook\dlienv.cpy</div></div>
<div class="row" style="top:290px"><svg width="16" height="16" viewBox="0 0 16 16" shape-rendering="crispEdges" style="left:3px;top:0px;"><path d="M1.5 .5H7.5L10.5 3.5V11.5H1.5Z" fill="#fff" stroke="#000"/><path d="M7.5 .5V3.5H10.5" fill="none" stroke="#000"/><path d="M7.5 6.5H12.5L14.5 8.5V14.5H7.5Z" fill="#fff" stroke="#000"/><path d="M7.5 14V6.5H12" fill="none" stroke="#808080"/><path d="M12.5 7V8.5H14" fill="none" stroke="#808080"/><path d="M11 1.5H13M13.5 1V6M12 4.5H15" stroke="#0000A0" fill="none"/></svg><div class="cell" style="left:20px;width:142px;letter-spacing:.1px;">ERRPARM.CPY</div><div class="cell" style="left:169px;width:156px;letter-spacing:-.1px;">Copybook File</div><div class="cell" style="left:331px;width:156px;">Sources\Copybook\ERRPARM.CPY</div></div>
<div class="row" style="top:307px"><svg width="16" height="16" viewBox="0 0 16 16" shape-rendering="crispEdges" style="left:3px;top:0px;"><path d="M1.5 .5H7.5L10.5 3.5V11.5H1.5Z" fill="#fff" stroke="#000"/><path d="M7.5 .5V3.5H10.5" fill="none" stroke="#000"/><path d="M7.5 6.5H12.5L14.5 8.5V14.5H7.5Z" fill="#fff" stroke="#000"/><path d="M7.5 14V6.5H12" fill="none" stroke="#808080"/><path d="M12.5 7V8.5H14" fill="none" stroke="#808080"/><path d="M11 1.5H13M13.5 1V6M12 4.5H15" stroke="#0000A0" fill="none"/></svg><div class="cell" style="left:20px;width:142px;letter-spacing:.1px;">INQSET1.CPY</div><div class="cell" style="left:169px;width:156px;letter-spacing:-.1px;">Copybook File</div><div class="cell" style="left:331px;width:156px;">Sources\Copybook\INQSET1.CPY</div></div>
<div class="row" style="top:324px"><svg width="16" height="16" viewBox="0 0 16 16" shape-rendering="crispEdges" style="left:3px;top:0px;"><path d="M1.5 .5H7.5L10.5 3.5V11.5H1.5Z" fill="#fff" stroke="#000"/><path d="M7.5 .5V3.5H10.5" fill="none" stroke="#000"/><rect x="9" y="4" width="2" height="1" fill="#000"/><rect x="6" y="5" width="2" height="1" fill="#000"/><rect x="9" y="5" width="2" height="1" fill="#C0C0C0"/><rect x="12" y="5" width="2" height="1" fill="#000"/><rect x="6" y="6" width="1" height="1" fill="#000"/><rect x="7" y="6" width="6" height="1" fill="#C0C0C0"/><rect x="13" y="6" width="1" height="1" fill="#000"/><rect x="7" y="7" width="2" height="1" fill="#C0C0C0"/><rect x="9" y="7" width="1" height="1" fill="#E0E0E0"/><rect x="10" y="7" width="3" height="1" fill="#C0C0C0"/><rect x="5" y="8" width="1" height="1" fill="#000"/><rect x="6" y="8" width="2" height="1" fill="#C0C0C0"/><rect x="8" y="8" width="1" height="1" fill="#E0E0E0"/><rect x="9" y="8" width="2" height="1" fill="#000"/><rect x="11" y="8" width="3" height="1" fill="#C0C0C0"/><rect x="14" y="8" width="1" height="1" fill="#000"/><rect x="5" y="9" width="1" height="1" fill="#000"/><rect x="6" y="9" width="3" height="1" fill="#C0C0C0"/><rect x="9" y="9" width="2" height="1" fill="#000"/><rect x="11" y="9" width="3" height="1" fill="#C0C0C0"/><rect x="14" y="9" width="1" height="1" fill="#000"/><rect x="7" y="10" width="6" height="1" fill="#C0C0C0"/><rect x="6" y="11" width="1" height="1" fill="#000"/><rect x="7" y="11" width="6" height="1" fill="#C0C0C0"/><rect x="13" y="11" width="1" height="1" fill="#000"/><rect x="6" y="12" width="2" height="1" fill="#000"/><rect x="9" y="12" width="2" height="1" fill="#C0C0C0"/><rect x="12" y="12" width="2" height="1" fill="#000"/><rect x="9" y="13" width="2" height="1" fill="#000"/></svg><div class="cell" style="left:20px;width:142px;letter-spacing:.1px;">INV3000.PRC</div><div class="cell" style="left:169px;width:156px;letter-spacing:-.1px;">JCL Procedure</div><div class="cell" style="left:331px;width:156px;">Sources\JclProc\INV3000.PRC</div></div>
<div class="row" style="top:341px"><svg width="16" height="16" viewBox="0 0 16 16" shape-rendering="crispEdges" style="left:3px;top:0px;"><path d="M1.5 .5H7.5L10.5 3.5V11.5H1.5Z" fill="#fff" stroke="#000"/><path d="M7.5 .5V3.5H10.5" fill="none" stroke="#000"/><rect x="9" y="4" width="2" height="1" fill="#000"/><rect x="6" y="5" width="2" height="1" fill="#000"/><rect x="9" y="5" width="2" height="1" fill="#C0C0C0"/><rect x="12" y="5" width="2" height="1" fill="#000"/><rect x="6" y="6" width="1" height="1" fill="#000"/><rect x="7" y="6" width="6" height="1" fill="#C0C0C0"/><rect x="13" y="6" width="1" height="1" fill="#000"/><rect x="7" y="7" width="2" height="1" fill="#C0C0C0"/><rect x="9" y="7" width="1" height="1" fill="#E0E0E0"/><rect x="10" y="7" width="3" height="1" fill="#C0C0C0"/><rect x="5" y="8" width="1" height="1" fill="#000"/><rect x="6" y="8" width="2" height="1" fill="#C0C0C0"/><rect x="8" y="8" width="1" height="1" fill="#E0E0E0"/><rect x="9" y="8" width="2" height="1" fill="#000"/><rect x="11" y="8" width="3" height="1" fill="#C0C0C0"/><rect x="14" y="8" width="1" height="1" fill="#000"/><rect x="5" y="9" width="1" height="1" fill="#000"/><rect x="6" y="9" width="3" height="1" fill="#C0C0C0"/><rect x="9" y="9" width="2" height="1" fill="#000"/><rect x="11" y="9" width="3" height="1" fill="#C0C0C0"/><rect x="14" y="9" width="1" height="1" fill="#000"/><rect x="7" y="10" width="6" height="1" fill="#C0C0C0"/><rect x="6" y="11" width="1" height="1" fill="#000"/><rect x="7" y="11" width="6" height="1" fill="#C0C0C0"/><rect x="13" y="11" width="1" height="1" fill="#000"/><rect x="6" y="12" width="2" height="1" fill="#000"/><rect x="9" y="12" width="2" height="1" fill="#C0C0C0"/><rect x="12" y="12" width="2" height="1" fill="#000"/><rect x="9" y="13" width="2" height="1" fill="#000"/></svg><div class="cell" style="left:20px;width:142px;letter-spacing:.1px;">INV3100.PRC</div><div class="cell" style="left:169px;width:156px;letter-spacing:-.1px;">JCL Procedure</div><div class="cell" style="left:331px;width:156px;">Sources\JclProc\INV3100.PRC</div></div>
<div style="left:163px;top:18px;width:1px;height:330px;background:#ECE9D8"></div>
<div style="left:326px;top:18px;width:1px;height:330px;background:#ECE9D8"></div>
</div>
<div class="sbv" style="left:754px;top:119px;height:343px"></div><div class="sbtn" style="left:754px;top:119px"><i></i><svg width="17" height="17" viewBox="0 0 17 17" style="left:0;top:0"><path d="M4.8 10.4L8.5 6.6L12.2 10.4" fill="none" stroke="#4D6185" stroke-width="2.4"/></svg></div><div class="sbtn" style="left:754px;top:445px"><i></i><svg width="17" height="17" viewBox="0 0 17 17" style="left:0;top:0"><path d="M4.8 6.8L8.5 10.6L12.2 6.8" fill="none" stroke="#4D6185" stroke-width="2.4"/></svg></div><div style="left:754px;top:136px;width:17px;height:149px"><div class="thumb"></div><div style="left:5px;top:71px;width:7px;height:1px;background:#EEF4FE"></div><div style="left:6px;top:72px;width:7px;height:1px;background:#8CB0F8"></div><div style="left:5px;top:73px;width:7px;height:1px;background:#EEF4FE"></div><div style="left:6px;top:74px;width:7px;height:1px;background:#8CB0F8"></div><div style="left:5px;top:75px;width:7px;height:1px;background:#EEF4FE"></div><div style="left:6px;top:76px;width:7px;height:1px;background:#8CB0F8"></div><div style="left:5px;top:77px;width:7px;height:1px;background:#EEF4FE"></div><div style="left:6px;top:78px;width:7px;height:1px;background:#8CB0F8"></div></div>
<div class="sbh" style="left:267px;top:462px;width:487px"></div><div class="sbtn" style="left:267px;top:462px"><i></i><svg width="17" height="17" viewBox="0 0 17 17" style="left:0;top:0"><path d="M10.4 4.8L6.6 8.5L10.4 12.2" fill="none" stroke="#4D6185" stroke-width="2.4"/></svg></div><div class="sbtn" style="left:737px;top:462px"><i></i><svg width="17" height="17" viewBox="0 0 17 17" style="left:0;top:0"><path d="M6.8 4.8L10.6 8.5L6.8 12.2" fill="none" stroke="#4D6185" stroke-width="2.4"/></svg></div><div style="left:284px;top:462px;height:17px;width:354px"><div class="thumb"></div><div style="top:5px;left:174px;height:7px;width:1px;background:#EEF4FE"></div><div style="top:6px;left:175px;height:7px;width:1px;background:#8CB0F8"></div><div style="top:5px;left:176px;height:7px;width:1px;background:#EEF4FE"></div><div style="top:6px;left:177px;height:7px;width:1px;background:#8CB0F8"></div><div style="top:5px;left:178px;height:7px;width:1px;background:#EEF4FE"></div><div style="top:6px;left:179px;height:7px;width:1px;background:#8CB0F8"></div><div style="top:5px;left:180px;height:7px;width:1px;background:#EEF4FE"></div><div style="top:6px;left:181px;height:7px;width:1px;background:#8CB0F8"></div></div>
<div style="left:754px;top:462px;width:17px;height:17px;background:#ECE9D8"></div>
<div class="hdr" style="left:265px;top:485px;width:507px">Orphan Source - CUSTMAS-DCE1-0.CPY (Copybook File)</div>
<div style="left:757px;top:487px;width:14px;height:13px;background:#ECE9D8;border:1px solid;border-color:#fff #404040 #404040 #fff;box-shadow:-1px -1px 0 #ACA899 inset"></div>
<svg width="14" height="13" viewBox="0 0 14 13" style="left:757px;top:487px"><path d="M3.5 3L9.5 9M9.5 3L3.5 9" stroke="#000" stroke-width="1.7"/></svg>
<div style="left:265px;top:504px;width:59px;height:22px;background:#ECE9D8;border:1px solid;border-color:#fff #716F64 #716F64 #fff;box-shadow:-1px -1px 0 #ACA899 inset"></div>
<svg width="16" height="14" viewBox="0 0 16 14" shape-rendering="crispEdges" style="left:270px;top:508px"><rect x="3" y="0" width="12" height="1" fill="#fff"/><rect x="0" y="1" width="2" height="1" fill="#D0D0D0"/><rect x="3" y="1" width="1" height="1" fill="#fff"/><rect x="4" y="1" width="9" height="1" fill="#000"/><rect x="13" y="1" width="1" height="1" fill="#0000FF"/><rect x="14" y="1" width="1" height="1" fill="#fff"/><rect x="15" y="1" width="1" height="1" fill="#B8B8B8"/><rect x="0" y="2" width="2" height="1" fill="#D0D0D0"/><rect x="2" y="2" width="1" height="1" fill="#fff"/><rect x="3" y="2" width="1" height="1" fill="#000"/><rect x="4" y="2" width="6" height="1" fill="#fff"/><rect x="10" y="2" width="1" height="1" fill="#0000FF"/><rect x="11" y="2" width="2" height="1" fill="#fff"/><rect x="13" y="2" width="1" height="1" fill="#0000FF"/><rect x="14" y="2" width="1" height="1" fill="#fff"/><rect x="15" y="2" width="1" height="1" fill="#B8B8B8"/><rect x="0" y="3" width="2" height="1" fill="#D0D0D0"/><rect x="2" y="3" width="1" height="1" fill="#fff"/><rect x="3" y="3" width="1" height="1" fill="#000"/><rect x="4" y="3" width="5" height="1" fill="#fff"/><rect x="9" y="3" width="1" height="1" fill="#0000FF"/><rect x="10" y="3" width="3" height="1" fill="#fff"/><rect x="13" y="3" width="1" height="1" fill="#008080"/><rect x="14" y="3" width="1" height="1" fill="#fff"/><rect x="15" y="3" width="1" height="1" fill="#B8B8B8"/><rect x="0" y="4" width="2" height="1" fill="#D0D0D0"/><rect x="2" y="4" width="1" height="1" fill="#fff"/><rect x="3" y="4" width="1" height="1" fill="#000"/><rect x="4" y="4" width="4" height="1" fill="#fff"/><rect x="8" y="4" width="2" height="1" fill="#0000FF"/><rect x="10" y="4" width="3" height="1" fill="#fff"/><rect x="13" y="4" width="1" height="1" fill="#008080"/><rect x="14" y="4" width="1" height="1" fill="#fff"/><rect x="15" y="4" width="1" height="1" fill="#B8B8B8"/><rect x="0" y="5" width="2" height="1" fill="#D0D0D0"/><rect x="2" y="5" width="1" height="1" fill="#fff"/><rect x="3" y="5" width="1" height="1" fill="#000"/><rect x="4" y="5" width="3" height="1" fill="#fff"/><rect x="7" y="5" width="1" height="1" fill="#0000FF"/><rect x="8" y="5" width="2" height="1" fill="#fff"/><rect x="10" y="5" width="1" height="1" fill="#0000FF"/><rect x="11" y="5" width="2" height="1" fill="#fff"/><rect x="13" y="5" width="1" height="1" fill="#008080"/><rect x="14" y="5" width="1" height="1" fill="#fff"/><rect x="15" y="5" width="1" height="1" fill="#B8B8B8"/><rect x="0" y="6" width="2" height="1" fill="#D0D0D0"/><rect x="2" y="6" width="1" height="1" fill="#fff"/><rect x="3" y="6" width="1" height="1" fill="#000"/><rect x="4" y="6" width="2" height="1" fill="#fff"/><rect x="6" y="6" width="1" height="1" fill="#0000FF"/><rect x="7" y="6" width="4" height="1" fill="#fff"/><rect x="11" y="6" width="1" height="1" fill="#0000FF"/><rect x="12" y="6" width="1" height="1" fill="#fff"/><rect x="13" y="6" width="1" height="1" fill="#008080"/><rect x="14" y="6" width="1" height="1" fill="#fff"/><rect x="15" y="6" width="1" height="1" fill="#B8B8B8"/><rect x="1" y="7" width="1" height="1" fill="#D0D0D0"/><rect x="2" y="7" width="1" height="1" fill="#fff"/><rect x="3" y="7" width="1" height="1" fill="#000"/><rect x="4" y="7" width="1" height="1" fill="#fff"/><rect x="5" y="7" width="1" height="1" fill="#0000FF"/><rect x="6" y="7" width="6" height="1" fill="#fff"/><rect x="12" y="7" width="2" height="1" fill="#0000FF"/><rect x="14" y="7" width="1" height="1" fill="#fff"/><rect x="15" y="7" width="1" height="1" fill="#B8B8B8"/><rect x="1" y="8" width="1" height="1" fill="#000"/><rect x="2" y="8" width="1" height="1" fill="#fff"/><rect x="3" y="8" width="1" height="1" fill="#000"/><rect x="4" y="8" width="10" height="1" fill="#008080"/><rect x="14" y="8" width="1" height="1" fill="#fff"/><rect x="15" y="8" width="1" height="1" fill="#B8B8B8"/><rect x="1" y="9" width="2" height="1" fill="#000"/><rect x="3" y="9" width="12" height="1" fill="#fff"/><rect x="2" y="10" width="2" height="1" fill="#000"/><rect x="4" y="10" width="9" height="1" fill="#fff"/><rect x="13" y="10" width="2" height="1" fill="#000"/><rect x="3" y="11" width="11" height="1" fill="#000"/><rect x="2" y="12" width="1" height="1" fill="#C0B000"/><rect x="4" y="12" width="1" height="1" fill="#000"/><rect x="5" y="12" width="1" height="1" fill="#FF0000"/><rect x="6" y="12" width="1" height="1" fill="#000"/><rect x="8" y="12" width="1" height="1" fill="#C0B000"/><rect x="10" y="12" width="1" height="1" fill="#000"/><rect x="11" y="12" width="1" height="1" fill="#FF0000"/><rect x="12" y="12" width="1" height="1" fill="#000"/><rect x="14" y="12" width="1" height="1" fill="#C0B000"/><rect x="2" y="13" width="5" height="1" fill="#000"/><rect x="7" y="13" width="8" height="1" fill="#C0B000"/></svg>
<div class="t" style="left:288px;top:509px">Source</div>
<div style="left:325px;top:504px;width:13px;height:22px;background:#ECE9D8;border:1px solid;border-color:#fff #716F64 #716F64 #fff;box-shadow:-1px -1px 0 #ACA899 inset"></div>
<svg width="7" height="4" viewBox="0 0 7 4" shape-rendering="crispEdges" style="left:328px;top:514px"><path d="M0 0H7L3.5 3.5Z" fill="#000" shape-rendering="auto"/></svg>
<div style="left:691px;top:504px;width:64px;height:22px;background:#ECE9D8;border:1px solid;border-color:#fff #716F64 #716F64 #fff;box-shadow:-1px -1px 0 #ACA899 inset"></div>
<svg width="16" height="14" viewBox="0 0 16 14" shape-rendering="crispEdges" style="left:696px;top:508px"><rect x="3" y="0" width="12" height="1" fill="#fff"/><rect x="0" y="1" width="2" height="1" fill="#D0D0D0"/><rect x="3" y="1" width="1" height="1" fill="#fff"/><rect x="4" y="1" width="9" height="1" fill="#000"/><rect x="13" y="1" width="1" height="1" fill="#0000FF"/><rect x="14" y="1" width="1" height="1" fill="#fff"/><rect x="15" y="1" width="1" height="1" fill="#B8B8B8"/><rect x="0" y="2" width="2" height="1" fill="#D0D0D0"/><rect x="2" y="2" width="1" height="1" fill="#fff"/><rect x="3" y="2" width="1" height="1" fill="#000"/><rect x="4" y="2" width="6" height="1" fill="#fff"/><rect x="10" y="2" width="1" height="1" fill="#0000FF"/><rect x="11" y="2" width="2" height="1" fill="#fff"/><rect x="13" y="2" width="1" height="1" fill="#0000FF"/><rect x="14" y="2" width="1" height="1" fill="#fff"/><rect x="15" y="2" width="1" height="1" fill="#B8B8B8"/><rect x="0" y="3" width="2" height="1" fill="#D0D0D0"/><rect x="2" y="3" width="1" height="1" fill="#fff"/><rect x="3" y="3" width="1" height="1" fill="#000"/><rect x="4" y="3" width="5" height="1" fill="#fff"/><rect x="9" y="3" width="1" height="1" fill="#0000FF"/><rect x="10" y="3" width="3" height="1" fill="#fff"/><rect x="13" y="3" width="1" height="1" fill="#008080"/><rect x="14" y="3" width="1" height="1" fill="#fff"/><rect x="15" y="3" width="1" height="1" fill="#B8B8B8"/><rect x="0" y="4" width="2" height="1" fill="#D0D0D0"/><rect x="2" y="4" width="1" height="1" fill="#fff"/><rect x="3" y="4" width="1" height="1" fill="#000"/><rect x="4" y="4" width="4" height="1" fill="#fff"/><rect x="8" y="4" width="2" height="1" fill="#0000FF"/><rect x="10" y="4" width="3" height="1" fill="#fff"/><rect x="13" y="4" width="1" height="1" fill="#008080"/><rect x="14" y="4" width="1" height="1" fill="#fff"/><rect x="15" y="4" width="1" height="1" fill="#B8B8B8"/><rect x="0" y="5" width="2" height="1" fill="#D0D0D0"/><rect x="2" y="5" width="1" height="1" fill="#fff"/><rect x="3" y="5" width="1" height="1" fill="#000"/><rect x="4" y="5" width="3" height="1" fill="#fff"/><rect x="7" y="5" width="1" height="1" fill="#0000FF"/><rect x="8" y="5" width="2" height="1" fill="#fff"/><rect x="10" y="5" width="1" height="1" fill="#0000FF"/><rect x="11" y="5" width="2" height="1" fill="#fff"/><rect x="13" y="5" width="1" height="1" fill="#008080"/><rect x="14" y="5" width="1" height="1" fill="#fff"/><rect x="15" y="5" width="1" height="1" fill="#B8B8B8"/><rect x="0" y="6" width="2" height="1" fill="#D0D0D0"/><rect x="2" y="6" width="1" height="1" fill="#fff"/><rect x="3" y="6" width="1" height="1" fill="#000"/><rect x="4" y="6" width="2" height="1" fill="#fff"/><rect x="6" y="6" width="1" height="1" fill="#0000FF"/><rect x="7" y="6" width="4" height="1" fill="#fff"/><rect x="11" y="6" width="1" height="1" fill="#0000FF"/><rect x="12" y="6" width="1" height="1" fill="#fff"/><rect x="13" y="6" width="1" height="1" fill="#008080"/><rect x="14" y="6" width="1" height="1" fill="#fff"/><rect x="15" y="6" width="1" height="1" fill="#B8B8B8"/><rect x="1" y="7" width="1" height="1" fill="#D0D0D0"/><rect x="2" y="7" width="1" height="1" fill="#fff"/><rect x="3" y="7" width="1" height="1" fill="#000"/><rect x="4" y="7" width="1" height="1" fill="#fff"/><rect x="5" y="7" width="1" height="1" fill="#0000FF"/><rect x="6" y="7" width="6" height="1" fill="#fff"/><rect x="12" y="7" width="2" height="1" fill="#0000FF"/><rect x="14" y="7" width="1" height="1" fill="#fff"/><rect x="15" y="7" width="1" height="1" fill="#B8B8B8"/><rect x="1" y="8" width="1" height="1" fill="#000"/><rect x="2" y="8" width="1" height="1" fill="#fff"/><rect x="3" y="8" width="1" height="1" fill="#000"/><rect x="4" y="8" width="10" height="1" fill="#008080"/><rect x="14" y="8" width="1" height="1" fill="#fff"/><rect x="15" y="8" width="1" height="1" fill="#B8B8B8"/><rect x="1" y="9" width="2" height="1" fill="#000"/><rect x="3" y="9" width="12" height="1" fill="#fff"/><rect x="2" y="10" width="2" height="1" fill="#000"/><rect x="4" y="10" width="9" height="1" fill="#fff"/><rect x="13" y="10" width="2" height="1" fill="#000"/><rect x="3" y="11" width="11" height="1" fill="#000"/><rect x="2" y="12" width="1" height="1" fill="#C0B000"/><rect x="4" y="12" width="1" height="1" fill="#000"/><rect x="5" y="12" width="1" height="1" fill="#FF0000"/><rect x="6" y="12" width="1" height="1" fill="#000"/><rect x="8" y="12" width="1" height="1" fill="#C0B000"/><rect x="10" y="12" width="1" height="1" fill="#000"/><rect x="11" y="12" width="1" height="1" fill="#FF0000"/><rect x="12" y="12" width="1" height="1" fill="#000"/><rect x="14" y="12" width="1" height="1" fill="#C0B000"/><rect x="2" y="13" width="5" height="1" fill="#000"/><rect x="7" y="13" width="8" height="1" fill="#C0B000"/></svg>
<div class="t" style="left:714px;top:509px">(empty)</div>
<div style="left:756px;top:504px;width:13px;height:22px;background:#ECE9D8;border:1px solid;border-color:#fff #716F64 #716F64 #fff;box-shadow:-1px -1px 0 #ACA899 inset"></div>
<svg width="7" height="4" viewBox="0 0 7 4" shape-rendering="crispEdges" style="left:759px;top:514px"><path d="M0 0H7L3.5 3.5Z" fill="#000" shape-rendering="auto"/></svg>
<div style="left:265px;top:528px;width:507px;height:69px;border:1px solid #ACA899;border-right-color:#fff;border-bottom-color:#fff"></div>
<div style="left:266px;top:529px;width:505px;height:67px;border:1px solid #716F64;border-right-color:#F1EFE2;border-bottom-color:#F1EFE2;background:#ECE9D8"></div>
<div style="left:267px;top:530px;width:503px;height:24px;border:1px solid;border-color:#fff #ACA899 #ACA899 #fff"></div>
<svg width="15" height="16" viewBox="0 0 15 16" shape-rendering="crispEdges" style="left:272px;top:534px"><rect x="0" y="0" width="12" height="1" fill="#ACA899"/><rect x="0" y="1" width="1" height="1" fill="#ACA899"/><rect x="1" y="1" width="1" height="1" fill="#fff"/><rect x="2" y="1" width="1" height="1" fill="#ACA899"/><rect x="3" y="1" width="1" height="1" fill="#fff"/><rect x="4" y="1" width="1" height="1" fill="#ACA899"/><rect x="5" y="1" width="1" height="1" fill="#fff"/><rect x="6" y="1" width="1" height="1" fill="#ACA899"/><rect x="7" y="1" width="1" height="1" fill="#fff"/><rect x="8" y="1" width="1" height="1" fill="#ACA899"/><rect x="9" y="1" width="1" height="1" fill="#fff"/><rect x="10" y="1" width="2" height="1" fill="#ACA899"/><rect x="12" y="1" width="1" height="1" fill="#fff"/><rect x="0" y="2" width="1" height="1" fill="#ACA899"/><rect x="1" y="2" width="1" height="1" fill="#fff"/><rect x="2" y="2" width="4" height="1" fill="#ACA899"/><rect x="6" y="2" width="2" height="1" fill="#fff"/><rect x="8" y="2" width="4" height="1" fill="#ACA899"/><rect x="12" y="2" width="1" height="1" fill="#fff"/><rect x="0" y="3" width="4" height="1" fill="#ACA899"/><rect x="4" y="3" width="2" height="1" fill="#fff"/><rect x="6" y="3" width="3" height="1" fill="#ACA899"/><rect x="9" y="3" width="1" height="1" fill="#fff"/><rect x="10" y="3" width="2" height="1" fill="#ACA899"/><rect x="12" y="3" width="1" height="1" fill="#fff"/><rect x="0" y="4" width="3" height="1" fill="#ACA899"/><rect x="3" y="4" width="1" height="1" fill="#fff"/><rect x="4" y="4" width="6" height="1" fill="#ACA899"/><rect x="10" y="4" width="1" height="1" fill="#fff"/><rect x="11" y="4" width="2" height="1" fill="#ACA899"/><rect x="13" y="4" width="1" height="1" fill="#fff"/><rect x="0" y="5" width="2" height="1" fill="#ACA899"/><rect x="2" y="5" width="1" height="1" fill="#fff"/><rect x="3" y="5" width="2" height="1" fill="#ACA899"/><rect x="5" y="5" width="1" height="1" fill="#fff"/><rect x="6" y="5" width="4" height="1" fill="#ACA899"/><rect x="10" y="5" width="1" height="1" fill="#fff"/><rect x="11" y="5" width="2" height="1" fill="#ACA899"/><rect x="13" y="5" width="1" height="1" fill="#fff"/><rect x="0" y="6" width="2" height="1" fill="#ACA899"/><rect x="2" y="6" width="1" height="1" fill="#fff"/><rect x="3" y="6" width="1" height="1" fill="#ACA899"/><rect x="4" y="6" width="1" height="1" fill="#fff"/><rect x="5" y="6" width="6" height="1" fill="#ACA899"/><rect x="11" y="6" width="1" height="1" fill="#fff"/><rect x="12" y="6" width="1" height="1" fill="#ACA899"/><rect x="13" y="6" width="1" height="1" fill="#fff"/><rect x="0" y="7" width="2" height="1" fill="#ACA899"/><rect x="2" y="7" width="1" height="1" fill="#fff"/><rect x="3" y="7" width="8" height="1" fill="#ACA899"/><rect x="11" y="7" width="1" height="1" fill="#fff"/><rect x="12" y="7" width="1" height="1" fill="#ACA899"/><rect x="13" y="7" width="1" height="1" fill="#fff"/><rect x="0" y="8" width="2" height="1" fill="#ACA899"/><rect x="2" y="8" width="1" height="1" fill="#fff"/><rect x="3" y="8" width="7" height="1" fill="#ACA899"/><rect x="10" y="8" width="1" height="1" fill="#fff"/><rect x="11" y="8" width="2" height="1" fill="#ACA899"/><rect x="13" y="8" width="1" height="1" fill="#fff"/><rect x="0" y="9" width="3" height="1" fill="#ACA899"/><rect x="3" y="9" width="1" height="1" fill="#fff"/><rect x="4" y="9" width="6" height="1" fill="#ACA899"/><rect x="10" y="9" width="1" height="1" fill="#fff"/><rect x="11" y="9" width="2" height="1" fill="#ACA899"/><rect x="13" y="9" width="1" height="1" fill="#fff"/><rect x="0" y="10" width="4" height="1" fill="#ACA899"/><rect x="4" y="10" width="2" height="1" fill="#fff"/><rect x="6" y="10" width="2" height="1" fill="#ACA899"/><rect x="8" y="10" width="2" height="1" fill="#fff"/><rect x="10" y="10" width="3" height="1" fill="#ACA899"/><rect x="13" y="10" width="1" height="1" fill="#fff"/><rect x="0" y="11" width="2" height="1" fill="#ACA899"/><rect x="2" y="11" width="1" height="1" fill="#fff"/><rect x="3" y="11" width="10" height="1" fill="#ACA899"/><rect x="13" y="11" width="1" height="1" fill="#fff"/><rect x="0" y="12" width="1" height="1" fill="#ACA899"/><rect x="1" y="12" width="1" height="1" fill="#fff"/><rect x="2" y="12" width="12" height="1" fill="#ACA899"/><rect x="14" y="12" width="1" height="1" fill="#fff"/><rect x="0" y="13" width="15" height="1" fill="#ACA899"/><rect x="1" y="14" width="12" height="1" fill="#fff"/><rect x="13" y="14" width="2" height="1" fill="#ACA899"/><rect x="13" y="15" width="2" height="1" fill="#fff"/></svg>
<svg width="7" height="4" viewBox="0 0 7 4" shape-rendering="crispEdges" style="left:293px;top:541px"><path d="M0 0H7L3.5 3.5Z" fill="#000" shape-rendering="auto"/></svg>
<div style="left:306px;top:533px;width:130px;height:18px;background:#fff;border:1px solid;border-color:#ACA899 #fff #fff #ACA899"></div><div style="left:307px;top:534px;width:128px;height:16px;background:#fff;border:1px solid;border-color:#716F64 #F1EFE2 #F1EFE2 #716F64;line-height:14px;padding-left:2px;font-size:12px"></div>
<div class="sep" style="left:440px;top:533px;height:18px"></div>
<svg width="17" height="12" viewBox="0 0 17 12" shape-rendering="crispEdges" style="left:448px;top:536px"><rect x="5" y="0" width="12" height="1" fill="#FFFFE1"/><rect x="5" y="1" width="4" height="1" fill="#000080"/><rect x="9" y="1" width="1" height="1" fill="#FFFFE1"/><rect x="10" y="1" width="3" height="1" fill="#000080"/><rect x="13" y="1" width="1" height="1" fill="#FFFFE1"/><rect x="14" y="1" width="2" height="1" fill="#000080"/><rect x="16" y="1" width="1" height="1" fill="#FFFFE1"/><rect x="1" y="2" width="1" height="1" fill="#000"/><rect x="5" y="2" width="12" height="1" fill="#FFFFE1"/><rect x="1" y="3" width="2" height="1" fill="#000"/><rect x="5" y="3" width="12" height="1" fill="#FFFFE1"/><rect x="1" y="4" width="3" height="1" fill="#000"/><rect x="5" y="4" width="3" height="1" fill="#000080"/><rect x="8" y="4" width="1" height="1" fill="#FFFFE1"/><rect x="9" y="4" width="5" height="1" fill="#000080"/><rect x="14" y="4" width="1" height="1" fill="#FFFFE1"/><rect x="15" y="4" width="1" height="1" fill="#000080"/><rect x="16" y="4" width="1" height="1" fill="#FFFFE1"/><rect x="1" y="5" width="3" height="1" fill="#000"/><rect x="5" y="5" width="12" height="1" fill="#FFFFE1"/><rect x="1" y="6" width="2" height="1" fill="#000"/><rect x="5" y="6" width="12" height="1" fill="#FFFFE1"/><rect x="1" y="7" width="1" height="1" fill="#000"/><rect x="5" y="7" width="1" height="1" fill="#000080"/><rect x="6" y="7" width="1" height="1" fill="#FFFFE1"/><rect x="7" y="7" width="3" height="1" fill="#000080"/><rect x="10" y="7" width="1" height="1" fill="#FFFFE1"/><rect x="11" y="7" width="5" height="1" fill="#000080"/><rect x="16" y="7" width="1" height="1" fill="#FFFFE1"/><rect x="5" y="8" width="12" height="1" fill="#FFFFE1"/><rect x="5" y="9" width="12" height="1" fill="#FFFFE1"/><rect x="5" y="10" width="5" height="1" fill="#000080"/><rect x="10" y="10" width="1" height="1" fill="#FFFFE1"/><rect x="11" y="10" width="5" height="1" fill="#000080"/><rect x="16" y="10" width="1" height="1" fill="#FFFFE1"/><rect x="5" y="11" width="12" height="1" fill="#FFFFE1"/></svg>
<div style="left:470px;top:533px;width:61px;height:18px;background:#fff;border:1px solid;border-color:#ACA899 #fff #fff #ACA899"></div><div style="left:471px;top:534px;width:59px;height:16px;background:#fff;border:1px solid;border-color:#716F64 #F1EFE2 #F1EFE2 #716F64;line-height:14px;padding-left:2px;font-size:12px">1</div>
<div class="sep" style="left:538px;top:533px;height:18px"></div>
<svg width="15" height="15" viewBox="0 0 15 15" shape-rendering="crispEdges" style="left:548px;top:534px;"><path d="M5.5 0V4M5.5 11V14" stroke="#ACA899" stroke-dasharray="1 1"/><rect x="1.5" y="4.5" width="8" height="7" fill="none" stroke="#ACA899"/><path d="M3 8.5H8" stroke="#ACA899"/><path d="M10 8.5H14" stroke="#ACA899" stroke-dasharray="1 1"/></svg>
<svg width="19" height="16" viewBox="0 0 19 16" shape-rendering="crispEdges" style="left:568px;top:533px;"><path d="M1.5 5V16M16.5 5V16" stroke="#00C040" stroke-dasharray="1 1"/><text x="1" y="6" font-family="'DejaVu Sans Condensed',sans-serif" font-weight="bold" font-size="6.5" fill="#000" shape-rendering="auto">8</text><text x="8.5" y="6" font-family="'DejaVu Sans Condensed',sans-serif" font-weight="bold" font-size="6.5" fill="#000">72</text></svg>
<div class="sep" style="left:592px;top:533px;height:18px"></div>
<svg width="17" height="16" viewBox="0 0 17 16" shape-rendering="crispEdges" style="left:600px;top:534px;"><path d="M.5 3.5L2.5 1.5H6.5L8.5 3.5H12.5V12.5H.5Z" fill="#E8D060" stroke="#000"/><path d="M1.5 4.5H11.5" stroke="#FFF8C0"/><rect x="4.5" y="5.5" width="11" height="8" fill="#C0C0C0" stroke="#000"/><rect x="6.5" y="7.5" width="7" height="4" fill="#0000E0" stroke="#000080"/><path d="M6 14.5H15M8 15.5H16" stroke="#000"/></svg>
<div style="left:755px;top:531px;width:16px;height:22px;background:#ECE9D8;border:1px solid;border-color:#fff #716F64 #716F64 #fff;box-shadow:-1px -1px 0 #ACA899 inset"></div>
<svg width="5" height="9" viewBox="0 0 5 9" style="left:760px;top:537px"><path d="M0 0L4.5 4.5L0 9Z" fill="#000"/></svg>
<div style="left:267px;top:554px;width:488px;height:25px;background:#fff;overflow:hidden"><div style="left:0;top:0;width:2px;height:25px;background:#800000"></div><div style="left:2px;top:0;width:4px;height:25px;background-image:repeating-conic-gradient(#fff 0 25%,#D8D8E8 0 50%);background-size:2px 2px"></div><div style="left:53px;top:1px;white-space:pre;font:13.33px/15px 'Liberation Mono',monospace;color:#000">* This file was generated using Modernization Workbench</div><div style="left:53px;top:16px;white-space:pre;font:13.33px/15px 'Liberation Mono',monospace;color:#000">*    version 7.3</div></div>
<div style="left:755px;top:554px;width:16px;height:12px;background:#ECE9D8;border:1px solid;border-color:#fff #716F64 #716F64 #fff;box-shadow:-1px -1px 0 #ACA899 inset"></div>
<svg width="7" height="4" viewBox="0 0 7 4" style="left:759px;top:558px"><path d="M0 4H7L3.5 0Z" fill="#000"/></svg>
<div style="left:755px;top:566px;width:16px;height:13px;background:#ECE9D8;border:1px solid;border-color:#fff #716F64 #716F64 #fff;box-shadow:-1px -1px 0 #ACA899 inset"></div>
<svg width="7" height="4" viewBox="0 0 7 4" shape-rendering="crispEdges" style="left:759px;top:571px"><path d="M0 0H7L3.5 3.5Z" fill="#000" shape-rendering="auto"/></svg>
<div style="left:267px;top:579px;width:488px;height:16px;background-color:#FAF9F4;background-image:repeating-conic-gradient(#fff 0 25%,#F4F2E8 0 50%);background-size:2px 2px"></div>
<div style="left:267px;top:579px;width:17px;height:16px;background:#ECE9D8;border:1px solid;border-color:#fff #716F64 #716F64 #fff;box-shadow:-1px -1px 0 #ACA899 inset"></div>
<svg width="5" height="9" viewBox="0 0 5 9" style="left:272px;top:583px"><path d="M5 0L.5 4.5L5 9Z" fill="#000"/></svg>
<div style="left:284px;top:579px;width:373px;height:16px;background:#ECE9D8;border:1px solid;border-color:#fff #716F64 #716F64 #fff;box-shadow:-1px -1px 0 #ACA899 inset"></div>
<div style="left:738px;top:579px;width:17px;height:16px;background:#ECE9D8;border:1px solid;border-color:#fff #716F64 #716F64 #fff;box-shadow:-1px -1px 0 #ACA899 inset"></div>
<svg width="5" height="9" viewBox="0 0 5 9" style="left:744px;top:583px"><path d="M0 0L4.5 4.5L0 9Z" fill="#000"/></svg>
<div style="left:755px;top:579px;width:16px;height:16px;background:#ECE9D8"></div>
</body></html>
